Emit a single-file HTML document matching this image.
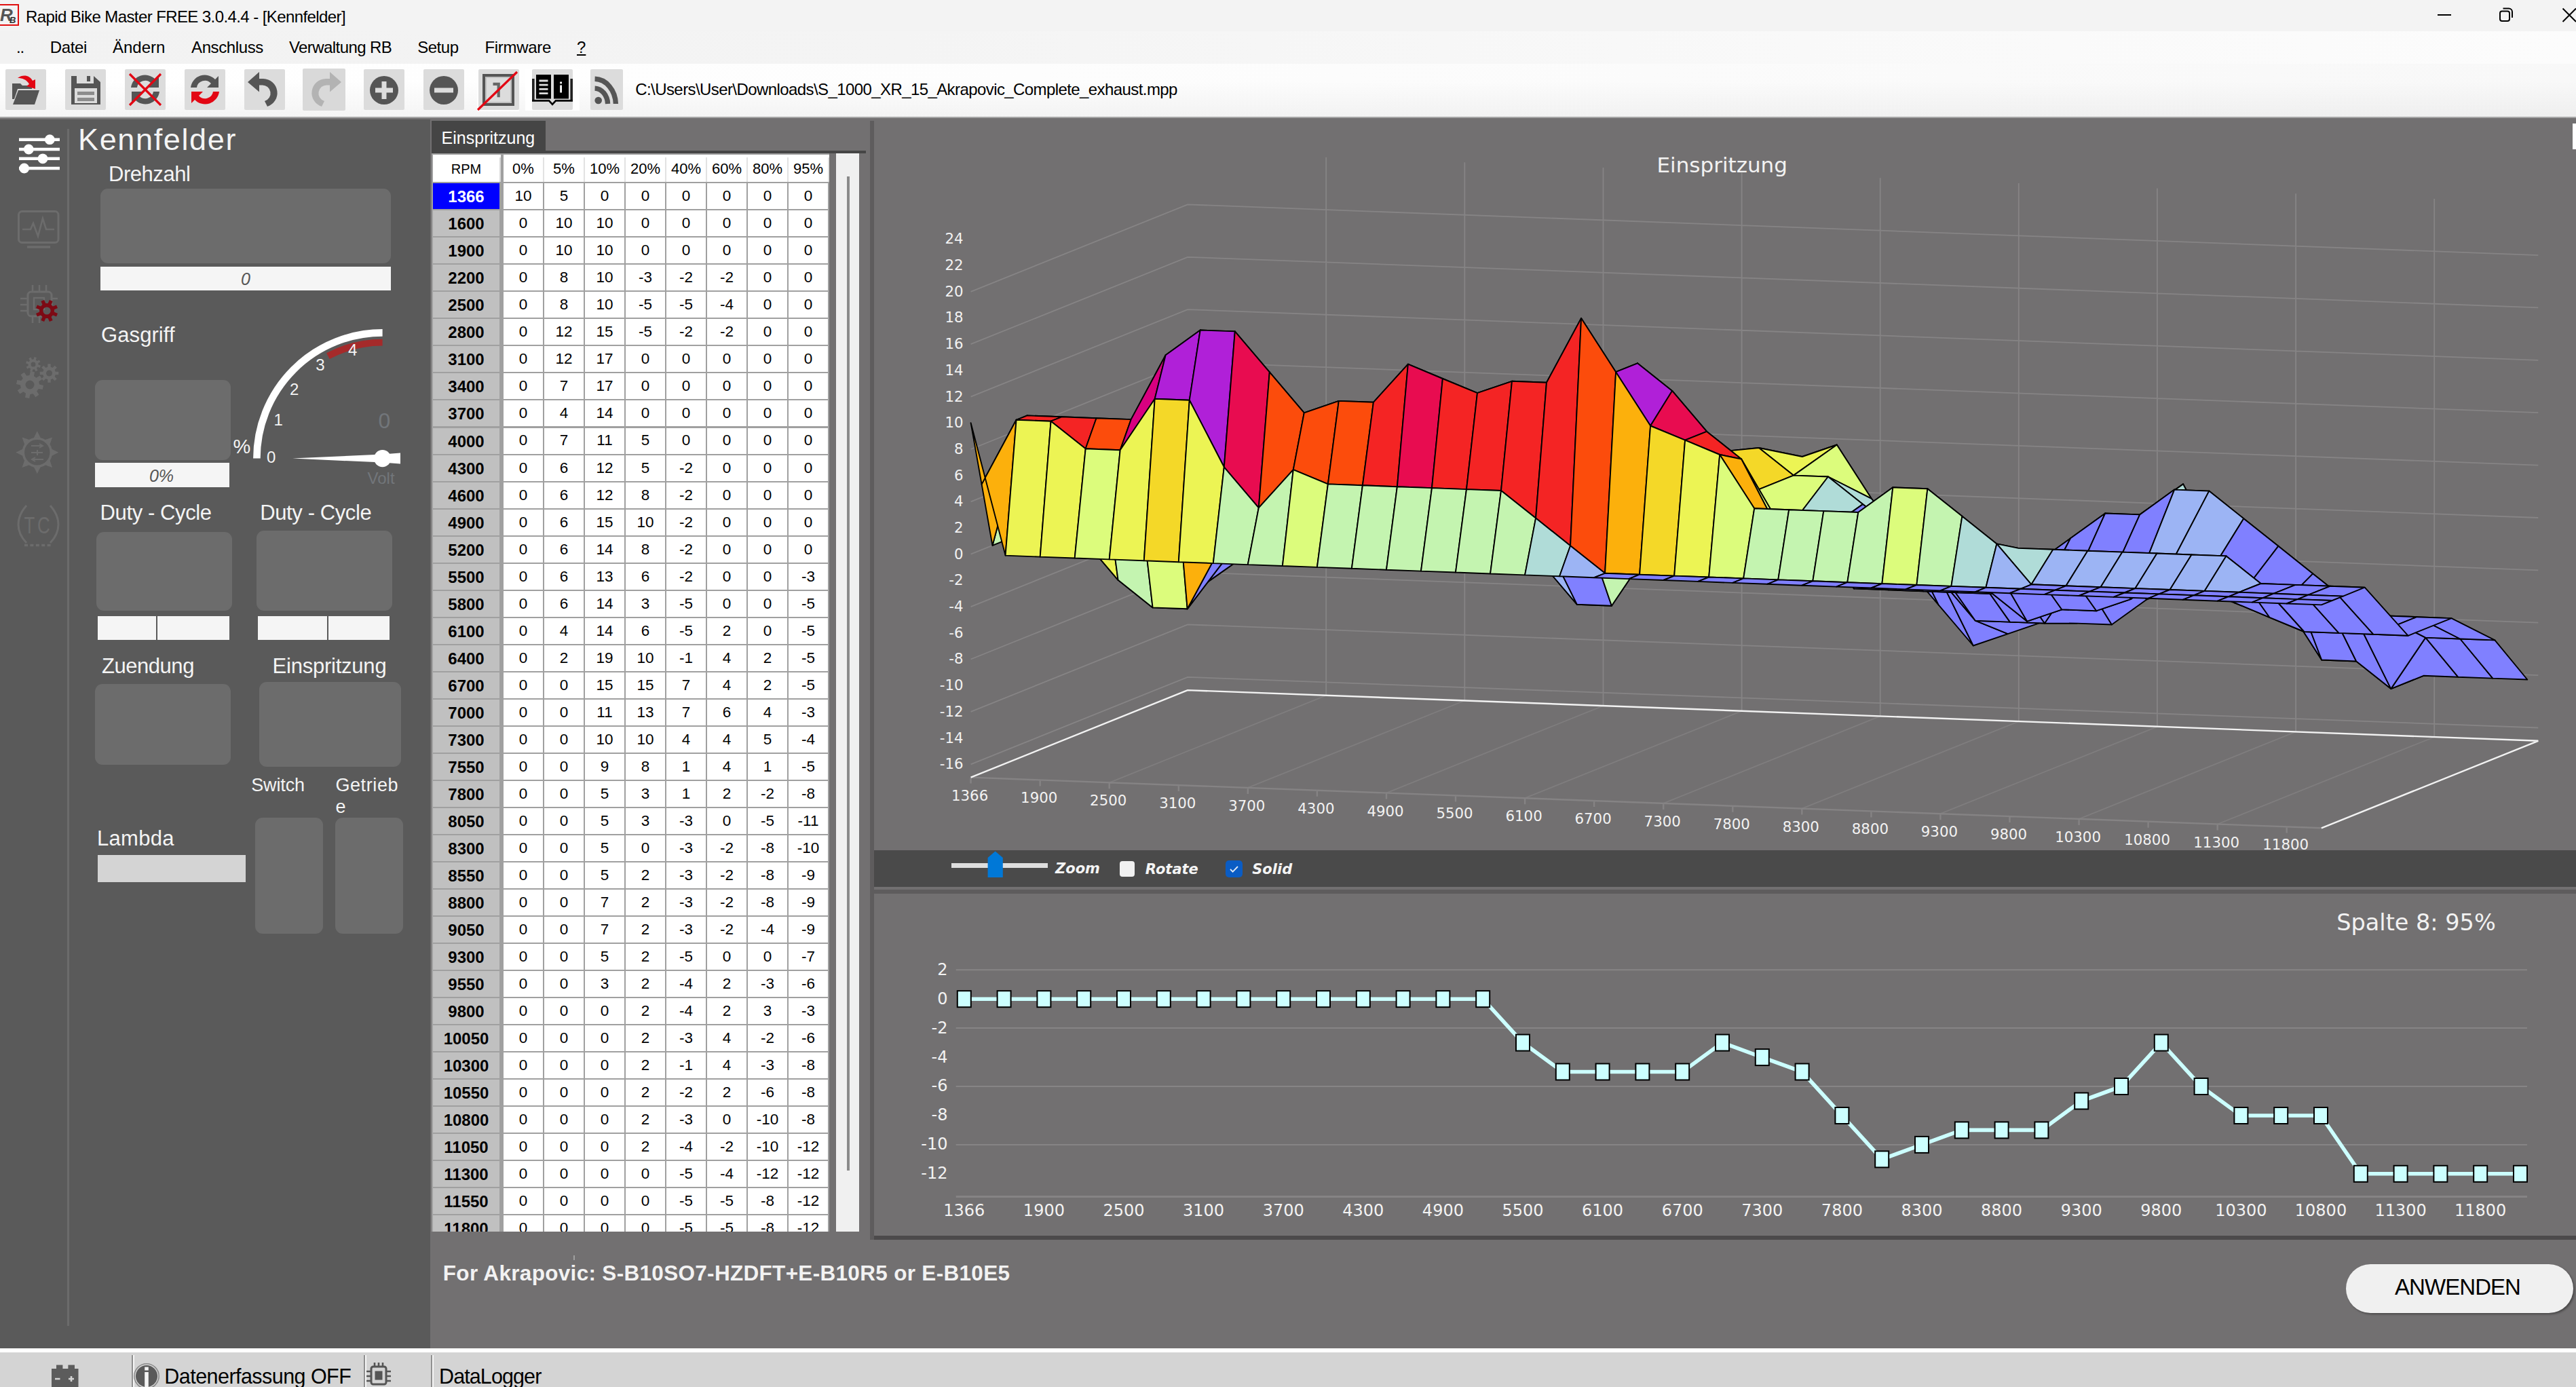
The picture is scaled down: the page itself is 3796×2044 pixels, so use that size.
<!DOCTYPE html>
<html><head><meta charset="utf-8"><title>Rapid Bike Master FREE 3.0.4.4 - [Kennfelder]</title>
<style>
html,body{margin:0;padding:0;}
body{width:3796px;height:2044px;overflow:hidden;position:relative;background:#727071;font-family:"Liberation Sans",sans-serif;}
svg{position:absolute;overflow:visible;}
svg text{white-space:pre;}
</style></head><body>
<div style="position:absolute;left:0.00px;top:0.00px;width:3796.00px;height:46.00px;background:#f3f3f3;"></div>
<div style="position:absolute;left:0.00px;top:46.00px;width:3796.00px;height:47.50px;background:linear-gradient(90deg,#f2f2f2 0%,#f4f4f4 35%,#f9f9f9 70%,#fcfcfc 100%);"></div>
<div style="position:absolute;left:0.00px;top:93.50px;width:3796.00px;height:78.50px;background:linear-gradient(90deg,#ffffff 0%,#fdfdfd 40%,#f8f8f8 100%);"></div>
<div style="position:absolute;left:0.00px;top:120.00px;width:3796.00px;height:52.00px;background:linear-gradient(rgba(0,0,0,0),rgba(0,0,0,0.04));"></div>
<div style="position:absolute;left:0.00px;top:172.00px;width:3796.00px;height:2.30px;background:#a6a6a6;"></div>
<svg style="left:0;top:6px" width="30" height="34" viewBox="0 0 30 34">
<rect x="-4" y="1" width="31" height="30" fill="#f4f4f4" stroke="#e01010" stroke-width="2"/>
<text x="0" y="25" font-family="Liberation Sans, sans-serif" font-weight="bold" font-style="italic" font-size="26" fill="#555">R</text>
<text x="14" y="28" font-family="Liberation Sans, sans-serif" font-weight="bold" font-style="italic" font-size="13" fill="#333">B</text>
</svg>
<div style="position:absolute;top:12.88px;font:normal normal 24px/24px 'Liberation Sans', sans-serif;color:#000;white-space:nowrap;letter-spacing:-0.59px;left:38.00px;">Rapid Bike Master FREE 3.0.4.4 - [Kennfelder]</div>
<svg style="left:3580px;top:0" width="216" height="46" viewBox="0 0 216 46" fill="none" stroke="#000" stroke-width="2">
<path d="M12 22H32"/>
<rect x="104" y="16.5" width="14" height="14.5" rx="3"/>
<path d="M108.5 12.5H117a5 5 0 0 1 5 5V26"/>
<path d="M196.5 12.5L216 32M216 12.5L196.5 32"/>
</svg>
<div style="position:absolute;top:57.88px;font:normal normal 24px/24px 'Liberation Sans', sans-serif;color:#000;white-space:nowrap;letter-spacing:-1.168px;left:24.00px;">..</div>
<div style="position:absolute;top:57.88px;font:normal normal 24px/24px 'Liberation Sans', sans-serif;color:#000;white-space:nowrap;letter-spacing:-0.366px;left:73.80px;">Datei</div>
<div style="position:absolute;top:57.88px;font:normal normal 24px/24px 'Liberation Sans', sans-serif;color:#000;white-space:nowrap;letter-spacing:0.001px;left:166.00px;">Ändern</div>
<div style="position:absolute;top:57.88px;font:normal normal 24px/24px 'Liberation Sans', sans-serif;color:#000;white-space:nowrap;letter-spacing:-0.376px;left:282.00px;">Anschluss</div>
<div style="position:absolute;top:57.88px;font:normal normal 24px/24px 'Liberation Sans', sans-serif;color:#000;white-space:nowrap;letter-spacing:-0.581px;left:426.00px;">Verwaltung RB</div>
<div style="position:absolute;top:57.88px;font:normal normal 24px/24px 'Liberation Sans', sans-serif;color:#000;white-space:nowrap;letter-spacing:-0.464px;left:615.20px;">Setup</div>
<div style="position:absolute;top:57.88px;font:normal normal 24px/24px 'Liberation Sans', sans-serif;color:#000;white-space:nowrap;letter-spacing:-0.3px;left:714.40px;">Firmware</div>
<div style="position:absolute;top:57.88px;font:normal normal 24px/24px 'Liberation Sans', sans-serif;color:#000;white-space:nowrap;left:850.00px;text-decoration:underline;">?</div>
<div style="position:absolute;left:8.00px;top:102.00px;width:60.00px;height:60.00px;background:#dcdcdc;border-radius:2px;"></div>
<svg style="left:8px;top:102px" width="60" height="60" viewBox="0 0 60 60">
<path d="M10 21h12l3 3h14v5H18l-5 15H10z" fill="#555555"/>
<path d="M19 31h31l-7 21H11z" fill="#555555"/>
<path d="M18 13c8-6 18-4 22 4l4-2 0 14-13-4 4-3c-4-7-10-9-17-9z" fill="#e30613"/>
</svg>
<div style="position:absolute;left:96.00px;top:102.00px;width:60.00px;height:60.00px;background:#dcdcdc;border-radius:2px;"></div>
<svg style="left:96px;top:102px" width="60" height="60" viewBox="0 0 60 60">
<path d="M9 10h33l10 9v33H9z" fill="#555555"/>
<rect x="17" y="10" width="25" height="11" fill="#dcdcdc"/>
<rect x="32" y="10" width="5" height="8" fill="#555555"/>
<rect x="14" y="28" width="33" height="22" fill="#dcdcdc"/>
<rect x="18" y="33" width="25" height="5" fill="#8c8c8c"/>
<rect x="18" y="42" width="25" height="5" fill="#8c8c8c"/>
</svg>
<div style="position:absolute;left:184.00px;top:102.00px;width:60.00px;height:60.00px;background:#dcdcdc;border-radius:2px;"></div>
<svg style="left:184px;top:102px" width="60" height="60" viewBox="0 0 60 60">
<path d="M9 27a21 21 0 0 1 36-12l5-5v17H33l6-6a12 12 0 0 0-21 6z" fill="#555555"/>
<path d="M51 33a21 21 0 0 1-36 12l-5 5V33h17l-6 6a12 12 0 0 0 21-6z" fill="#555555"/>
<path d="M7 7L53 53M53 7L7 53" stroke="#e30613" stroke-width="3.2"/>
</svg>
<div style="position:absolute;left:272.00px;top:102.00px;width:60.00px;height:60.00px;background:#dcdcdc;border-radius:2px;"></div>
<svg style="left:272px;top:102px" width="60" height="60" viewBox="0 0 60 60">
<path d="M9 27a21 21 0 0 1 36-12l5-5v17H33l6-6a12 12 0 0 0-21 6z" fill="#555555"/>
<path d="M51 33a21 21 0 0 1-36 12l-5 5V33h17l-6 6a12 12 0 0 0 21-6z" fill="#e30613"/>
</svg>
<div style="position:absolute;left:360.00px;top:102.00px;width:60.00px;height:60.00px;background:#dcdcdc;border-radius:2px;"></div>
<svg style="left:360px;top:102px" width="60" height="60" viewBox="0 0 60 60"><path d="M22 4v10h6a21 21 0 0 1 6 41l-4-8a12 12 0 0 0-4-23.5h-4v10L5 19z" fill="#555555"/></svg>
<div style="position:absolute;left:446.00px;top:101.00px;width:63.00px;height:62.00px;background:#d9d9d9;border-radius:2px;"></div>
<svg style="left:448px;top:102px" width="60" height="60" viewBox="0 0 60 60"><g transform="translate(60,0) scale(-1,1)"><path d="M22 4v10h6a21 21 0 0 1 6 41l-4-8a12 12 0 0 0-4-23.5h-4v10L5 19z" fill="#b3b3b3"/></g></svg>
<div style="position:absolute;left:536.00px;top:102.00px;width:60.00px;height:60.00px;background:#dcdcdc;border-radius:2px;"></div>
<svg style="left:536px;top:102px" width="60" height="60" viewBox="0 0 60 60">
<circle cx="30" cy="31" r="21" fill="#555555"/><path d="M30 18v26M17 31h26" stroke="#dcdcdc" stroke-width="7"/></svg>
<div style="position:absolute;left:624.00px;top:102.00px;width:60.00px;height:60.00px;background:#dcdcdc;border-radius:2px;"></div>
<svg style="left:624px;top:102px" width="60" height="60" viewBox="0 0 60 60">
<circle cx="30" cy="31" r="21" fill="#555555"/><path d="M16 31h28" stroke="#dcdcdc" stroke-width="7"/></svg>
<div style="position:absolute;left:702.50px;top:101.00px;width:62.50px;height:62.60px;background:#ffffff;"></div>
<div style="position:absolute;left:705.00px;top:102.00px;width:60.00px;height:60.00px;background:#dcdcdc;border-radius:2px;"></div>
<svg style="left:705px;top:102px" width="60" height="60" viewBox="0 0 60 60">
<rect x="8" y="9" width="43" height="43" fill="none" stroke="#555555" stroke-width="4"/>
<rect x="11" y="12" width="37" height="37" fill="none" stroke="#b4b4b4" stroke-width="1.4"/>
<path d="M21.5 21.8h8.2v19.5" fill="none" stroke="#666" stroke-width="4.2"/>
<path d="M-1 60L57 4" stroke="#e30613" stroke-width="3.2"/>
</svg>
<div style="position:absolute;left:774.00px;top:101.00px;width:80.00px;height:62.00px;background:#ffffff;"></div>
<div style="position:absolute;left:784.00px;top:102.00px;width:60.00px;height:60.00px;background:#dcdcdc;border-radius:2px;"></div>
<svg style="left:784px;top:102px" width="60" height="60" viewBox="0 0 60 60">
<path d="M1.8 14V46" fill="none" stroke="#222" stroke-width="3.6"/><path d="M58.2 14V46" fill="none" stroke="#222" stroke-width="3.6"/>
<path d="M0 46.4H25l5 5.5 5-5.5H60" fill="none" stroke="#000" stroke-width="2.6"/>
<rect x="6" y="8" width="22" height="35.5" fill="#000"/><rect x="32" y="8" width="22" height="35.5" fill="#000"/>
<path d="M10.5 17h13M10.5 23.2h13M10.5 29.4h13M10.5 35.6h13" stroke="#dcdcdc" stroke-width="2.8"/>
<rect x="41.2" y="18.5" width="2.8" height="2.8" fill="#fff"/><rect x="41.2" y="23.5" width="2.8" height="11" fill="#fff"/>
</svg>
<div style="position:absolute;left:870.00px;top:102.00px;width:48.00px;height:60.00px;background:#dcdcdc;border-radius:2px;"></div>
<svg style="left:870px;top:102px" width="48" height="60" viewBox="0 0 48 60" fill="none" stroke="#555555" stroke-width="7.4">
<path d="M6.6 14.3A31.5 38 0 0 1 37.4 51"/><path d="M6.6 28.1A19.6 24.2 0 0 1 25.6 51"/><circle cx="11.7" cy="46" r="5.3" fill="#555555" stroke="none"/></svg>
<div style="position:absolute;top:119.98px;font:normal normal 24px/24px 'Liberation Sans', sans-serif;color:#000;white-space:nowrap;letter-spacing:-0.586px;left:936.30px;">C:\Users\User\Downloads\S_1000_XR_15_Akrapovic_Complete_exhaust.mpp</div>
<div style="position:absolute;left:0.00px;top:176.30px;width:634.00px;height:1810.70px;background:#5a5a5a;"></div>
<div style="position:absolute;left:98.50px;top:190.00px;width:3.40px;height:1764.00px;background:#6b6b6b;"></div>
<svg style="left:20px;top:190px" width="80" height="70" viewBox="20 190 80 70">
<g stroke="#fff" stroke-width="4.4"><path d="M28 205.7H88M28 220H88M28 233.8H88M28 248H88"/></g>
<g fill="#fff"><circle cx="73.3" cy="205.7" r="7.4"/><circle cx="42.3" cy="220" r="7.4"/><circle cx="63" cy="233.8" r="7.4"/><circle cx="35.7" cy="248" r="7.4"/></g>
</svg>
<svg style="left:20px;top:300px" width="80" height="80" viewBox="20 300 80 80" fill="none" stroke="#6c6c6c" stroke-width="3">
<rect x="27.5" y="311.5" width="58.5" height="46" rx="5"/>
<path d="M33 338h12l4-9 7 19 7-26 5 16h12" stroke-width="2.6"/>
<path d="M40 364h34" stroke-width="3.6"/>
</svg>
<svg style="left:20px;top:415px" width="80" height="70" viewBox="20 415 80 70">
<g fill="none" stroke="#6c6c6c" stroke-width="3"><rect x="41" y="430" width="35" height="36" rx="5"/>
<path d="M48 420v10M58 420v10M68 420v10M48 466v10M58 466v10M30 440h11M30 449h11M30 458h11M76 440h9" stroke-width="2.6"/><rect x="50" y="439" width="15" height="17" stroke-width="2.4"/></g>
<path d="M79.9 459.7L85.0 461.9L83.1 466.6L77.9 464.5L75.5 466.9L77.6 472.1L72.9 474.0L70.7 468.9L67.3 468.9L65.1 474.0L60.4 472.1L62.5 466.9L60.1 464.5L54.9 466.6L53.0 461.9L58.1 459.7L58.1 456.3L53.0 454.1L54.9 449.4L60.1 451.5L62.5 449.1L60.4 443.9L65.1 442.0L67.3 447.1L70.7 447.1L72.9 442.0L77.6 443.9L75.5 449.1L77.9 451.5L83.1 449.4L85.0 454.1L79.9 456.3ZM74.6 458.0a5.6 5.6 0 1 0 -11.2 0a5.6 5.6 0 1 0 11.2 0Z" fill="#7d0a14" fill-rule="evenodd"/>
</svg>
<svg style="left:20px;top:520px" width="80" height="80" viewBox="20 520 80 80">
<path d="M58.0 566.5L64.0 567.9L62.7 574.0L56.7 572.9L54.2 576.5L57.5 581.7L52.3 585.2L48.8 580.2L44.5 581.0L43.1 587.0L37.0 585.7L38.1 579.7L34.5 577.2L29.3 580.5L25.8 575.3L30.8 571.8L30.0 567.5L24.0 566.1L25.3 560.0L31.3 561.1L33.8 557.5L30.5 552.3L35.7 548.8L39.2 553.8L43.5 553.0L44.9 547.0L51.0 548.3L49.9 554.3L53.5 556.8L58.7 553.5L62.2 558.7L57.2 562.2ZM50.5 567.0a6.5 6.5 0 1 0 -13.0 0a6.5 6.5 0 1 0 13.0 0Z" fill="#6c6c6c" fill-rule="evenodd"/><path d="M81.7 547.8L86.3 547.8L86.3 552.2L81.7 552.2L80.6 555.0L83.8 558.2L80.7 561.3L77.5 558.1L74.7 559.2L74.7 563.8L70.3 563.8L70.3 559.2L67.5 558.1L64.3 561.3L61.2 558.2L64.4 555.0L63.3 552.2L58.7 552.2L58.7 547.8L63.3 547.8L64.4 545.0L61.2 541.8L64.3 538.7L67.5 541.9L70.3 540.8L70.3 536.2L74.7 536.2L74.7 540.8L77.5 541.9L80.7 538.7L83.8 541.8L80.6 545.0ZM77.0 550.0a4.5 4.5 0 1 0 -9.0 0a4.5 4.5 0 1 0 9.0 0Z" fill="#6c6c6c" fill-rule="evenodd"/><path d="M56.5 537.5L59.9 538.6L58.9 541.9L55.4 540.8L54.0 542.6L55.6 545.8L52.5 547.4L50.9 544.3L48.5 544.5L47.4 547.9L44.1 546.9L45.2 543.4L43.4 542.0L40.2 543.6L38.6 540.5L41.7 538.9L41.5 536.5L38.1 535.4L39.1 532.1L42.6 533.2L44.0 531.4L42.4 528.2L45.5 526.6L47.1 529.7L49.5 529.5L50.6 526.1L53.9 527.1L52.8 530.6L54.6 532.0L57.8 530.4L59.4 533.5L56.3 535.1ZM52.5 537.0a3.5 3.5 0 1 0 -7.0 0a3.5 3.5 0 1 0 7.0 0Z" fill="#6c6c6c" fill-rule="evenodd"/>
</svg>
<svg style="left:20px;top:630px" width="80" height="80" viewBox="20 630 80 80">
<path d="M60.0 687.6L54.8 698.2L49.6 687.6ZM43.7 685.1L32.5 689.0L36.4 677.8ZM33.9 671.9L23.3 666.7L33.9 661.5ZM36.4 655.6L32.5 644.4L43.7 648.3ZM49.6 645.8L54.8 635.2L60.0 645.8ZM65.9 648.3L77.1 644.4L73.2 655.6ZM75.7 661.5L86.3 666.7L75.7 671.9ZM73.2 677.8L77.1 689.0L65.9 685.1Z" fill="#6c6c6c"/>
<circle cx="54.8" cy="666.7" r="20.5" fill="none" stroke="#6c6c6c" stroke-width="3.6"/>
<g stroke="#6c6c6c" stroke-width="2" fill="none"><path d="M46 657h17m-5-3l5 3-5 3M46 667h17M55 663v8M64 677H47m5-3l-5 3 5 3"/></g>
</svg>
<svg style="left:20px;top:735px" width="80" height="80" viewBox="20 735 80 80" fill="none" stroke="#6c6c6c" stroke-width="3">
<path d="M39 745c-16 18-16 38 0 55M74 745c16 18 16 38 0 55"/>
<path d="M36 803.5h39" stroke-width="3.5" stroke-dasharray="5 3.4"/>
<g transform="translate(56.5 786) scale(0.74 1)"><text x="0" y="0" text-anchor="middle" font-family="Liberation Sans, sans-serif" font-size="35" fill="#6c6c6c" stroke="none" letter-spacing="5">TC</text></g>
</svg>
<div style="position:absolute;top:182.91px;font:normal normal 45px/45px 'Liberation Sans', sans-serif;color:#f4f4f4;white-space:nowrap;letter-spacing:1.634px;left:115.00px;">Kennfelder</div>
<div style="position:absolute;top:241.26px;font:normal normal 31px/31px 'Liberation Sans', sans-serif;color:#f4f4f4;white-space:nowrap;letter-spacing:-0.458px;left:160.00px;">Drehzahl</div>
<div style="position:absolute;left:148.00px;top:278.30px;width:428.00px;height:109.40px;background:#6c6c6c;border-radius:11px;"></div>
<div style="position:absolute;left:148.00px;top:392.50px;width:428.00px;height:35.20px;background:#f5f5f5;"></div>
<div style="position:absolute;top:398.84px;font:italic normal 25px/25px 'Liberation Sans', sans-serif;color:#555;white-space:nowrap;left:362.00px;transform:translateX(-50%);">0</div>
<div style="position:absolute;top:477.76px;font:normal normal 31px/31px 'Liberation Sans', sans-serif;color:#f4f4f4;white-space:nowrap;letter-spacing:0.091px;left:149.00px;">Gasgriff</div>
<div style="position:absolute;left:139.70px;top:560.00px;width:200.10px;height:118.00px;background:#6c6c6c;border-radius:11px;"></div>
<div style="position:absolute;left:139.70px;top:682.00px;width:198.20px;height:36.00px;background:#f5f5f5;"></div>
<div style="position:absolute;top:688.84px;font:italic normal 25px/25px 'Liberation Sans', sans-serif;color:#555;white-space:nowrap;left:238.00px;transform:translateX(-50%);">0%</div>
<div style="position:absolute;top:739.76px;font:normal normal 31px/31px 'Liberation Sans', sans-serif;color:#f4f4f4;white-space:nowrap;letter-spacing:-0.4px;left:147.60px;">Duty - Cycle</div>
<div style="position:absolute;top:739.76px;font:normal normal 31px/31px 'Liberation Sans', sans-serif;color:#f4f4f4;white-space:nowrap;letter-spacing:-0.4px;left:383.30px;">Duty - Cycle</div>
<div style="position:absolute;left:141.50px;top:783.70px;width:200.50px;height:116.30px;background:#6c6c6c;border-radius:11px;"></div>
<div style="position:absolute;left:377.70px;top:781.80px;width:200.10px;height:118.20px;background:#6c6c6c;border-radius:11px;"></div>
<div style="position:absolute;left:143.90px;top:908.30px;width:194.00px;height:35.20px;background:#f5f5f5;"></div>
<div style="position:absolute;left:229.80px;top:908.30px;width:1.80px;height:35.20px;background:#5a5a5a;"></div>
<div style="position:absolute;left:379.60px;top:908.30px;width:194.40px;height:35.20px;background:#f5f5f5;"></div>
<div style="position:absolute;left:481.80px;top:908.30px;width:1.80px;height:35.20px;background:#5a5a5a;"></div>
<div style="position:absolute;top:965.76px;font:normal normal 31px/31px 'Liberation Sans', sans-serif;color:#f4f4f4;white-space:nowrap;letter-spacing:-0.465px;left:150.00px;">Zuendung</div>
<div style="position:absolute;top:965.76px;font:normal normal 31px/31px 'Liberation Sans', sans-serif;color:#f4f4f4;white-space:nowrap;letter-spacing:-0.233px;left:401.60px;">Einspritzung</div>
<div style="position:absolute;left:139.70px;top:1007.60px;width:200.10px;height:119.40px;background:#6c6c6c;border-radius:11px;"></div>
<div style="position:absolute;left:382.00px;top:1005.30px;width:209.40px;height:125.10px;background:#6c6c6c;border-radius:11px;"></div>
<div style="position:absolute;top:1144.14px;font:normal normal 27px/27px 'Liberation Sans', sans-serif;color:#f4f4f4;white-space:nowrap;letter-spacing:-0.137px;left:370.20px;">Switch</div>
<div style="position:absolute;top:1144.14px;font:normal normal 27px/27px 'Liberation Sans', sans-serif;color:#f4f4f4;white-space:nowrap;letter-spacing:0.608px;left:494.40px;">Getrieb</div>
<div style="position:absolute;top:1175.54px;font:normal normal 27px/27px 'Liberation Sans', sans-serif;color:#f4f4f4;white-space:nowrap;left:494.40px;">e</div>
<div style="position:absolute;left:375.90px;top:1205.40px;width:100.20px;height:171.10px;background:#6c6c6c;border-radius:11px;"></div>
<div style="position:absolute;left:494.00px;top:1205.40px;width:100.20px;height:171.10px;background:#6c6c6c;border-radius:11px;"></div>
<div style="position:absolute;top:1220.36px;font:normal normal 31px/31px 'Liberation Sans', sans-serif;color:#f4f4f4;white-space:nowrap;letter-spacing:0.312px;left:143.00px;">Lambda</div>
<div style="position:absolute;left:143.90px;top:1260.20px;width:218.40px;height:40.30px;background:#d4d4d4;"></div>
<svg style="left:340px;top:470px" width="280" height="260" viewBox="340 470 280 260">
<path d="M378.40000000000003 675.6A185.2 185.2 0 0 1 563.6 490.40000000000003" fill="none" stroke="#fff" stroke-width="10.6"/>
<path d="M483.4 524.7A170.9 170.9 0 0 1 563.6 504.70000000000005" fill="none" stroke="#a52a2a" stroke-width="9.8"/>
<path d="M431 675.6L563.6 669.6L590 667.6V683.6L563.6 681.6Z" fill="#fff"/>
<circle cx="563.6" cy="675.6" r="12.6" fill="#fff"/>
<g font-family="Liberation Sans, sans-serif" font-size="24" fill="#f4f4f4" text-anchor="middle">
<text x="399.7" y="681.6">0</text><text x="410.2" y="627.2">1</text><text x="433.7" y="581.5">2</text><text x="472" y="545.5">3</text><text x="519.8" y="523.5">4</text>
<text x="356.3" y="668" font-size="29">%</text>
<text x="566.5" y="631" font-size="32" fill="#72767a">0</text>
<text x="561.6" y="712.8" font-size="24" fill="#72767a">Volt</text>
</g>
</svg>
<div style="position:absolute;left:636.00px;top:178.00px;width:168.00px;height:48.00px;background:#454545;"></div>
<div style="position:absolute;top:191.14px;font:normal normal 25px/25px 'Liberation Sans', sans-serif;color:#ffffff;white-space:nowrap;letter-spacing:0.002px;left:650.60px;">Einspritzung</div>
<div style="position:absolute;left:636.00px;top:222.00px;width:640.00px;height:3.80px;background:#454545;"></div>
<div style="position:absolute;left:1282.00px;top:178.00px;width:6.00px;height:1648.80px;background:#5e5c5d;"></div>
<div style="position:absolute;left:636px;top:225.7px;width:640px;height:1589.8px;overflow:hidden;">
<div style="position:absolute;left:0.0px;top:0.0px;width:586.0px;height:1600.0px;background:#a0a0a0"></div>
<div style="position:absolute;left:2.0px;top:2.3px;width:100.0px;height:40.0px;background:#fff"></div>
<div style="position:absolute;left:100.0px;top:6.3px;width:2.0px;height:36.0px;background:#d8d8d8"></div>
<div style="position:absolute;left:106.0px;top:2.3px;width:480.0px;height:40.0px;background:#fff"></div>
<div style="position:absolute;left:164.0px;top:6.3px;width:2.0px;height:36.0px;background:#e2e2e2"></div>
<div style="position:absolute;left:224.0px;top:6.3px;width:2.0px;height:36.0px;background:#e2e2e2"></div>
<div style="position:absolute;left:284.0px;top:6.3px;width:2.0px;height:36.0px;background:#e2e2e2"></div>
<div style="position:absolute;left:344.0px;top:6.3px;width:2.0px;height:36.0px;background:#e2e2e2"></div>
<div style="position:absolute;left:404.0px;top:6.3px;width:2.0px;height:36.0px;background:#e2e2e2"></div>
<div style="position:absolute;left:464.0px;top:6.3px;width:2.0px;height:36.0px;background:#e2e2e2"></div>
<div style="position:absolute;left:524.0px;top:6.3px;width:2.0px;height:36.0px;background:#e2e2e2"></div>
<div style="position:absolute;left:584.0px;top:6.3px;width:2.0px;height:36.0px;background:#e2e2e2"></div>
<div style="position:absolute;left:51.0px;top:13.57px;transform:translateX(-50%);font:normal 20px/20px 'Liberation Sans', sans-serif;color:#000;white-space:nowrap">RPM</div>
<div style="position:absolute;left:135.0px;top:11.88px;transform:translateX(-50%);font:normal 22px/22px 'Liberation Sans', sans-serif;color:#000;white-space:nowrap">0%</div>
<div style="position:absolute;left:195.0px;top:11.88px;transform:translateX(-50%);font:normal 22px/22px 'Liberation Sans', sans-serif;color:#000;white-space:nowrap">5%</div>
<div style="position:absolute;left:255.0px;top:11.88px;transform:translateX(-50%);font:normal 22px/22px 'Liberation Sans', sans-serif;color:#000;white-space:nowrap">10%</div>
<div style="position:absolute;left:315.0px;top:11.88px;transform:translateX(-50%);font:normal 22px/22px 'Liberation Sans', sans-serif;color:#000;white-space:nowrap">20%</div>
<div style="position:absolute;left:375.0px;top:11.88px;transform:translateX(-50%);font:normal 22px/22px 'Liberation Sans', sans-serif;color:#000;white-space:nowrap">40%</div>
<div style="position:absolute;left:435.0px;top:11.88px;transform:translateX(-50%);font:normal 22px/22px 'Liberation Sans', sans-serif;color:#000;white-space:nowrap">60%</div>
<div style="position:absolute;left:495.0px;top:11.88px;transform:translateX(-50%);font:normal 22px/22px 'Liberation Sans', sans-serif;color:#000;white-space:nowrap">80%</div>
<div style="position:absolute;left:555.0px;top:11.88px;transform:translateX(-50%);font:normal 22px/22px 'Liberation Sans', sans-serif;color:#000;white-space:nowrap">95%</div>
<div style="position:absolute;left:2.0px;top:44.6px;width:98.0px;height:38.0px;background:#0000ff"></div>
<div style="position:absolute;left:51.0px;top:52.58px;transform:translateX(-50%);font:bold 24px/24px 'Liberation Sans', sans-serif;color:#fff;white-space:nowrap">1366</div>
<div style="position:absolute;left:106.0px;top:44.6px;width:58.0px;height:38.0px;background:#fff"></div>
<div style="position:absolute;left:135.0px;top:52.55px;transform:translateX(-50%);font:normal 22.5px/22.5px 'Liberation Sans', sans-serif;color:#000;white-space:nowrap">10</div>
<div style="position:absolute;left:166.0px;top:44.6px;width:58.0px;height:38.0px;background:#fff"></div>
<div style="position:absolute;left:195.0px;top:52.55px;transform:translateX(-50%);font:normal 22.5px/22.5px 'Liberation Sans', sans-serif;color:#000;white-space:nowrap">5</div>
<div style="position:absolute;left:226.0px;top:44.6px;width:58.0px;height:38.0px;background:#fff"></div>
<div style="position:absolute;left:255.0px;top:52.55px;transform:translateX(-50%);font:normal 22.5px/22.5px 'Liberation Sans', sans-serif;color:#000;white-space:nowrap">0</div>
<div style="position:absolute;left:286.0px;top:44.6px;width:58.0px;height:38.0px;background:#fff"></div>
<div style="position:absolute;left:315.0px;top:52.55px;transform:translateX(-50%);font:normal 22.5px/22.5px 'Liberation Sans', sans-serif;color:#000;white-space:nowrap">0</div>
<div style="position:absolute;left:346.0px;top:44.6px;width:58.0px;height:38.0px;background:#fff"></div>
<div style="position:absolute;left:375.0px;top:52.55px;transform:translateX(-50%);font:normal 22.5px/22.5px 'Liberation Sans', sans-serif;color:#000;white-space:nowrap">0</div>
<div style="position:absolute;left:406.0px;top:44.6px;width:58.0px;height:38.0px;background:#fff"></div>
<div style="position:absolute;left:435.0px;top:52.55px;transform:translateX(-50%);font:normal 22.5px/22.5px 'Liberation Sans', sans-serif;color:#000;white-space:nowrap">0</div>
<div style="position:absolute;left:466.0px;top:44.6px;width:58.0px;height:38.0px;background:#fff"></div>
<div style="position:absolute;left:495.0px;top:52.55px;transform:translateX(-50%);font:normal 22.5px/22.5px 'Liberation Sans', sans-serif;color:#000;white-space:nowrap">0</div>
<div style="position:absolute;left:526.0px;top:44.6px;width:58.0px;height:38.0px;background:#fff"></div>
<div style="position:absolute;left:555.0px;top:52.55px;transform:translateX(-50%);font:normal 22.5px/22.5px 'Liberation Sans', sans-serif;color:#000;white-space:nowrap">0</div>
<div style="position:absolute;left:2.0px;top:84.6px;width:98.0px;height:38.0px;background:#c0c0c0"></div>
<div style="position:absolute;left:51.0px;top:92.61px;transform:translateX(-50%);font:bold 24px/24px 'Liberation Sans', sans-serif;color:#000;white-space:nowrap">1600</div>
<div style="position:absolute;left:106.0px;top:84.6px;width:58.0px;height:38.0px;background:#fff"></div>
<div style="position:absolute;left:135.0px;top:92.58px;transform:translateX(-50%);font:normal 22.5px/22.5px 'Liberation Sans', sans-serif;color:#000;white-space:nowrap">0</div>
<div style="position:absolute;left:166.0px;top:84.6px;width:58.0px;height:38.0px;background:#fff"></div>
<div style="position:absolute;left:195.0px;top:92.58px;transform:translateX(-50%);font:normal 22.5px/22.5px 'Liberation Sans', sans-serif;color:#000;white-space:nowrap">10</div>
<div style="position:absolute;left:226.0px;top:84.6px;width:58.0px;height:38.0px;background:#fff"></div>
<div style="position:absolute;left:255.0px;top:92.58px;transform:translateX(-50%);font:normal 22.5px/22.5px 'Liberation Sans', sans-serif;color:#000;white-space:nowrap">10</div>
<div style="position:absolute;left:286.0px;top:84.6px;width:58.0px;height:38.0px;background:#fff"></div>
<div style="position:absolute;left:315.0px;top:92.58px;transform:translateX(-50%);font:normal 22.5px/22.5px 'Liberation Sans', sans-serif;color:#000;white-space:nowrap">0</div>
<div style="position:absolute;left:346.0px;top:84.6px;width:58.0px;height:38.0px;background:#fff"></div>
<div style="position:absolute;left:375.0px;top:92.58px;transform:translateX(-50%);font:normal 22.5px/22.5px 'Liberation Sans', sans-serif;color:#000;white-space:nowrap">0</div>
<div style="position:absolute;left:406.0px;top:84.6px;width:58.0px;height:38.0px;background:#fff"></div>
<div style="position:absolute;left:435.0px;top:92.58px;transform:translateX(-50%);font:normal 22.5px/22.5px 'Liberation Sans', sans-serif;color:#000;white-space:nowrap">0</div>
<div style="position:absolute;left:466.0px;top:84.6px;width:58.0px;height:38.0px;background:#fff"></div>
<div style="position:absolute;left:495.0px;top:92.58px;transform:translateX(-50%);font:normal 22.5px/22.5px 'Liberation Sans', sans-serif;color:#000;white-space:nowrap">0</div>
<div style="position:absolute;left:526.0px;top:84.6px;width:58.0px;height:38.0px;background:#fff"></div>
<div style="position:absolute;left:555.0px;top:92.58px;transform:translateX(-50%);font:normal 22.5px/22.5px 'Liberation Sans', sans-serif;color:#000;white-space:nowrap">0</div>
<div style="position:absolute;left:2.0px;top:124.7px;width:98.0px;height:38.0px;background:#c0c0c0"></div>
<div style="position:absolute;left:51.0px;top:132.64px;transform:translateX(-50%);font:bold 24px/24px 'Liberation Sans', sans-serif;color:#000;white-space:nowrap">1900</div>
<div style="position:absolute;left:106.0px;top:124.7px;width:58.0px;height:38.0px;background:#fff"></div>
<div style="position:absolute;left:135.0px;top:132.61px;transform:translateX(-50%);font:normal 22.5px/22.5px 'Liberation Sans', sans-serif;color:#000;white-space:nowrap">0</div>
<div style="position:absolute;left:166.0px;top:124.7px;width:58.0px;height:38.0px;background:#fff"></div>
<div style="position:absolute;left:195.0px;top:132.61px;transform:translateX(-50%);font:normal 22.5px/22.5px 'Liberation Sans', sans-serif;color:#000;white-space:nowrap">10</div>
<div style="position:absolute;left:226.0px;top:124.7px;width:58.0px;height:38.0px;background:#fff"></div>
<div style="position:absolute;left:255.0px;top:132.61px;transform:translateX(-50%);font:normal 22.5px/22.5px 'Liberation Sans', sans-serif;color:#000;white-space:nowrap">10</div>
<div style="position:absolute;left:286.0px;top:124.7px;width:58.0px;height:38.0px;background:#fff"></div>
<div style="position:absolute;left:315.0px;top:132.61px;transform:translateX(-50%);font:normal 22.5px/22.5px 'Liberation Sans', sans-serif;color:#000;white-space:nowrap">0</div>
<div style="position:absolute;left:346.0px;top:124.7px;width:58.0px;height:38.0px;background:#fff"></div>
<div style="position:absolute;left:375.0px;top:132.61px;transform:translateX(-50%);font:normal 22.5px/22.5px 'Liberation Sans', sans-serif;color:#000;white-space:nowrap">0</div>
<div style="position:absolute;left:406.0px;top:124.7px;width:58.0px;height:38.0px;background:#fff"></div>
<div style="position:absolute;left:435.0px;top:132.61px;transform:translateX(-50%);font:normal 22.5px/22.5px 'Liberation Sans', sans-serif;color:#000;white-space:nowrap">0</div>
<div style="position:absolute;left:466.0px;top:124.7px;width:58.0px;height:38.0px;background:#fff"></div>
<div style="position:absolute;left:495.0px;top:132.61px;transform:translateX(-50%);font:normal 22.5px/22.5px 'Liberation Sans', sans-serif;color:#000;white-space:nowrap">0</div>
<div style="position:absolute;left:526.0px;top:124.7px;width:58.0px;height:38.0px;background:#fff"></div>
<div style="position:absolute;left:555.0px;top:132.61px;transform:translateX(-50%);font:normal 22.5px/22.5px 'Liberation Sans', sans-serif;color:#000;white-space:nowrap">0</div>
<div style="position:absolute;left:2.0px;top:164.7px;width:98.0px;height:38.0px;background:#c0c0c0"></div>
<div style="position:absolute;left:51.0px;top:172.67px;transform:translateX(-50%);font:bold 24px/24px 'Liberation Sans', sans-serif;color:#000;white-space:nowrap">2200</div>
<div style="position:absolute;left:106.0px;top:164.7px;width:58.0px;height:38.0px;background:#fff"></div>
<div style="position:absolute;left:135.0px;top:172.64px;transform:translateX(-50%);font:normal 22.5px/22.5px 'Liberation Sans', sans-serif;color:#000;white-space:nowrap">0</div>
<div style="position:absolute;left:166.0px;top:164.7px;width:58.0px;height:38.0px;background:#fff"></div>
<div style="position:absolute;left:195.0px;top:172.64px;transform:translateX(-50%);font:normal 22.5px/22.5px 'Liberation Sans', sans-serif;color:#000;white-space:nowrap">8</div>
<div style="position:absolute;left:226.0px;top:164.7px;width:58.0px;height:38.0px;background:#fff"></div>
<div style="position:absolute;left:255.0px;top:172.64px;transform:translateX(-50%);font:normal 22.5px/22.5px 'Liberation Sans', sans-serif;color:#000;white-space:nowrap">10</div>
<div style="position:absolute;left:286.0px;top:164.7px;width:58.0px;height:38.0px;background:#fff"></div>
<div style="position:absolute;left:315.0px;top:172.64px;transform:translateX(-50%);font:normal 22.5px/22.5px 'Liberation Sans', sans-serif;color:#000;white-space:nowrap">-3</div>
<div style="position:absolute;left:346.0px;top:164.7px;width:58.0px;height:38.0px;background:#fff"></div>
<div style="position:absolute;left:375.0px;top:172.64px;transform:translateX(-50%);font:normal 22.5px/22.5px 'Liberation Sans', sans-serif;color:#000;white-space:nowrap">-2</div>
<div style="position:absolute;left:406.0px;top:164.7px;width:58.0px;height:38.0px;background:#fff"></div>
<div style="position:absolute;left:435.0px;top:172.64px;transform:translateX(-50%);font:normal 22.5px/22.5px 'Liberation Sans', sans-serif;color:#000;white-space:nowrap">-2</div>
<div style="position:absolute;left:466.0px;top:164.7px;width:58.0px;height:38.0px;background:#fff"></div>
<div style="position:absolute;left:495.0px;top:172.64px;transform:translateX(-50%);font:normal 22.5px/22.5px 'Liberation Sans', sans-serif;color:#000;white-space:nowrap">0</div>
<div style="position:absolute;left:526.0px;top:164.7px;width:58.0px;height:38.0px;background:#fff"></div>
<div style="position:absolute;left:555.0px;top:172.64px;transform:translateX(-50%);font:normal 22.5px/22.5px 'Liberation Sans', sans-serif;color:#000;white-space:nowrap">0</div>
<div style="position:absolute;left:2.0px;top:204.7px;width:98.0px;height:38.0px;background:#c0c0c0"></div>
<div style="position:absolute;left:51.0px;top:212.70px;transform:translateX(-50%);font:bold 24px/24px 'Liberation Sans', sans-serif;color:#000;white-space:nowrap">2500</div>
<div style="position:absolute;left:106.0px;top:204.7px;width:58.0px;height:38.0px;background:#fff"></div>
<div style="position:absolute;left:135.0px;top:212.67px;transform:translateX(-50%);font:normal 22.5px/22.5px 'Liberation Sans', sans-serif;color:#000;white-space:nowrap">0</div>
<div style="position:absolute;left:166.0px;top:204.7px;width:58.0px;height:38.0px;background:#fff"></div>
<div style="position:absolute;left:195.0px;top:212.67px;transform:translateX(-50%);font:normal 22.5px/22.5px 'Liberation Sans', sans-serif;color:#000;white-space:nowrap">8</div>
<div style="position:absolute;left:226.0px;top:204.7px;width:58.0px;height:38.0px;background:#fff"></div>
<div style="position:absolute;left:255.0px;top:212.67px;transform:translateX(-50%);font:normal 22.5px/22.5px 'Liberation Sans', sans-serif;color:#000;white-space:nowrap">10</div>
<div style="position:absolute;left:286.0px;top:204.7px;width:58.0px;height:38.0px;background:#fff"></div>
<div style="position:absolute;left:315.0px;top:212.67px;transform:translateX(-50%);font:normal 22.5px/22.5px 'Liberation Sans', sans-serif;color:#000;white-space:nowrap">-5</div>
<div style="position:absolute;left:346.0px;top:204.7px;width:58.0px;height:38.0px;background:#fff"></div>
<div style="position:absolute;left:375.0px;top:212.67px;transform:translateX(-50%);font:normal 22.5px/22.5px 'Liberation Sans', sans-serif;color:#000;white-space:nowrap">-5</div>
<div style="position:absolute;left:406.0px;top:204.7px;width:58.0px;height:38.0px;background:#fff"></div>
<div style="position:absolute;left:435.0px;top:212.67px;transform:translateX(-50%);font:normal 22.5px/22.5px 'Liberation Sans', sans-serif;color:#000;white-space:nowrap">-4</div>
<div style="position:absolute;left:466.0px;top:204.7px;width:58.0px;height:38.0px;background:#fff"></div>
<div style="position:absolute;left:495.0px;top:212.67px;transform:translateX(-50%);font:normal 22.5px/22.5px 'Liberation Sans', sans-serif;color:#000;white-space:nowrap">0</div>
<div style="position:absolute;left:526.0px;top:204.7px;width:58.0px;height:38.0px;background:#fff"></div>
<div style="position:absolute;left:555.0px;top:212.67px;transform:translateX(-50%);font:normal 22.5px/22.5px 'Liberation Sans', sans-serif;color:#000;white-space:nowrap">0</div>
<div style="position:absolute;left:2.0px;top:244.7px;width:98.0px;height:38.0px;background:#c0c0c0"></div>
<div style="position:absolute;left:51.0px;top:252.72px;transform:translateX(-50%);font:bold 24px/24px 'Liberation Sans', sans-serif;color:#000;white-space:nowrap">2800</div>
<div style="position:absolute;left:106.0px;top:244.7px;width:58.0px;height:38.0px;background:#fff"></div>
<div style="position:absolute;left:135.0px;top:252.69px;transform:translateX(-50%);font:normal 22.5px/22.5px 'Liberation Sans', sans-serif;color:#000;white-space:nowrap">0</div>
<div style="position:absolute;left:166.0px;top:244.7px;width:58.0px;height:38.0px;background:#fff"></div>
<div style="position:absolute;left:195.0px;top:252.69px;transform:translateX(-50%);font:normal 22.5px/22.5px 'Liberation Sans', sans-serif;color:#000;white-space:nowrap">12</div>
<div style="position:absolute;left:226.0px;top:244.7px;width:58.0px;height:38.0px;background:#fff"></div>
<div style="position:absolute;left:255.0px;top:252.69px;transform:translateX(-50%);font:normal 22.5px/22.5px 'Liberation Sans', sans-serif;color:#000;white-space:nowrap">15</div>
<div style="position:absolute;left:286.0px;top:244.7px;width:58.0px;height:38.0px;background:#fff"></div>
<div style="position:absolute;left:315.0px;top:252.69px;transform:translateX(-50%);font:normal 22.5px/22.5px 'Liberation Sans', sans-serif;color:#000;white-space:nowrap">-5</div>
<div style="position:absolute;left:346.0px;top:244.7px;width:58.0px;height:38.0px;background:#fff"></div>
<div style="position:absolute;left:375.0px;top:252.69px;transform:translateX(-50%);font:normal 22.5px/22.5px 'Liberation Sans', sans-serif;color:#000;white-space:nowrap">-2</div>
<div style="position:absolute;left:406.0px;top:244.7px;width:58.0px;height:38.0px;background:#fff"></div>
<div style="position:absolute;left:435.0px;top:252.69px;transform:translateX(-50%);font:normal 22.5px/22.5px 'Liberation Sans', sans-serif;color:#000;white-space:nowrap">-2</div>
<div style="position:absolute;left:466.0px;top:244.7px;width:58.0px;height:38.0px;background:#fff"></div>
<div style="position:absolute;left:495.0px;top:252.69px;transform:translateX(-50%);font:normal 22.5px/22.5px 'Liberation Sans', sans-serif;color:#000;white-space:nowrap">0</div>
<div style="position:absolute;left:526.0px;top:244.7px;width:58.0px;height:38.0px;background:#fff"></div>
<div style="position:absolute;left:555.0px;top:252.69px;transform:translateX(-50%);font:normal 22.5px/22.5px 'Liberation Sans', sans-serif;color:#000;white-space:nowrap">0</div>
<div style="position:absolute;left:2.0px;top:284.8px;width:98.0px;height:38.0px;background:#c0c0c0"></div>
<div style="position:absolute;left:51.0px;top:292.75px;transform:translateX(-50%);font:bold 24px/24px 'Liberation Sans', sans-serif;color:#000;white-space:nowrap">3100</div>
<div style="position:absolute;left:106.0px;top:284.8px;width:58.0px;height:38.0px;background:#fff"></div>
<div style="position:absolute;left:135.0px;top:292.72px;transform:translateX(-50%);font:normal 22.5px/22.5px 'Liberation Sans', sans-serif;color:#000;white-space:nowrap">0</div>
<div style="position:absolute;left:166.0px;top:284.8px;width:58.0px;height:38.0px;background:#fff"></div>
<div style="position:absolute;left:195.0px;top:292.72px;transform:translateX(-50%);font:normal 22.5px/22.5px 'Liberation Sans', sans-serif;color:#000;white-space:nowrap">12</div>
<div style="position:absolute;left:226.0px;top:284.8px;width:58.0px;height:38.0px;background:#fff"></div>
<div style="position:absolute;left:255.0px;top:292.72px;transform:translateX(-50%);font:normal 22.5px/22.5px 'Liberation Sans', sans-serif;color:#000;white-space:nowrap">17</div>
<div style="position:absolute;left:286.0px;top:284.8px;width:58.0px;height:38.0px;background:#fff"></div>
<div style="position:absolute;left:315.0px;top:292.72px;transform:translateX(-50%);font:normal 22.5px/22.5px 'Liberation Sans', sans-serif;color:#000;white-space:nowrap">0</div>
<div style="position:absolute;left:346.0px;top:284.8px;width:58.0px;height:38.0px;background:#fff"></div>
<div style="position:absolute;left:375.0px;top:292.72px;transform:translateX(-50%);font:normal 22.5px/22.5px 'Liberation Sans', sans-serif;color:#000;white-space:nowrap">0</div>
<div style="position:absolute;left:406.0px;top:284.8px;width:58.0px;height:38.0px;background:#fff"></div>
<div style="position:absolute;left:435.0px;top:292.72px;transform:translateX(-50%);font:normal 22.5px/22.5px 'Liberation Sans', sans-serif;color:#000;white-space:nowrap">0</div>
<div style="position:absolute;left:466.0px;top:284.8px;width:58.0px;height:38.0px;background:#fff"></div>
<div style="position:absolute;left:495.0px;top:292.72px;transform:translateX(-50%);font:normal 22.5px/22.5px 'Liberation Sans', sans-serif;color:#000;white-space:nowrap">0</div>
<div style="position:absolute;left:526.0px;top:284.8px;width:58.0px;height:38.0px;background:#fff"></div>
<div style="position:absolute;left:555.0px;top:292.72px;transform:translateX(-50%);font:normal 22.5px/22.5px 'Liberation Sans', sans-serif;color:#000;white-space:nowrap">0</div>
<div style="position:absolute;left:2.0px;top:324.8px;width:98.0px;height:38.0px;background:#c0c0c0"></div>
<div style="position:absolute;left:51.0px;top:332.78px;transform:translateX(-50%);font:bold 24px/24px 'Liberation Sans', sans-serif;color:#000;white-space:nowrap">3400</div>
<div style="position:absolute;left:106.0px;top:324.8px;width:58.0px;height:38.0px;background:#fff"></div>
<div style="position:absolute;left:135.0px;top:332.75px;transform:translateX(-50%);font:normal 22.5px/22.5px 'Liberation Sans', sans-serif;color:#000;white-space:nowrap">0</div>
<div style="position:absolute;left:166.0px;top:324.8px;width:58.0px;height:38.0px;background:#fff"></div>
<div style="position:absolute;left:195.0px;top:332.75px;transform:translateX(-50%);font:normal 22.5px/22.5px 'Liberation Sans', sans-serif;color:#000;white-space:nowrap">7</div>
<div style="position:absolute;left:226.0px;top:324.8px;width:58.0px;height:38.0px;background:#fff"></div>
<div style="position:absolute;left:255.0px;top:332.75px;transform:translateX(-50%);font:normal 22.5px/22.5px 'Liberation Sans', sans-serif;color:#000;white-space:nowrap">17</div>
<div style="position:absolute;left:286.0px;top:324.8px;width:58.0px;height:38.0px;background:#fff"></div>
<div style="position:absolute;left:315.0px;top:332.75px;transform:translateX(-50%);font:normal 22.5px/22.5px 'Liberation Sans', sans-serif;color:#000;white-space:nowrap">0</div>
<div style="position:absolute;left:346.0px;top:324.8px;width:58.0px;height:38.0px;background:#fff"></div>
<div style="position:absolute;left:375.0px;top:332.75px;transform:translateX(-50%);font:normal 22.5px/22.5px 'Liberation Sans', sans-serif;color:#000;white-space:nowrap">0</div>
<div style="position:absolute;left:406.0px;top:324.8px;width:58.0px;height:38.0px;background:#fff"></div>
<div style="position:absolute;left:435.0px;top:332.75px;transform:translateX(-50%);font:normal 22.5px/22.5px 'Liberation Sans', sans-serif;color:#000;white-space:nowrap">0</div>
<div style="position:absolute;left:466.0px;top:324.8px;width:58.0px;height:38.0px;background:#fff"></div>
<div style="position:absolute;left:495.0px;top:332.75px;transform:translateX(-50%);font:normal 22.5px/22.5px 'Liberation Sans', sans-serif;color:#000;white-space:nowrap">0</div>
<div style="position:absolute;left:526.0px;top:324.8px;width:58.0px;height:38.0px;background:#fff"></div>
<div style="position:absolute;left:555.0px;top:332.75px;transform:translateX(-50%);font:normal 22.5px/22.5px 'Liberation Sans', sans-serif;color:#000;white-space:nowrap">0</div>
<div style="position:absolute;left:2.0px;top:364.8px;width:98.0px;height:38.0px;background:#c0c0c0"></div>
<div style="position:absolute;left:51.0px;top:372.81px;transform:translateX(-50%);font:bold 24px/24px 'Liberation Sans', sans-serif;color:#000;white-space:nowrap">3700</div>
<div style="position:absolute;left:106.0px;top:364.8px;width:58.0px;height:38.0px;background:#fff"></div>
<div style="position:absolute;left:135.0px;top:372.78px;transform:translateX(-50%);font:normal 22.5px/22.5px 'Liberation Sans', sans-serif;color:#000;white-space:nowrap">0</div>
<div style="position:absolute;left:166.0px;top:364.8px;width:58.0px;height:38.0px;background:#fff"></div>
<div style="position:absolute;left:195.0px;top:372.78px;transform:translateX(-50%);font:normal 22.5px/22.5px 'Liberation Sans', sans-serif;color:#000;white-space:nowrap">4</div>
<div style="position:absolute;left:226.0px;top:364.8px;width:58.0px;height:38.0px;background:#fff"></div>
<div style="position:absolute;left:255.0px;top:372.78px;transform:translateX(-50%);font:normal 22.5px/22.5px 'Liberation Sans', sans-serif;color:#000;white-space:nowrap">14</div>
<div style="position:absolute;left:286.0px;top:364.8px;width:58.0px;height:38.0px;background:#fff"></div>
<div style="position:absolute;left:315.0px;top:372.78px;transform:translateX(-50%);font:normal 22.5px/22.5px 'Liberation Sans', sans-serif;color:#000;white-space:nowrap">0</div>
<div style="position:absolute;left:346.0px;top:364.8px;width:58.0px;height:38.0px;background:#fff"></div>
<div style="position:absolute;left:375.0px;top:372.78px;transform:translateX(-50%);font:normal 22.5px/22.5px 'Liberation Sans', sans-serif;color:#000;white-space:nowrap">0</div>
<div style="position:absolute;left:406.0px;top:364.8px;width:58.0px;height:38.0px;background:#fff"></div>
<div style="position:absolute;left:435.0px;top:372.78px;transform:translateX(-50%);font:normal 22.5px/22.5px 'Liberation Sans', sans-serif;color:#000;white-space:nowrap">0</div>
<div style="position:absolute;left:466.0px;top:364.8px;width:58.0px;height:38.0px;background:#fff"></div>
<div style="position:absolute;left:495.0px;top:372.78px;transform:translateX(-50%);font:normal 22.5px/22.5px 'Liberation Sans', sans-serif;color:#000;white-space:nowrap">0</div>
<div style="position:absolute;left:526.0px;top:364.8px;width:58.0px;height:38.0px;background:#fff"></div>
<div style="position:absolute;left:555.0px;top:372.78px;transform:translateX(-50%);font:normal 22.5px/22.5px 'Liberation Sans', sans-serif;color:#000;white-space:nowrap">0</div>
<div style="position:absolute;left:2.0px;top:404.9px;width:98.0px;height:38.0px;background:#c0c0c0"></div>
<div style="position:absolute;left:51.0px;top:412.84px;transform:translateX(-50%);font:bold 24px/24px 'Liberation Sans', sans-serif;color:#000;white-space:nowrap">4000</div>
<div style="position:absolute;left:106.0px;top:404.9px;width:58.0px;height:38.0px;background:#fff"></div>
<div style="position:absolute;left:135.0px;top:412.81px;transform:translateX(-50%);font:normal 22.5px/22.5px 'Liberation Sans', sans-serif;color:#000;white-space:nowrap">0</div>
<div style="position:absolute;left:166.0px;top:404.9px;width:58.0px;height:38.0px;background:#fff"></div>
<div style="position:absolute;left:195.0px;top:412.81px;transform:translateX(-50%);font:normal 22.5px/22.5px 'Liberation Sans', sans-serif;color:#000;white-space:nowrap">7</div>
<div style="position:absolute;left:226.0px;top:404.9px;width:58.0px;height:38.0px;background:#fff"></div>
<div style="position:absolute;left:255.0px;top:412.81px;transform:translateX(-50%);font:normal 22.5px/22.5px 'Liberation Sans', sans-serif;color:#000;white-space:nowrap">11</div>
<div style="position:absolute;left:286.0px;top:404.9px;width:58.0px;height:38.0px;background:#fff"></div>
<div style="position:absolute;left:315.0px;top:412.81px;transform:translateX(-50%);font:normal 22.5px/22.5px 'Liberation Sans', sans-serif;color:#000;white-space:nowrap">5</div>
<div style="position:absolute;left:346.0px;top:404.9px;width:58.0px;height:38.0px;background:#fff"></div>
<div style="position:absolute;left:375.0px;top:412.81px;transform:translateX(-50%);font:normal 22.5px/22.5px 'Liberation Sans', sans-serif;color:#000;white-space:nowrap">0</div>
<div style="position:absolute;left:406.0px;top:404.9px;width:58.0px;height:38.0px;background:#fff"></div>
<div style="position:absolute;left:435.0px;top:412.81px;transform:translateX(-50%);font:normal 22.5px/22.5px 'Liberation Sans', sans-serif;color:#000;white-space:nowrap">0</div>
<div style="position:absolute;left:466.0px;top:404.9px;width:58.0px;height:38.0px;background:#fff"></div>
<div style="position:absolute;left:495.0px;top:412.81px;transform:translateX(-50%);font:normal 22.5px/22.5px 'Liberation Sans', sans-serif;color:#000;white-space:nowrap">0</div>
<div style="position:absolute;left:526.0px;top:404.9px;width:58.0px;height:38.0px;background:#fff"></div>
<div style="position:absolute;left:555.0px;top:412.81px;transform:translateX(-50%);font:normal 22.5px/22.5px 'Liberation Sans', sans-serif;color:#000;white-space:nowrap">0</div>
<div style="position:absolute;left:2.0px;top:444.9px;width:98.0px;height:38.0px;background:#c0c0c0"></div>
<div style="position:absolute;left:51.0px;top:452.86px;transform:translateX(-50%);font:bold 24px/24px 'Liberation Sans', sans-serif;color:#000;white-space:nowrap">4300</div>
<div style="position:absolute;left:106.0px;top:444.9px;width:58.0px;height:38.0px;background:#fff"></div>
<div style="position:absolute;left:135.0px;top:452.83px;transform:translateX(-50%);font:normal 22.5px/22.5px 'Liberation Sans', sans-serif;color:#000;white-space:nowrap">0</div>
<div style="position:absolute;left:166.0px;top:444.9px;width:58.0px;height:38.0px;background:#fff"></div>
<div style="position:absolute;left:195.0px;top:452.83px;transform:translateX(-50%);font:normal 22.5px/22.5px 'Liberation Sans', sans-serif;color:#000;white-space:nowrap">6</div>
<div style="position:absolute;left:226.0px;top:444.9px;width:58.0px;height:38.0px;background:#fff"></div>
<div style="position:absolute;left:255.0px;top:452.83px;transform:translateX(-50%);font:normal 22.5px/22.5px 'Liberation Sans', sans-serif;color:#000;white-space:nowrap">12</div>
<div style="position:absolute;left:286.0px;top:444.9px;width:58.0px;height:38.0px;background:#fff"></div>
<div style="position:absolute;left:315.0px;top:452.83px;transform:translateX(-50%);font:normal 22.5px/22.5px 'Liberation Sans', sans-serif;color:#000;white-space:nowrap">5</div>
<div style="position:absolute;left:346.0px;top:444.9px;width:58.0px;height:38.0px;background:#fff"></div>
<div style="position:absolute;left:375.0px;top:452.83px;transform:translateX(-50%);font:normal 22.5px/22.5px 'Liberation Sans', sans-serif;color:#000;white-space:nowrap">-2</div>
<div style="position:absolute;left:406.0px;top:444.9px;width:58.0px;height:38.0px;background:#fff"></div>
<div style="position:absolute;left:435.0px;top:452.83px;transform:translateX(-50%);font:normal 22.5px/22.5px 'Liberation Sans', sans-serif;color:#000;white-space:nowrap">0</div>
<div style="position:absolute;left:466.0px;top:444.9px;width:58.0px;height:38.0px;background:#fff"></div>
<div style="position:absolute;left:495.0px;top:452.83px;transform:translateX(-50%);font:normal 22.5px/22.5px 'Liberation Sans', sans-serif;color:#000;white-space:nowrap">0</div>
<div style="position:absolute;left:526.0px;top:444.9px;width:58.0px;height:38.0px;background:#fff"></div>
<div style="position:absolute;left:555.0px;top:452.83px;transform:translateX(-50%);font:normal 22.5px/22.5px 'Liberation Sans', sans-serif;color:#000;white-space:nowrap">0</div>
<div style="position:absolute;left:2.0px;top:484.9px;width:98.0px;height:38.0px;background:#c0c0c0"></div>
<div style="position:absolute;left:51.0px;top:492.89px;transform:translateX(-50%);font:bold 24px/24px 'Liberation Sans', sans-serif;color:#000;white-space:nowrap">4600</div>
<div style="position:absolute;left:106.0px;top:484.9px;width:58.0px;height:38.0px;background:#fff"></div>
<div style="position:absolute;left:135.0px;top:492.86px;transform:translateX(-50%);font:normal 22.5px/22.5px 'Liberation Sans', sans-serif;color:#000;white-space:nowrap">0</div>
<div style="position:absolute;left:166.0px;top:484.9px;width:58.0px;height:38.0px;background:#fff"></div>
<div style="position:absolute;left:195.0px;top:492.86px;transform:translateX(-50%);font:normal 22.5px/22.5px 'Liberation Sans', sans-serif;color:#000;white-space:nowrap">6</div>
<div style="position:absolute;left:226.0px;top:484.9px;width:58.0px;height:38.0px;background:#fff"></div>
<div style="position:absolute;left:255.0px;top:492.86px;transform:translateX(-50%);font:normal 22.5px/22.5px 'Liberation Sans', sans-serif;color:#000;white-space:nowrap">12</div>
<div style="position:absolute;left:286.0px;top:484.9px;width:58.0px;height:38.0px;background:#fff"></div>
<div style="position:absolute;left:315.0px;top:492.86px;transform:translateX(-50%);font:normal 22.5px/22.5px 'Liberation Sans', sans-serif;color:#000;white-space:nowrap">8</div>
<div style="position:absolute;left:346.0px;top:484.9px;width:58.0px;height:38.0px;background:#fff"></div>
<div style="position:absolute;left:375.0px;top:492.86px;transform:translateX(-50%);font:normal 22.5px/22.5px 'Liberation Sans', sans-serif;color:#000;white-space:nowrap">-2</div>
<div style="position:absolute;left:406.0px;top:484.9px;width:58.0px;height:38.0px;background:#fff"></div>
<div style="position:absolute;left:435.0px;top:492.86px;transform:translateX(-50%);font:normal 22.5px/22.5px 'Liberation Sans', sans-serif;color:#000;white-space:nowrap">0</div>
<div style="position:absolute;left:466.0px;top:484.9px;width:58.0px;height:38.0px;background:#fff"></div>
<div style="position:absolute;left:495.0px;top:492.86px;transform:translateX(-50%);font:normal 22.5px/22.5px 'Liberation Sans', sans-serif;color:#000;white-space:nowrap">0</div>
<div style="position:absolute;left:526.0px;top:484.9px;width:58.0px;height:38.0px;background:#fff"></div>
<div style="position:absolute;left:555.0px;top:492.86px;transform:translateX(-50%);font:normal 22.5px/22.5px 'Liberation Sans', sans-serif;color:#000;white-space:nowrap">0</div>
<div style="position:absolute;left:2.0px;top:524.9px;width:98.0px;height:38.0px;background:#c0c0c0"></div>
<div style="position:absolute;left:51.0px;top:532.92px;transform:translateX(-50%);font:bold 24px/24px 'Liberation Sans', sans-serif;color:#000;white-space:nowrap">4900</div>
<div style="position:absolute;left:106.0px;top:524.9px;width:58.0px;height:38.0px;background:#fff"></div>
<div style="position:absolute;left:135.0px;top:532.89px;transform:translateX(-50%);font:normal 22.5px/22.5px 'Liberation Sans', sans-serif;color:#000;white-space:nowrap">0</div>
<div style="position:absolute;left:166.0px;top:524.9px;width:58.0px;height:38.0px;background:#fff"></div>
<div style="position:absolute;left:195.0px;top:532.89px;transform:translateX(-50%);font:normal 22.5px/22.5px 'Liberation Sans', sans-serif;color:#000;white-space:nowrap">6</div>
<div style="position:absolute;left:226.0px;top:524.9px;width:58.0px;height:38.0px;background:#fff"></div>
<div style="position:absolute;left:255.0px;top:532.89px;transform:translateX(-50%);font:normal 22.5px/22.5px 'Liberation Sans', sans-serif;color:#000;white-space:nowrap">15</div>
<div style="position:absolute;left:286.0px;top:524.9px;width:58.0px;height:38.0px;background:#fff"></div>
<div style="position:absolute;left:315.0px;top:532.89px;transform:translateX(-50%);font:normal 22.5px/22.5px 'Liberation Sans', sans-serif;color:#000;white-space:nowrap">10</div>
<div style="position:absolute;left:346.0px;top:524.9px;width:58.0px;height:38.0px;background:#fff"></div>
<div style="position:absolute;left:375.0px;top:532.89px;transform:translateX(-50%);font:normal 22.5px/22.5px 'Liberation Sans', sans-serif;color:#000;white-space:nowrap">-2</div>
<div style="position:absolute;left:406.0px;top:524.9px;width:58.0px;height:38.0px;background:#fff"></div>
<div style="position:absolute;left:435.0px;top:532.89px;transform:translateX(-50%);font:normal 22.5px/22.5px 'Liberation Sans', sans-serif;color:#000;white-space:nowrap">0</div>
<div style="position:absolute;left:466.0px;top:524.9px;width:58.0px;height:38.0px;background:#fff"></div>
<div style="position:absolute;left:495.0px;top:532.89px;transform:translateX(-50%);font:normal 22.5px/22.5px 'Liberation Sans', sans-serif;color:#000;white-space:nowrap">0</div>
<div style="position:absolute;left:526.0px;top:524.9px;width:58.0px;height:38.0px;background:#fff"></div>
<div style="position:absolute;left:555.0px;top:532.89px;transform:translateX(-50%);font:normal 22.5px/22.5px 'Liberation Sans', sans-serif;color:#000;white-space:nowrap">0</div>
<div style="position:absolute;left:2.0px;top:565.0px;width:98.0px;height:38.0px;background:#c0c0c0"></div>
<div style="position:absolute;left:51.0px;top:572.95px;transform:translateX(-50%);font:bold 24px/24px 'Liberation Sans', sans-serif;color:#000;white-space:nowrap">5200</div>
<div style="position:absolute;left:106.0px;top:565.0px;width:58.0px;height:38.0px;background:#fff"></div>
<div style="position:absolute;left:135.0px;top:572.92px;transform:translateX(-50%);font:normal 22.5px/22.5px 'Liberation Sans', sans-serif;color:#000;white-space:nowrap">0</div>
<div style="position:absolute;left:166.0px;top:565.0px;width:58.0px;height:38.0px;background:#fff"></div>
<div style="position:absolute;left:195.0px;top:572.92px;transform:translateX(-50%);font:normal 22.5px/22.5px 'Liberation Sans', sans-serif;color:#000;white-space:nowrap">6</div>
<div style="position:absolute;left:226.0px;top:565.0px;width:58.0px;height:38.0px;background:#fff"></div>
<div style="position:absolute;left:255.0px;top:572.92px;transform:translateX(-50%);font:normal 22.5px/22.5px 'Liberation Sans', sans-serif;color:#000;white-space:nowrap">14</div>
<div style="position:absolute;left:286.0px;top:565.0px;width:58.0px;height:38.0px;background:#fff"></div>
<div style="position:absolute;left:315.0px;top:572.92px;transform:translateX(-50%);font:normal 22.5px/22.5px 'Liberation Sans', sans-serif;color:#000;white-space:nowrap">8</div>
<div style="position:absolute;left:346.0px;top:565.0px;width:58.0px;height:38.0px;background:#fff"></div>
<div style="position:absolute;left:375.0px;top:572.92px;transform:translateX(-50%);font:normal 22.5px/22.5px 'Liberation Sans', sans-serif;color:#000;white-space:nowrap">-2</div>
<div style="position:absolute;left:406.0px;top:565.0px;width:58.0px;height:38.0px;background:#fff"></div>
<div style="position:absolute;left:435.0px;top:572.92px;transform:translateX(-50%);font:normal 22.5px/22.5px 'Liberation Sans', sans-serif;color:#000;white-space:nowrap">0</div>
<div style="position:absolute;left:466.0px;top:565.0px;width:58.0px;height:38.0px;background:#fff"></div>
<div style="position:absolute;left:495.0px;top:572.92px;transform:translateX(-50%);font:normal 22.5px/22.5px 'Liberation Sans', sans-serif;color:#000;white-space:nowrap">0</div>
<div style="position:absolute;left:526.0px;top:565.0px;width:58.0px;height:38.0px;background:#fff"></div>
<div style="position:absolute;left:555.0px;top:572.92px;transform:translateX(-50%);font:normal 22.5px/22.5px 'Liberation Sans', sans-serif;color:#000;white-space:nowrap">0</div>
<div style="position:absolute;left:2.0px;top:605.0px;width:98.0px;height:38.0px;background:#c0c0c0"></div>
<div style="position:absolute;left:51.0px;top:612.98px;transform:translateX(-50%);font:bold 24px/24px 'Liberation Sans', sans-serif;color:#000;white-space:nowrap">5500</div>
<div style="position:absolute;left:106.0px;top:605.0px;width:58.0px;height:38.0px;background:#fff"></div>
<div style="position:absolute;left:135.0px;top:612.95px;transform:translateX(-50%);font:normal 22.5px/22.5px 'Liberation Sans', sans-serif;color:#000;white-space:nowrap">0</div>
<div style="position:absolute;left:166.0px;top:605.0px;width:58.0px;height:38.0px;background:#fff"></div>
<div style="position:absolute;left:195.0px;top:612.95px;transform:translateX(-50%);font:normal 22.5px/22.5px 'Liberation Sans', sans-serif;color:#000;white-space:nowrap">6</div>
<div style="position:absolute;left:226.0px;top:605.0px;width:58.0px;height:38.0px;background:#fff"></div>
<div style="position:absolute;left:255.0px;top:612.95px;transform:translateX(-50%);font:normal 22.5px/22.5px 'Liberation Sans', sans-serif;color:#000;white-space:nowrap">13</div>
<div style="position:absolute;left:286.0px;top:605.0px;width:58.0px;height:38.0px;background:#fff"></div>
<div style="position:absolute;left:315.0px;top:612.95px;transform:translateX(-50%);font:normal 22.5px/22.5px 'Liberation Sans', sans-serif;color:#000;white-space:nowrap">6</div>
<div style="position:absolute;left:346.0px;top:605.0px;width:58.0px;height:38.0px;background:#fff"></div>
<div style="position:absolute;left:375.0px;top:612.95px;transform:translateX(-50%);font:normal 22.5px/22.5px 'Liberation Sans', sans-serif;color:#000;white-space:nowrap">-2</div>
<div style="position:absolute;left:406.0px;top:605.0px;width:58.0px;height:38.0px;background:#fff"></div>
<div style="position:absolute;left:435.0px;top:612.95px;transform:translateX(-50%);font:normal 22.5px/22.5px 'Liberation Sans', sans-serif;color:#000;white-space:nowrap">0</div>
<div style="position:absolute;left:466.0px;top:605.0px;width:58.0px;height:38.0px;background:#fff"></div>
<div style="position:absolute;left:495.0px;top:612.95px;transform:translateX(-50%);font:normal 22.5px/22.5px 'Liberation Sans', sans-serif;color:#000;white-space:nowrap">0</div>
<div style="position:absolute;left:526.0px;top:605.0px;width:58.0px;height:38.0px;background:#fff"></div>
<div style="position:absolute;left:555.0px;top:612.95px;transform:translateX(-50%);font:normal 22.5px/22.5px 'Liberation Sans', sans-serif;color:#000;white-space:nowrap">-3</div>
<div style="position:absolute;left:2.0px;top:645.0px;width:98.0px;height:38.0px;background:#c0c0c0"></div>
<div style="position:absolute;left:51.0px;top:653.00px;transform:translateX(-50%);font:bold 24px/24px 'Liberation Sans', sans-serif;color:#000;white-space:nowrap">5800</div>
<div style="position:absolute;left:106.0px;top:645.0px;width:58.0px;height:38.0px;background:#fff"></div>
<div style="position:absolute;left:135.0px;top:652.97px;transform:translateX(-50%);font:normal 22.5px/22.5px 'Liberation Sans', sans-serif;color:#000;white-space:nowrap">0</div>
<div style="position:absolute;left:166.0px;top:645.0px;width:58.0px;height:38.0px;background:#fff"></div>
<div style="position:absolute;left:195.0px;top:652.97px;transform:translateX(-50%);font:normal 22.5px/22.5px 'Liberation Sans', sans-serif;color:#000;white-space:nowrap">6</div>
<div style="position:absolute;left:226.0px;top:645.0px;width:58.0px;height:38.0px;background:#fff"></div>
<div style="position:absolute;left:255.0px;top:652.97px;transform:translateX(-50%);font:normal 22.5px/22.5px 'Liberation Sans', sans-serif;color:#000;white-space:nowrap">14</div>
<div style="position:absolute;left:286.0px;top:645.0px;width:58.0px;height:38.0px;background:#fff"></div>
<div style="position:absolute;left:315.0px;top:652.97px;transform:translateX(-50%);font:normal 22.5px/22.5px 'Liberation Sans', sans-serif;color:#000;white-space:nowrap">3</div>
<div style="position:absolute;left:346.0px;top:645.0px;width:58.0px;height:38.0px;background:#fff"></div>
<div style="position:absolute;left:375.0px;top:652.97px;transform:translateX(-50%);font:normal 22.5px/22.5px 'Liberation Sans', sans-serif;color:#000;white-space:nowrap">-5</div>
<div style="position:absolute;left:406.0px;top:645.0px;width:58.0px;height:38.0px;background:#fff"></div>
<div style="position:absolute;left:435.0px;top:652.97px;transform:translateX(-50%);font:normal 22.5px/22.5px 'Liberation Sans', sans-serif;color:#000;white-space:nowrap">0</div>
<div style="position:absolute;left:466.0px;top:645.0px;width:58.0px;height:38.0px;background:#fff"></div>
<div style="position:absolute;left:495.0px;top:652.97px;transform:translateX(-50%);font:normal 22.5px/22.5px 'Liberation Sans', sans-serif;color:#000;white-space:nowrap">0</div>
<div style="position:absolute;left:526.0px;top:645.0px;width:58.0px;height:38.0px;background:#fff"></div>
<div style="position:absolute;left:555.0px;top:652.97px;transform:translateX(-50%);font:normal 22.5px/22.5px 'Liberation Sans', sans-serif;color:#000;white-space:nowrap">-5</div>
<div style="position:absolute;left:2.0px;top:685.0px;width:98.0px;height:38.0px;background:#c0c0c0"></div>
<div style="position:absolute;left:51.0px;top:693.03px;transform:translateX(-50%);font:bold 24px/24px 'Liberation Sans', sans-serif;color:#000;white-space:nowrap">6100</div>
<div style="position:absolute;left:106.0px;top:685.0px;width:58.0px;height:38.0px;background:#fff"></div>
<div style="position:absolute;left:135.0px;top:693.00px;transform:translateX(-50%);font:normal 22.5px/22.5px 'Liberation Sans', sans-serif;color:#000;white-space:nowrap">0</div>
<div style="position:absolute;left:166.0px;top:685.0px;width:58.0px;height:38.0px;background:#fff"></div>
<div style="position:absolute;left:195.0px;top:693.00px;transform:translateX(-50%);font:normal 22.5px/22.5px 'Liberation Sans', sans-serif;color:#000;white-space:nowrap">4</div>
<div style="position:absolute;left:226.0px;top:685.0px;width:58.0px;height:38.0px;background:#fff"></div>
<div style="position:absolute;left:255.0px;top:693.00px;transform:translateX(-50%);font:normal 22.5px/22.5px 'Liberation Sans', sans-serif;color:#000;white-space:nowrap">14</div>
<div style="position:absolute;left:286.0px;top:685.0px;width:58.0px;height:38.0px;background:#fff"></div>
<div style="position:absolute;left:315.0px;top:693.00px;transform:translateX(-50%);font:normal 22.5px/22.5px 'Liberation Sans', sans-serif;color:#000;white-space:nowrap">6</div>
<div style="position:absolute;left:346.0px;top:685.0px;width:58.0px;height:38.0px;background:#fff"></div>
<div style="position:absolute;left:375.0px;top:693.00px;transform:translateX(-50%);font:normal 22.5px/22.5px 'Liberation Sans', sans-serif;color:#000;white-space:nowrap">-5</div>
<div style="position:absolute;left:406.0px;top:685.0px;width:58.0px;height:38.0px;background:#fff"></div>
<div style="position:absolute;left:435.0px;top:693.00px;transform:translateX(-50%);font:normal 22.5px/22.5px 'Liberation Sans', sans-serif;color:#000;white-space:nowrap">2</div>
<div style="position:absolute;left:466.0px;top:685.0px;width:58.0px;height:38.0px;background:#fff"></div>
<div style="position:absolute;left:495.0px;top:693.00px;transform:translateX(-50%);font:normal 22.5px/22.5px 'Liberation Sans', sans-serif;color:#000;white-space:nowrap">0</div>
<div style="position:absolute;left:526.0px;top:685.0px;width:58.0px;height:38.0px;background:#fff"></div>
<div style="position:absolute;left:555.0px;top:693.00px;transform:translateX(-50%);font:normal 22.5px/22.5px 'Liberation Sans', sans-serif;color:#000;white-space:nowrap">-5</div>
<div style="position:absolute;left:2.0px;top:725.1px;width:98.0px;height:38.0px;background:#c0c0c0"></div>
<div style="position:absolute;left:51.0px;top:733.06px;transform:translateX(-50%);font:bold 24px/24px 'Liberation Sans', sans-serif;color:#000;white-space:nowrap">6400</div>
<div style="position:absolute;left:106.0px;top:725.1px;width:58.0px;height:38.0px;background:#fff"></div>
<div style="position:absolute;left:135.0px;top:733.03px;transform:translateX(-50%);font:normal 22.5px/22.5px 'Liberation Sans', sans-serif;color:#000;white-space:nowrap">0</div>
<div style="position:absolute;left:166.0px;top:725.1px;width:58.0px;height:38.0px;background:#fff"></div>
<div style="position:absolute;left:195.0px;top:733.03px;transform:translateX(-50%);font:normal 22.5px/22.5px 'Liberation Sans', sans-serif;color:#000;white-space:nowrap">2</div>
<div style="position:absolute;left:226.0px;top:725.1px;width:58.0px;height:38.0px;background:#fff"></div>
<div style="position:absolute;left:255.0px;top:733.03px;transform:translateX(-50%);font:normal 22.5px/22.5px 'Liberation Sans', sans-serif;color:#000;white-space:nowrap">19</div>
<div style="position:absolute;left:286.0px;top:725.1px;width:58.0px;height:38.0px;background:#fff"></div>
<div style="position:absolute;left:315.0px;top:733.03px;transform:translateX(-50%);font:normal 22.5px/22.5px 'Liberation Sans', sans-serif;color:#000;white-space:nowrap">10</div>
<div style="position:absolute;left:346.0px;top:725.1px;width:58.0px;height:38.0px;background:#fff"></div>
<div style="position:absolute;left:375.0px;top:733.03px;transform:translateX(-50%);font:normal 22.5px/22.5px 'Liberation Sans', sans-serif;color:#000;white-space:nowrap">-1</div>
<div style="position:absolute;left:406.0px;top:725.1px;width:58.0px;height:38.0px;background:#fff"></div>
<div style="position:absolute;left:435.0px;top:733.03px;transform:translateX(-50%);font:normal 22.5px/22.5px 'Liberation Sans', sans-serif;color:#000;white-space:nowrap">4</div>
<div style="position:absolute;left:466.0px;top:725.1px;width:58.0px;height:38.0px;background:#fff"></div>
<div style="position:absolute;left:495.0px;top:733.03px;transform:translateX(-50%);font:normal 22.5px/22.5px 'Liberation Sans', sans-serif;color:#000;white-space:nowrap">2</div>
<div style="position:absolute;left:526.0px;top:725.1px;width:58.0px;height:38.0px;background:#fff"></div>
<div style="position:absolute;left:555.0px;top:733.03px;transform:translateX(-50%);font:normal 22.5px/22.5px 'Liberation Sans', sans-serif;color:#000;white-space:nowrap">-5</div>
<div style="position:absolute;left:2.0px;top:765.1px;width:98.0px;height:38.0px;background:#c0c0c0"></div>
<div style="position:absolute;left:51.0px;top:773.09px;transform:translateX(-50%);font:bold 24px/24px 'Liberation Sans', sans-serif;color:#000;white-space:nowrap">6700</div>
<div style="position:absolute;left:106.0px;top:765.1px;width:58.0px;height:38.0px;background:#fff"></div>
<div style="position:absolute;left:135.0px;top:773.06px;transform:translateX(-50%);font:normal 22.5px/22.5px 'Liberation Sans', sans-serif;color:#000;white-space:nowrap">0</div>
<div style="position:absolute;left:166.0px;top:765.1px;width:58.0px;height:38.0px;background:#fff"></div>
<div style="position:absolute;left:195.0px;top:773.06px;transform:translateX(-50%);font:normal 22.5px/22.5px 'Liberation Sans', sans-serif;color:#000;white-space:nowrap">0</div>
<div style="position:absolute;left:226.0px;top:765.1px;width:58.0px;height:38.0px;background:#fff"></div>
<div style="position:absolute;left:255.0px;top:773.06px;transform:translateX(-50%);font:normal 22.5px/22.5px 'Liberation Sans', sans-serif;color:#000;white-space:nowrap">15</div>
<div style="position:absolute;left:286.0px;top:765.1px;width:58.0px;height:38.0px;background:#fff"></div>
<div style="position:absolute;left:315.0px;top:773.06px;transform:translateX(-50%);font:normal 22.5px/22.5px 'Liberation Sans', sans-serif;color:#000;white-space:nowrap">15</div>
<div style="position:absolute;left:346.0px;top:765.1px;width:58.0px;height:38.0px;background:#fff"></div>
<div style="position:absolute;left:375.0px;top:773.06px;transform:translateX(-50%);font:normal 22.5px/22.5px 'Liberation Sans', sans-serif;color:#000;white-space:nowrap">7</div>
<div style="position:absolute;left:406.0px;top:765.1px;width:58.0px;height:38.0px;background:#fff"></div>
<div style="position:absolute;left:435.0px;top:773.06px;transform:translateX(-50%);font:normal 22.5px/22.5px 'Liberation Sans', sans-serif;color:#000;white-space:nowrap">4</div>
<div style="position:absolute;left:466.0px;top:765.1px;width:58.0px;height:38.0px;background:#fff"></div>
<div style="position:absolute;left:495.0px;top:773.06px;transform:translateX(-50%);font:normal 22.5px/22.5px 'Liberation Sans', sans-serif;color:#000;white-space:nowrap">2</div>
<div style="position:absolute;left:526.0px;top:765.1px;width:58.0px;height:38.0px;background:#fff"></div>
<div style="position:absolute;left:555.0px;top:773.06px;transform:translateX(-50%);font:normal 22.5px/22.5px 'Liberation Sans', sans-serif;color:#000;white-space:nowrap">-5</div>
<div style="position:absolute;left:2.0px;top:805.1px;width:98.0px;height:38.0px;background:#c0c0c0"></div>
<div style="position:absolute;left:51.0px;top:813.12px;transform:translateX(-50%);font:bold 24px/24px 'Liberation Sans', sans-serif;color:#000;white-space:nowrap">7000</div>
<div style="position:absolute;left:106.0px;top:805.1px;width:58.0px;height:38.0px;background:#fff"></div>
<div style="position:absolute;left:135.0px;top:813.09px;transform:translateX(-50%);font:normal 22.5px/22.5px 'Liberation Sans', sans-serif;color:#000;white-space:nowrap">0</div>
<div style="position:absolute;left:166.0px;top:805.1px;width:58.0px;height:38.0px;background:#fff"></div>
<div style="position:absolute;left:195.0px;top:813.09px;transform:translateX(-50%);font:normal 22.5px/22.5px 'Liberation Sans', sans-serif;color:#000;white-space:nowrap">0</div>
<div style="position:absolute;left:226.0px;top:805.1px;width:58.0px;height:38.0px;background:#fff"></div>
<div style="position:absolute;left:255.0px;top:813.09px;transform:translateX(-50%);font:normal 22.5px/22.5px 'Liberation Sans', sans-serif;color:#000;white-space:nowrap">11</div>
<div style="position:absolute;left:286.0px;top:805.1px;width:58.0px;height:38.0px;background:#fff"></div>
<div style="position:absolute;left:315.0px;top:813.09px;transform:translateX(-50%);font:normal 22.5px/22.5px 'Liberation Sans', sans-serif;color:#000;white-space:nowrap">13</div>
<div style="position:absolute;left:346.0px;top:805.1px;width:58.0px;height:38.0px;background:#fff"></div>
<div style="position:absolute;left:375.0px;top:813.09px;transform:translateX(-50%);font:normal 22.5px/22.5px 'Liberation Sans', sans-serif;color:#000;white-space:nowrap">7</div>
<div style="position:absolute;left:406.0px;top:805.1px;width:58.0px;height:38.0px;background:#fff"></div>
<div style="position:absolute;left:435.0px;top:813.09px;transform:translateX(-50%);font:normal 22.5px/22.5px 'Liberation Sans', sans-serif;color:#000;white-space:nowrap">6</div>
<div style="position:absolute;left:466.0px;top:805.1px;width:58.0px;height:38.0px;background:#fff"></div>
<div style="position:absolute;left:495.0px;top:813.09px;transform:translateX(-50%);font:normal 22.5px/22.5px 'Liberation Sans', sans-serif;color:#000;white-space:nowrap">4</div>
<div style="position:absolute;left:526.0px;top:805.1px;width:58.0px;height:38.0px;background:#fff"></div>
<div style="position:absolute;left:555.0px;top:813.09px;transform:translateX(-50%);font:normal 22.5px/22.5px 'Liberation Sans', sans-serif;color:#000;white-space:nowrap">-3</div>
<div style="position:absolute;left:2.0px;top:845.2px;width:98.0px;height:38.0px;background:#c0c0c0"></div>
<div style="position:absolute;left:51.0px;top:853.14px;transform:translateX(-50%);font:bold 24px/24px 'Liberation Sans', sans-serif;color:#000;white-space:nowrap">7300</div>
<div style="position:absolute;left:106.0px;top:845.2px;width:58.0px;height:38.0px;background:#fff"></div>
<div style="position:absolute;left:135.0px;top:853.11px;transform:translateX(-50%);font:normal 22.5px/22.5px 'Liberation Sans', sans-serif;color:#000;white-space:nowrap">0</div>
<div style="position:absolute;left:166.0px;top:845.2px;width:58.0px;height:38.0px;background:#fff"></div>
<div style="position:absolute;left:195.0px;top:853.11px;transform:translateX(-50%);font:normal 22.5px/22.5px 'Liberation Sans', sans-serif;color:#000;white-space:nowrap">0</div>
<div style="position:absolute;left:226.0px;top:845.2px;width:58.0px;height:38.0px;background:#fff"></div>
<div style="position:absolute;left:255.0px;top:853.11px;transform:translateX(-50%);font:normal 22.5px/22.5px 'Liberation Sans', sans-serif;color:#000;white-space:nowrap">10</div>
<div style="position:absolute;left:286.0px;top:845.2px;width:58.0px;height:38.0px;background:#fff"></div>
<div style="position:absolute;left:315.0px;top:853.11px;transform:translateX(-50%);font:normal 22.5px/22.5px 'Liberation Sans', sans-serif;color:#000;white-space:nowrap">10</div>
<div style="position:absolute;left:346.0px;top:845.2px;width:58.0px;height:38.0px;background:#fff"></div>
<div style="position:absolute;left:375.0px;top:853.11px;transform:translateX(-50%);font:normal 22.5px/22.5px 'Liberation Sans', sans-serif;color:#000;white-space:nowrap">4</div>
<div style="position:absolute;left:406.0px;top:845.2px;width:58.0px;height:38.0px;background:#fff"></div>
<div style="position:absolute;left:435.0px;top:853.11px;transform:translateX(-50%);font:normal 22.5px/22.5px 'Liberation Sans', sans-serif;color:#000;white-space:nowrap">4</div>
<div style="position:absolute;left:466.0px;top:845.2px;width:58.0px;height:38.0px;background:#fff"></div>
<div style="position:absolute;left:495.0px;top:853.11px;transform:translateX(-50%);font:normal 22.5px/22.5px 'Liberation Sans', sans-serif;color:#000;white-space:nowrap">5</div>
<div style="position:absolute;left:526.0px;top:845.2px;width:58.0px;height:38.0px;background:#fff"></div>
<div style="position:absolute;left:555.0px;top:853.11px;transform:translateX(-50%);font:normal 22.5px/22.5px 'Liberation Sans', sans-serif;color:#000;white-space:nowrap">-4</div>
<div style="position:absolute;left:2.0px;top:885.2px;width:98.0px;height:38.0px;background:#c0c0c0"></div>
<div style="position:absolute;left:51.0px;top:893.17px;transform:translateX(-50%);font:bold 24px/24px 'Liberation Sans', sans-serif;color:#000;white-space:nowrap">7550</div>
<div style="position:absolute;left:106.0px;top:885.2px;width:58.0px;height:38.0px;background:#fff"></div>
<div style="position:absolute;left:135.0px;top:893.14px;transform:translateX(-50%);font:normal 22.5px/22.5px 'Liberation Sans', sans-serif;color:#000;white-space:nowrap">0</div>
<div style="position:absolute;left:166.0px;top:885.2px;width:58.0px;height:38.0px;background:#fff"></div>
<div style="position:absolute;left:195.0px;top:893.14px;transform:translateX(-50%);font:normal 22.5px/22.5px 'Liberation Sans', sans-serif;color:#000;white-space:nowrap">0</div>
<div style="position:absolute;left:226.0px;top:885.2px;width:58.0px;height:38.0px;background:#fff"></div>
<div style="position:absolute;left:255.0px;top:893.14px;transform:translateX(-50%);font:normal 22.5px/22.5px 'Liberation Sans', sans-serif;color:#000;white-space:nowrap">9</div>
<div style="position:absolute;left:286.0px;top:885.2px;width:58.0px;height:38.0px;background:#fff"></div>
<div style="position:absolute;left:315.0px;top:893.14px;transform:translateX(-50%);font:normal 22.5px/22.5px 'Liberation Sans', sans-serif;color:#000;white-space:nowrap">8</div>
<div style="position:absolute;left:346.0px;top:885.2px;width:58.0px;height:38.0px;background:#fff"></div>
<div style="position:absolute;left:375.0px;top:893.14px;transform:translateX(-50%);font:normal 22.5px/22.5px 'Liberation Sans', sans-serif;color:#000;white-space:nowrap">1</div>
<div style="position:absolute;left:406.0px;top:885.2px;width:58.0px;height:38.0px;background:#fff"></div>
<div style="position:absolute;left:435.0px;top:893.14px;transform:translateX(-50%);font:normal 22.5px/22.5px 'Liberation Sans', sans-serif;color:#000;white-space:nowrap">4</div>
<div style="position:absolute;left:466.0px;top:885.2px;width:58.0px;height:38.0px;background:#fff"></div>
<div style="position:absolute;left:495.0px;top:893.14px;transform:translateX(-50%);font:normal 22.5px/22.5px 'Liberation Sans', sans-serif;color:#000;white-space:nowrap">1</div>
<div style="position:absolute;left:526.0px;top:885.2px;width:58.0px;height:38.0px;background:#fff"></div>
<div style="position:absolute;left:555.0px;top:893.14px;transform:translateX(-50%);font:normal 22.5px/22.5px 'Liberation Sans', sans-serif;color:#000;white-space:nowrap">-5</div>
<div style="position:absolute;left:2.0px;top:925.2px;width:98.0px;height:38.0px;background:#c0c0c0"></div>
<div style="position:absolute;left:51.0px;top:933.20px;transform:translateX(-50%);font:bold 24px/24px 'Liberation Sans', sans-serif;color:#000;white-space:nowrap">7800</div>
<div style="position:absolute;left:106.0px;top:925.2px;width:58.0px;height:38.0px;background:#fff"></div>
<div style="position:absolute;left:135.0px;top:933.17px;transform:translateX(-50%);font:normal 22.5px/22.5px 'Liberation Sans', sans-serif;color:#000;white-space:nowrap">0</div>
<div style="position:absolute;left:166.0px;top:925.2px;width:58.0px;height:38.0px;background:#fff"></div>
<div style="position:absolute;left:195.0px;top:933.17px;transform:translateX(-50%);font:normal 22.5px/22.5px 'Liberation Sans', sans-serif;color:#000;white-space:nowrap">0</div>
<div style="position:absolute;left:226.0px;top:925.2px;width:58.0px;height:38.0px;background:#fff"></div>
<div style="position:absolute;left:255.0px;top:933.17px;transform:translateX(-50%);font:normal 22.5px/22.5px 'Liberation Sans', sans-serif;color:#000;white-space:nowrap">5</div>
<div style="position:absolute;left:286.0px;top:925.2px;width:58.0px;height:38.0px;background:#fff"></div>
<div style="position:absolute;left:315.0px;top:933.17px;transform:translateX(-50%);font:normal 22.5px/22.5px 'Liberation Sans', sans-serif;color:#000;white-space:nowrap">3</div>
<div style="position:absolute;left:346.0px;top:925.2px;width:58.0px;height:38.0px;background:#fff"></div>
<div style="position:absolute;left:375.0px;top:933.17px;transform:translateX(-50%);font:normal 22.5px/22.5px 'Liberation Sans', sans-serif;color:#000;white-space:nowrap">1</div>
<div style="position:absolute;left:406.0px;top:925.2px;width:58.0px;height:38.0px;background:#fff"></div>
<div style="position:absolute;left:435.0px;top:933.17px;transform:translateX(-50%);font:normal 22.5px/22.5px 'Liberation Sans', sans-serif;color:#000;white-space:nowrap">2</div>
<div style="position:absolute;left:466.0px;top:925.2px;width:58.0px;height:38.0px;background:#fff"></div>
<div style="position:absolute;left:495.0px;top:933.17px;transform:translateX(-50%);font:normal 22.5px/22.5px 'Liberation Sans', sans-serif;color:#000;white-space:nowrap">-2</div>
<div style="position:absolute;left:526.0px;top:925.2px;width:58.0px;height:38.0px;background:#fff"></div>
<div style="position:absolute;left:555.0px;top:933.17px;transform:translateX(-50%);font:normal 22.5px/22.5px 'Liberation Sans', sans-serif;color:#000;white-space:nowrap">-8</div>
<div style="position:absolute;left:2.0px;top:965.2px;width:98.0px;height:38.0px;background:#c0c0c0"></div>
<div style="position:absolute;left:51.0px;top:973.23px;transform:translateX(-50%);font:bold 24px/24px 'Liberation Sans', sans-serif;color:#000;white-space:nowrap">8050</div>
<div style="position:absolute;left:106.0px;top:965.2px;width:58.0px;height:38.0px;background:#fff"></div>
<div style="position:absolute;left:135.0px;top:973.20px;transform:translateX(-50%);font:normal 22.5px/22.5px 'Liberation Sans', sans-serif;color:#000;white-space:nowrap">0</div>
<div style="position:absolute;left:166.0px;top:965.2px;width:58.0px;height:38.0px;background:#fff"></div>
<div style="position:absolute;left:195.0px;top:973.20px;transform:translateX(-50%);font:normal 22.5px/22.5px 'Liberation Sans', sans-serif;color:#000;white-space:nowrap">0</div>
<div style="position:absolute;left:226.0px;top:965.2px;width:58.0px;height:38.0px;background:#fff"></div>
<div style="position:absolute;left:255.0px;top:973.20px;transform:translateX(-50%);font:normal 22.5px/22.5px 'Liberation Sans', sans-serif;color:#000;white-space:nowrap">5</div>
<div style="position:absolute;left:286.0px;top:965.2px;width:58.0px;height:38.0px;background:#fff"></div>
<div style="position:absolute;left:315.0px;top:973.20px;transform:translateX(-50%);font:normal 22.5px/22.5px 'Liberation Sans', sans-serif;color:#000;white-space:nowrap">3</div>
<div style="position:absolute;left:346.0px;top:965.2px;width:58.0px;height:38.0px;background:#fff"></div>
<div style="position:absolute;left:375.0px;top:973.20px;transform:translateX(-50%);font:normal 22.5px/22.5px 'Liberation Sans', sans-serif;color:#000;white-space:nowrap">-3</div>
<div style="position:absolute;left:406.0px;top:965.2px;width:58.0px;height:38.0px;background:#fff"></div>
<div style="position:absolute;left:435.0px;top:973.20px;transform:translateX(-50%);font:normal 22.5px/22.5px 'Liberation Sans', sans-serif;color:#000;white-space:nowrap">0</div>
<div style="position:absolute;left:466.0px;top:965.2px;width:58.0px;height:38.0px;background:#fff"></div>
<div style="position:absolute;left:495.0px;top:973.20px;transform:translateX(-50%);font:normal 22.5px/22.5px 'Liberation Sans', sans-serif;color:#000;white-space:nowrap">-5</div>
<div style="position:absolute;left:526.0px;top:965.2px;width:58.0px;height:38.0px;background:#fff"></div>
<div style="position:absolute;left:555.0px;top:973.20px;transform:translateX(-50%);font:normal 22.5px/22.5px 'Liberation Sans', sans-serif;color:#000;white-space:nowrap">-11</div>
<div style="position:absolute;left:2.0px;top:1005.3px;width:98.0px;height:38.0px;background:#c0c0c0"></div>
<div style="position:absolute;left:51.0px;top:1013.26px;transform:translateX(-50%);font:bold 24px/24px 'Liberation Sans', sans-serif;color:#000;white-space:nowrap">8300</div>
<div style="position:absolute;left:106.0px;top:1005.3px;width:58.0px;height:38.0px;background:#fff"></div>
<div style="position:absolute;left:135.0px;top:1013.23px;transform:translateX(-50%);font:normal 22.5px/22.5px 'Liberation Sans', sans-serif;color:#000;white-space:nowrap">0</div>
<div style="position:absolute;left:166.0px;top:1005.3px;width:58.0px;height:38.0px;background:#fff"></div>
<div style="position:absolute;left:195.0px;top:1013.23px;transform:translateX(-50%);font:normal 22.5px/22.5px 'Liberation Sans', sans-serif;color:#000;white-space:nowrap">0</div>
<div style="position:absolute;left:226.0px;top:1005.3px;width:58.0px;height:38.0px;background:#fff"></div>
<div style="position:absolute;left:255.0px;top:1013.23px;transform:translateX(-50%);font:normal 22.5px/22.5px 'Liberation Sans', sans-serif;color:#000;white-space:nowrap">5</div>
<div style="position:absolute;left:286.0px;top:1005.3px;width:58.0px;height:38.0px;background:#fff"></div>
<div style="position:absolute;left:315.0px;top:1013.23px;transform:translateX(-50%);font:normal 22.5px/22.5px 'Liberation Sans', sans-serif;color:#000;white-space:nowrap">0</div>
<div style="position:absolute;left:346.0px;top:1005.3px;width:58.0px;height:38.0px;background:#fff"></div>
<div style="position:absolute;left:375.0px;top:1013.23px;transform:translateX(-50%);font:normal 22.5px/22.5px 'Liberation Sans', sans-serif;color:#000;white-space:nowrap">-3</div>
<div style="position:absolute;left:406.0px;top:1005.3px;width:58.0px;height:38.0px;background:#fff"></div>
<div style="position:absolute;left:435.0px;top:1013.23px;transform:translateX(-50%);font:normal 22.5px/22.5px 'Liberation Sans', sans-serif;color:#000;white-space:nowrap">-2</div>
<div style="position:absolute;left:466.0px;top:1005.3px;width:58.0px;height:38.0px;background:#fff"></div>
<div style="position:absolute;left:495.0px;top:1013.23px;transform:translateX(-50%);font:normal 22.5px/22.5px 'Liberation Sans', sans-serif;color:#000;white-space:nowrap">-8</div>
<div style="position:absolute;left:526.0px;top:1005.3px;width:58.0px;height:38.0px;background:#fff"></div>
<div style="position:absolute;left:555.0px;top:1013.23px;transform:translateX(-50%);font:normal 22.5px/22.5px 'Liberation Sans', sans-serif;color:#000;white-space:nowrap">-10</div>
<div style="position:absolute;left:2.0px;top:1045.3px;width:98.0px;height:38.0px;background:#c0c0c0"></div>
<div style="position:absolute;left:51.0px;top:1053.28px;transform:translateX(-50%);font:bold 24px/24px 'Liberation Sans', sans-serif;color:#000;white-space:nowrap">8550</div>
<div style="position:absolute;left:106.0px;top:1045.3px;width:58.0px;height:38.0px;background:#fff"></div>
<div style="position:absolute;left:135.0px;top:1053.25px;transform:translateX(-50%);font:normal 22.5px/22.5px 'Liberation Sans', sans-serif;color:#000;white-space:nowrap">0</div>
<div style="position:absolute;left:166.0px;top:1045.3px;width:58.0px;height:38.0px;background:#fff"></div>
<div style="position:absolute;left:195.0px;top:1053.25px;transform:translateX(-50%);font:normal 22.5px/22.5px 'Liberation Sans', sans-serif;color:#000;white-space:nowrap">0</div>
<div style="position:absolute;left:226.0px;top:1045.3px;width:58.0px;height:38.0px;background:#fff"></div>
<div style="position:absolute;left:255.0px;top:1053.25px;transform:translateX(-50%);font:normal 22.5px/22.5px 'Liberation Sans', sans-serif;color:#000;white-space:nowrap">5</div>
<div style="position:absolute;left:286.0px;top:1045.3px;width:58.0px;height:38.0px;background:#fff"></div>
<div style="position:absolute;left:315.0px;top:1053.25px;transform:translateX(-50%);font:normal 22.5px/22.5px 'Liberation Sans', sans-serif;color:#000;white-space:nowrap">2</div>
<div style="position:absolute;left:346.0px;top:1045.3px;width:58.0px;height:38.0px;background:#fff"></div>
<div style="position:absolute;left:375.0px;top:1053.25px;transform:translateX(-50%);font:normal 22.5px/22.5px 'Liberation Sans', sans-serif;color:#000;white-space:nowrap">-3</div>
<div style="position:absolute;left:406.0px;top:1045.3px;width:58.0px;height:38.0px;background:#fff"></div>
<div style="position:absolute;left:435.0px;top:1053.25px;transform:translateX(-50%);font:normal 22.5px/22.5px 'Liberation Sans', sans-serif;color:#000;white-space:nowrap">-2</div>
<div style="position:absolute;left:466.0px;top:1045.3px;width:58.0px;height:38.0px;background:#fff"></div>
<div style="position:absolute;left:495.0px;top:1053.25px;transform:translateX(-50%);font:normal 22.5px/22.5px 'Liberation Sans', sans-serif;color:#000;white-space:nowrap">-8</div>
<div style="position:absolute;left:526.0px;top:1045.3px;width:58.0px;height:38.0px;background:#fff"></div>
<div style="position:absolute;left:555.0px;top:1053.25px;transform:translateX(-50%);font:normal 22.5px/22.5px 'Liberation Sans', sans-serif;color:#000;white-space:nowrap">-9</div>
<div style="position:absolute;left:2.0px;top:1085.3px;width:98.0px;height:38.0px;background:#c0c0c0"></div>
<div style="position:absolute;left:51.0px;top:1093.31px;transform:translateX(-50%);font:bold 24px/24px 'Liberation Sans', sans-serif;color:#000;white-space:nowrap">8800</div>
<div style="position:absolute;left:106.0px;top:1085.3px;width:58.0px;height:38.0px;background:#fff"></div>
<div style="position:absolute;left:135.0px;top:1093.28px;transform:translateX(-50%);font:normal 22.5px/22.5px 'Liberation Sans', sans-serif;color:#000;white-space:nowrap">0</div>
<div style="position:absolute;left:166.0px;top:1085.3px;width:58.0px;height:38.0px;background:#fff"></div>
<div style="position:absolute;left:195.0px;top:1093.28px;transform:translateX(-50%);font:normal 22.5px/22.5px 'Liberation Sans', sans-serif;color:#000;white-space:nowrap">0</div>
<div style="position:absolute;left:226.0px;top:1085.3px;width:58.0px;height:38.0px;background:#fff"></div>
<div style="position:absolute;left:255.0px;top:1093.28px;transform:translateX(-50%);font:normal 22.5px/22.5px 'Liberation Sans', sans-serif;color:#000;white-space:nowrap">7</div>
<div style="position:absolute;left:286.0px;top:1085.3px;width:58.0px;height:38.0px;background:#fff"></div>
<div style="position:absolute;left:315.0px;top:1093.28px;transform:translateX(-50%);font:normal 22.5px/22.5px 'Liberation Sans', sans-serif;color:#000;white-space:nowrap">2</div>
<div style="position:absolute;left:346.0px;top:1085.3px;width:58.0px;height:38.0px;background:#fff"></div>
<div style="position:absolute;left:375.0px;top:1093.28px;transform:translateX(-50%);font:normal 22.5px/22.5px 'Liberation Sans', sans-serif;color:#000;white-space:nowrap">-3</div>
<div style="position:absolute;left:406.0px;top:1085.3px;width:58.0px;height:38.0px;background:#fff"></div>
<div style="position:absolute;left:435.0px;top:1093.28px;transform:translateX(-50%);font:normal 22.5px/22.5px 'Liberation Sans', sans-serif;color:#000;white-space:nowrap">-2</div>
<div style="position:absolute;left:466.0px;top:1085.3px;width:58.0px;height:38.0px;background:#fff"></div>
<div style="position:absolute;left:495.0px;top:1093.28px;transform:translateX(-50%);font:normal 22.5px/22.5px 'Liberation Sans', sans-serif;color:#000;white-space:nowrap">-8</div>
<div style="position:absolute;left:526.0px;top:1085.3px;width:58.0px;height:38.0px;background:#fff"></div>
<div style="position:absolute;left:555.0px;top:1093.28px;transform:translateX(-50%);font:normal 22.5px/22.5px 'Liberation Sans', sans-serif;color:#000;white-space:nowrap">-9</div>
<div style="position:absolute;left:2.0px;top:1125.4px;width:98.0px;height:38.0px;background:#c0c0c0"></div>
<div style="position:absolute;left:51.0px;top:1133.34px;transform:translateX(-50%);font:bold 24px/24px 'Liberation Sans', sans-serif;color:#000;white-space:nowrap">9050</div>
<div style="position:absolute;left:106.0px;top:1125.4px;width:58.0px;height:38.0px;background:#fff"></div>
<div style="position:absolute;left:135.0px;top:1133.31px;transform:translateX(-50%);font:normal 22.5px/22.5px 'Liberation Sans', sans-serif;color:#000;white-space:nowrap">0</div>
<div style="position:absolute;left:166.0px;top:1125.4px;width:58.0px;height:38.0px;background:#fff"></div>
<div style="position:absolute;left:195.0px;top:1133.31px;transform:translateX(-50%);font:normal 22.5px/22.5px 'Liberation Sans', sans-serif;color:#000;white-space:nowrap">0</div>
<div style="position:absolute;left:226.0px;top:1125.4px;width:58.0px;height:38.0px;background:#fff"></div>
<div style="position:absolute;left:255.0px;top:1133.31px;transform:translateX(-50%);font:normal 22.5px/22.5px 'Liberation Sans', sans-serif;color:#000;white-space:nowrap">7</div>
<div style="position:absolute;left:286.0px;top:1125.4px;width:58.0px;height:38.0px;background:#fff"></div>
<div style="position:absolute;left:315.0px;top:1133.31px;transform:translateX(-50%);font:normal 22.5px/22.5px 'Liberation Sans', sans-serif;color:#000;white-space:nowrap">2</div>
<div style="position:absolute;left:346.0px;top:1125.4px;width:58.0px;height:38.0px;background:#fff"></div>
<div style="position:absolute;left:375.0px;top:1133.31px;transform:translateX(-50%);font:normal 22.5px/22.5px 'Liberation Sans', sans-serif;color:#000;white-space:nowrap">-3</div>
<div style="position:absolute;left:406.0px;top:1125.4px;width:58.0px;height:38.0px;background:#fff"></div>
<div style="position:absolute;left:435.0px;top:1133.31px;transform:translateX(-50%);font:normal 22.5px/22.5px 'Liberation Sans', sans-serif;color:#000;white-space:nowrap">-2</div>
<div style="position:absolute;left:466.0px;top:1125.4px;width:58.0px;height:38.0px;background:#fff"></div>
<div style="position:absolute;left:495.0px;top:1133.31px;transform:translateX(-50%);font:normal 22.5px/22.5px 'Liberation Sans', sans-serif;color:#000;white-space:nowrap">-4</div>
<div style="position:absolute;left:526.0px;top:1125.4px;width:58.0px;height:38.0px;background:#fff"></div>
<div style="position:absolute;left:555.0px;top:1133.31px;transform:translateX(-50%);font:normal 22.5px/22.5px 'Liberation Sans', sans-serif;color:#000;white-space:nowrap">-9</div>
<div style="position:absolute;left:2.0px;top:1165.4px;width:98.0px;height:38.0px;background:#c0c0c0"></div>
<div style="position:absolute;left:51.0px;top:1173.37px;transform:translateX(-50%);font:bold 24px/24px 'Liberation Sans', sans-serif;color:#000;white-space:nowrap">9300</div>
<div style="position:absolute;left:106.0px;top:1165.4px;width:58.0px;height:38.0px;background:#fff"></div>
<div style="position:absolute;left:135.0px;top:1173.34px;transform:translateX(-50%);font:normal 22.5px/22.5px 'Liberation Sans', sans-serif;color:#000;white-space:nowrap">0</div>
<div style="position:absolute;left:166.0px;top:1165.4px;width:58.0px;height:38.0px;background:#fff"></div>
<div style="position:absolute;left:195.0px;top:1173.34px;transform:translateX(-50%);font:normal 22.5px/22.5px 'Liberation Sans', sans-serif;color:#000;white-space:nowrap">0</div>
<div style="position:absolute;left:226.0px;top:1165.4px;width:58.0px;height:38.0px;background:#fff"></div>
<div style="position:absolute;left:255.0px;top:1173.34px;transform:translateX(-50%);font:normal 22.5px/22.5px 'Liberation Sans', sans-serif;color:#000;white-space:nowrap">5</div>
<div style="position:absolute;left:286.0px;top:1165.4px;width:58.0px;height:38.0px;background:#fff"></div>
<div style="position:absolute;left:315.0px;top:1173.34px;transform:translateX(-50%);font:normal 22.5px/22.5px 'Liberation Sans', sans-serif;color:#000;white-space:nowrap">2</div>
<div style="position:absolute;left:346.0px;top:1165.4px;width:58.0px;height:38.0px;background:#fff"></div>
<div style="position:absolute;left:375.0px;top:1173.34px;transform:translateX(-50%);font:normal 22.5px/22.5px 'Liberation Sans', sans-serif;color:#000;white-space:nowrap">-5</div>
<div style="position:absolute;left:406.0px;top:1165.4px;width:58.0px;height:38.0px;background:#fff"></div>
<div style="position:absolute;left:435.0px;top:1173.34px;transform:translateX(-50%);font:normal 22.5px/22.5px 'Liberation Sans', sans-serif;color:#000;white-space:nowrap">0</div>
<div style="position:absolute;left:466.0px;top:1165.4px;width:58.0px;height:38.0px;background:#fff"></div>
<div style="position:absolute;left:495.0px;top:1173.34px;transform:translateX(-50%);font:normal 22.5px/22.5px 'Liberation Sans', sans-serif;color:#000;white-space:nowrap">0</div>
<div style="position:absolute;left:526.0px;top:1165.4px;width:58.0px;height:38.0px;background:#fff"></div>
<div style="position:absolute;left:555.0px;top:1173.34px;transform:translateX(-50%);font:normal 22.5px/22.5px 'Liberation Sans', sans-serif;color:#000;white-space:nowrap">-7</div>
<div style="position:absolute;left:2.0px;top:1205.4px;width:98.0px;height:38.0px;background:#c0c0c0"></div>
<div style="position:absolute;left:51.0px;top:1213.40px;transform:translateX(-50%);font:bold 24px/24px 'Liberation Sans', sans-serif;color:#000;white-space:nowrap">9550</div>
<div style="position:absolute;left:106.0px;top:1205.4px;width:58.0px;height:38.0px;background:#fff"></div>
<div style="position:absolute;left:135.0px;top:1213.37px;transform:translateX(-50%);font:normal 22.5px/22.5px 'Liberation Sans', sans-serif;color:#000;white-space:nowrap">0</div>
<div style="position:absolute;left:166.0px;top:1205.4px;width:58.0px;height:38.0px;background:#fff"></div>
<div style="position:absolute;left:195.0px;top:1213.37px;transform:translateX(-50%);font:normal 22.5px/22.5px 'Liberation Sans', sans-serif;color:#000;white-space:nowrap">0</div>
<div style="position:absolute;left:226.0px;top:1205.4px;width:58.0px;height:38.0px;background:#fff"></div>
<div style="position:absolute;left:255.0px;top:1213.37px;transform:translateX(-50%);font:normal 22.5px/22.5px 'Liberation Sans', sans-serif;color:#000;white-space:nowrap">3</div>
<div style="position:absolute;left:286.0px;top:1205.4px;width:58.0px;height:38.0px;background:#fff"></div>
<div style="position:absolute;left:315.0px;top:1213.37px;transform:translateX(-50%);font:normal 22.5px/22.5px 'Liberation Sans', sans-serif;color:#000;white-space:nowrap">2</div>
<div style="position:absolute;left:346.0px;top:1205.4px;width:58.0px;height:38.0px;background:#fff"></div>
<div style="position:absolute;left:375.0px;top:1213.37px;transform:translateX(-50%);font:normal 22.5px/22.5px 'Liberation Sans', sans-serif;color:#000;white-space:nowrap">-4</div>
<div style="position:absolute;left:406.0px;top:1205.4px;width:58.0px;height:38.0px;background:#fff"></div>
<div style="position:absolute;left:435.0px;top:1213.37px;transform:translateX(-50%);font:normal 22.5px/22.5px 'Liberation Sans', sans-serif;color:#000;white-space:nowrap">2</div>
<div style="position:absolute;left:466.0px;top:1205.4px;width:58.0px;height:38.0px;background:#fff"></div>
<div style="position:absolute;left:495.0px;top:1213.37px;transform:translateX(-50%);font:normal 22.5px/22.5px 'Liberation Sans', sans-serif;color:#000;white-space:nowrap">-3</div>
<div style="position:absolute;left:526.0px;top:1205.4px;width:58.0px;height:38.0px;background:#fff"></div>
<div style="position:absolute;left:555.0px;top:1213.37px;transform:translateX(-50%);font:normal 22.5px/22.5px 'Liberation Sans', sans-serif;color:#000;white-space:nowrap">-6</div>
<div style="position:absolute;left:2.0px;top:1245.4px;width:98.0px;height:38.0px;background:#c0c0c0"></div>
<div style="position:absolute;left:51.0px;top:1253.42px;transform:translateX(-50%);font:bold 24px/24px 'Liberation Sans', sans-serif;color:#000;white-space:nowrap">9800</div>
<div style="position:absolute;left:106.0px;top:1245.4px;width:58.0px;height:38.0px;background:#fff"></div>
<div style="position:absolute;left:135.0px;top:1253.39px;transform:translateX(-50%);font:normal 22.5px/22.5px 'Liberation Sans', sans-serif;color:#000;white-space:nowrap">0</div>
<div style="position:absolute;left:166.0px;top:1245.4px;width:58.0px;height:38.0px;background:#fff"></div>
<div style="position:absolute;left:195.0px;top:1253.39px;transform:translateX(-50%);font:normal 22.5px/22.5px 'Liberation Sans', sans-serif;color:#000;white-space:nowrap">0</div>
<div style="position:absolute;left:226.0px;top:1245.4px;width:58.0px;height:38.0px;background:#fff"></div>
<div style="position:absolute;left:255.0px;top:1253.39px;transform:translateX(-50%);font:normal 22.5px/22.5px 'Liberation Sans', sans-serif;color:#000;white-space:nowrap">0</div>
<div style="position:absolute;left:286.0px;top:1245.4px;width:58.0px;height:38.0px;background:#fff"></div>
<div style="position:absolute;left:315.0px;top:1253.39px;transform:translateX(-50%);font:normal 22.5px/22.5px 'Liberation Sans', sans-serif;color:#000;white-space:nowrap">2</div>
<div style="position:absolute;left:346.0px;top:1245.4px;width:58.0px;height:38.0px;background:#fff"></div>
<div style="position:absolute;left:375.0px;top:1253.39px;transform:translateX(-50%);font:normal 22.5px/22.5px 'Liberation Sans', sans-serif;color:#000;white-space:nowrap">-4</div>
<div style="position:absolute;left:406.0px;top:1245.4px;width:58.0px;height:38.0px;background:#fff"></div>
<div style="position:absolute;left:435.0px;top:1253.39px;transform:translateX(-50%);font:normal 22.5px/22.5px 'Liberation Sans', sans-serif;color:#000;white-space:nowrap">2</div>
<div style="position:absolute;left:466.0px;top:1245.4px;width:58.0px;height:38.0px;background:#fff"></div>
<div style="position:absolute;left:495.0px;top:1253.39px;transform:translateX(-50%);font:normal 22.5px/22.5px 'Liberation Sans', sans-serif;color:#000;white-space:nowrap">3</div>
<div style="position:absolute;left:526.0px;top:1245.4px;width:58.0px;height:38.0px;background:#fff"></div>
<div style="position:absolute;left:555.0px;top:1253.39px;transform:translateX(-50%);font:normal 22.5px/22.5px 'Liberation Sans', sans-serif;color:#000;white-space:nowrap">-3</div>
<div style="position:absolute;left:2.0px;top:1285.5px;width:98.0px;height:38.0px;background:#c0c0c0"></div>
<div style="position:absolute;left:51.0px;top:1293.45px;transform:translateX(-50%);font:bold 24px/24px 'Liberation Sans', sans-serif;color:#000;white-space:nowrap">10050</div>
<div style="position:absolute;left:106.0px;top:1285.5px;width:58.0px;height:38.0px;background:#fff"></div>
<div style="position:absolute;left:135.0px;top:1293.42px;transform:translateX(-50%);font:normal 22.5px/22.5px 'Liberation Sans', sans-serif;color:#000;white-space:nowrap">0</div>
<div style="position:absolute;left:166.0px;top:1285.5px;width:58.0px;height:38.0px;background:#fff"></div>
<div style="position:absolute;left:195.0px;top:1293.42px;transform:translateX(-50%);font:normal 22.5px/22.5px 'Liberation Sans', sans-serif;color:#000;white-space:nowrap">0</div>
<div style="position:absolute;left:226.0px;top:1285.5px;width:58.0px;height:38.0px;background:#fff"></div>
<div style="position:absolute;left:255.0px;top:1293.42px;transform:translateX(-50%);font:normal 22.5px/22.5px 'Liberation Sans', sans-serif;color:#000;white-space:nowrap">0</div>
<div style="position:absolute;left:286.0px;top:1285.5px;width:58.0px;height:38.0px;background:#fff"></div>
<div style="position:absolute;left:315.0px;top:1293.42px;transform:translateX(-50%);font:normal 22.5px/22.5px 'Liberation Sans', sans-serif;color:#000;white-space:nowrap">2</div>
<div style="position:absolute;left:346.0px;top:1285.5px;width:58.0px;height:38.0px;background:#fff"></div>
<div style="position:absolute;left:375.0px;top:1293.42px;transform:translateX(-50%);font:normal 22.5px/22.5px 'Liberation Sans', sans-serif;color:#000;white-space:nowrap">-3</div>
<div style="position:absolute;left:406.0px;top:1285.5px;width:58.0px;height:38.0px;background:#fff"></div>
<div style="position:absolute;left:435.0px;top:1293.42px;transform:translateX(-50%);font:normal 22.5px/22.5px 'Liberation Sans', sans-serif;color:#000;white-space:nowrap">4</div>
<div style="position:absolute;left:466.0px;top:1285.5px;width:58.0px;height:38.0px;background:#fff"></div>
<div style="position:absolute;left:495.0px;top:1293.42px;transform:translateX(-50%);font:normal 22.5px/22.5px 'Liberation Sans', sans-serif;color:#000;white-space:nowrap">-2</div>
<div style="position:absolute;left:526.0px;top:1285.5px;width:58.0px;height:38.0px;background:#fff"></div>
<div style="position:absolute;left:555.0px;top:1293.42px;transform:translateX(-50%);font:normal 22.5px/22.5px 'Liberation Sans', sans-serif;color:#000;white-space:nowrap">-6</div>
<div style="position:absolute;left:2.0px;top:1325.5px;width:98.0px;height:38.0px;background:#c0c0c0"></div>
<div style="position:absolute;left:51.0px;top:1333.48px;transform:translateX(-50%);font:bold 24px/24px 'Liberation Sans', sans-serif;color:#000;white-space:nowrap">10300</div>
<div style="position:absolute;left:106.0px;top:1325.5px;width:58.0px;height:38.0px;background:#fff"></div>
<div style="position:absolute;left:135.0px;top:1333.45px;transform:translateX(-50%);font:normal 22.5px/22.5px 'Liberation Sans', sans-serif;color:#000;white-space:nowrap">0</div>
<div style="position:absolute;left:166.0px;top:1325.5px;width:58.0px;height:38.0px;background:#fff"></div>
<div style="position:absolute;left:195.0px;top:1333.45px;transform:translateX(-50%);font:normal 22.5px/22.5px 'Liberation Sans', sans-serif;color:#000;white-space:nowrap">0</div>
<div style="position:absolute;left:226.0px;top:1325.5px;width:58.0px;height:38.0px;background:#fff"></div>
<div style="position:absolute;left:255.0px;top:1333.45px;transform:translateX(-50%);font:normal 22.5px/22.5px 'Liberation Sans', sans-serif;color:#000;white-space:nowrap">0</div>
<div style="position:absolute;left:286.0px;top:1325.5px;width:58.0px;height:38.0px;background:#fff"></div>
<div style="position:absolute;left:315.0px;top:1333.45px;transform:translateX(-50%);font:normal 22.5px/22.5px 'Liberation Sans', sans-serif;color:#000;white-space:nowrap">2</div>
<div style="position:absolute;left:346.0px;top:1325.5px;width:58.0px;height:38.0px;background:#fff"></div>
<div style="position:absolute;left:375.0px;top:1333.45px;transform:translateX(-50%);font:normal 22.5px/22.5px 'Liberation Sans', sans-serif;color:#000;white-space:nowrap">-1</div>
<div style="position:absolute;left:406.0px;top:1325.5px;width:58.0px;height:38.0px;background:#fff"></div>
<div style="position:absolute;left:435.0px;top:1333.45px;transform:translateX(-50%);font:normal 22.5px/22.5px 'Liberation Sans', sans-serif;color:#000;white-space:nowrap">4</div>
<div style="position:absolute;left:466.0px;top:1325.5px;width:58.0px;height:38.0px;background:#fff"></div>
<div style="position:absolute;left:495.0px;top:1333.45px;transform:translateX(-50%);font:normal 22.5px/22.5px 'Liberation Sans', sans-serif;color:#000;white-space:nowrap">-3</div>
<div style="position:absolute;left:526.0px;top:1325.5px;width:58.0px;height:38.0px;background:#fff"></div>
<div style="position:absolute;left:555.0px;top:1333.45px;transform:translateX(-50%);font:normal 22.5px/22.5px 'Liberation Sans', sans-serif;color:#000;white-space:nowrap">-8</div>
<div style="position:absolute;left:2.0px;top:1365.5px;width:98.0px;height:38.0px;background:#c0c0c0"></div>
<div style="position:absolute;left:51.0px;top:1373.51px;transform:translateX(-50%);font:bold 24px/24px 'Liberation Sans', sans-serif;color:#000;white-space:nowrap">10550</div>
<div style="position:absolute;left:106.0px;top:1365.5px;width:58.0px;height:38.0px;background:#fff"></div>
<div style="position:absolute;left:135.0px;top:1373.48px;transform:translateX(-50%);font:normal 22.5px/22.5px 'Liberation Sans', sans-serif;color:#000;white-space:nowrap">0</div>
<div style="position:absolute;left:166.0px;top:1365.5px;width:58.0px;height:38.0px;background:#fff"></div>
<div style="position:absolute;left:195.0px;top:1373.48px;transform:translateX(-50%);font:normal 22.5px/22.5px 'Liberation Sans', sans-serif;color:#000;white-space:nowrap">0</div>
<div style="position:absolute;left:226.0px;top:1365.5px;width:58.0px;height:38.0px;background:#fff"></div>
<div style="position:absolute;left:255.0px;top:1373.48px;transform:translateX(-50%);font:normal 22.5px/22.5px 'Liberation Sans', sans-serif;color:#000;white-space:nowrap">0</div>
<div style="position:absolute;left:286.0px;top:1365.5px;width:58.0px;height:38.0px;background:#fff"></div>
<div style="position:absolute;left:315.0px;top:1373.48px;transform:translateX(-50%);font:normal 22.5px/22.5px 'Liberation Sans', sans-serif;color:#000;white-space:nowrap">2</div>
<div style="position:absolute;left:346.0px;top:1365.5px;width:58.0px;height:38.0px;background:#fff"></div>
<div style="position:absolute;left:375.0px;top:1373.48px;transform:translateX(-50%);font:normal 22.5px/22.5px 'Liberation Sans', sans-serif;color:#000;white-space:nowrap">-2</div>
<div style="position:absolute;left:406.0px;top:1365.5px;width:58.0px;height:38.0px;background:#fff"></div>
<div style="position:absolute;left:435.0px;top:1373.48px;transform:translateX(-50%);font:normal 22.5px/22.5px 'Liberation Sans', sans-serif;color:#000;white-space:nowrap">2</div>
<div style="position:absolute;left:466.0px;top:1365.5px;width:58.0px;height:38.0px;background:#fff"></div>
<div style="position:absolute;left:495.0px;top:1373.48px;transform:translateX(-50%);font:normal 22.5px/22.5px 'Liberation Sans', sans-serif;color:#000;white-space:nowrap">-6</div>
<div style="position:absolute;left:526.0px;top:1365.5px;width:58.0px;height:38.0px;background:#fff"></div>
<div style="position:absolute;left:555.0px;top:1373.48px;transform:translateX(-50%);font:normal 22.5px/22.5px 'Liberation Sans', sans-serif;color:#000;white-space:nowrap">-8</div>
<div style="position:absolute;left:2.0px;top:1405.6px;width:98.0px;height:38.0px;background:#c0c0c0"></div>
<div style="position:absolute;left:51.0px;top:1413.54px;transform:translateX(-50%);font:bold 24px/24px 'Liberation Sans', sans-serif;color:#000;white-space:nowrap">10800</div>
<div style="position:absolute;left:106.0px;top:1405.6px;width:58.0px;height:38.0px;background:#fff"></div>
<div style="position:absolute;left:135.0px;top:1413.51px;transform:translateX(-50%);font:normal 22.5px/22.5px 'Liberation Sans', sans-serif;color:#000;white-space:nowrap">0</div>
<div style="position:absolute;left:166.0px;top:1405.6px;width:58.0px;height:38.0px;background:#fff"></div>
<div style="position:absolute;left:195.0px;top:1413.51px;transform:translateX(-50%);font:normal 22.5px/22.5px 'Liberation Sans', sans-serif;color:#000;white-space:nowrap">0</div>
<div style="position:absolute;left:226.0px;top:1405.6px;width:58.0px;height:38.0px;background:#fff"></div>
<div style="position:absolute;left:255.0px;top:1413.51px;transform:translateX(-50%);font:normal 22.5px/22.5px 'Liberation Sans', sans-serif;color:#000;white-space:nowrap">0</div>
<div style="position:absolute;left:286.0px;top:1405.6px;width:58.0px;height:38.0px;background:#fff"></div>
<div style="position:absolute;left:315.0px;top:1413.51px;transform:translateX(-50%);font:normal 22.5px/22.5px 'Liberation Sans', sans-serif;color:#000;white-space:nowrap">2</div>
<div style="position:absolute;left:346.0px;top:1405.6px;width:58.0px;height:38.0px;background:#fff"></div>
<div style="position:absolute;left:375.0px;top:1413.51px;transform:translateX(-50%);font:normal 22.5px/22.5px 'Liberation Sans', sans-serif;color:#000;white-space:nowrap">-3</div>
<div style="position:absolute;left:406.0px;top:1405.6px;width:58.0px;height:38.0px;background:#fff"></div>
<div style="position:absolute;left:435.0px;top:1413.51px;transform:translateX(-50%);font:normal 22.5px/22.5px 'Liberation Sans', sans-serif;color:#000;white-space:nowrap">0</div>
<div style="position:absolute;left:466.0px;top:1405.6px;width:58.0px;height:38.0px;background:#fff"></div>
<div style="position:absolute;left:495.0px;top:1413.51px;transform:translateX(-50%);font:normal 22.5px/22.5px 'Liberation Sans', sans-serif;color:#000;white-space:nowrap">-10</div>
<div style="position:absolute;left:526.0px;top:1405.6px;width:58.0px;height:38.0px;background:#fff"></div>
<div style="position:absolute;left:555.0px;top:1413.51px;transform:translateX(-50%);font:normal 22.5px/22.5px 'Liberation Sans', sans-serif;color:#000;white-space:nowrap">-8</div>
<div style="position:absolute;left:2.0px;top:1445.6px;width:98.0px;height:38.0px;background:#c0c0c0"></div>
<div style="position:absolute;left:51.0px;top:1453.56px;transform:translateX(-50%);font:bold 24px/24px 'Liberation Sans', sans-serif;color:#000;white-space:nowrap">11050</div>
<div style="position:absolute;left:106.0px;top:1445.6px;width:58.0px;height:38.0px;background:#fff"></div>
<div style="position:absolute;left:135.0px;top:1453.53px;transform:translateX(-50%);font:normal 22.5px/22.5px 'Liberation Sans', sans-serif;color:#000;white-space:nowrap">0</div>
<div style="position:absolute;left:166.0px;top:1445.6px;width:58.0px;height:38.0px;background:#fff"></div>
<div style="position:absolute;left:195.0px;top:1453.53px;transform:translateX(-50%);font:normal 22.5px/22.5px 'Liberation Sans', sans-serif;color:#000;white-space:nowrap">0</div>
<div style="position:absolute;left:226.0px;top:1445.6px;width:58.0px;height:38.0px;background:#fff"></div>
<div style="position:absolute;left:255.0px;top:1453.53px;transform:translateX(-50%);font:normal 22.5px/22.5px 'Liberation Sans', sans-serif;color:#000;white-space:nowrap">0</div>
<div style="position:absolute;left:286.0px;top:1445.6px;width:58.0px;height:38.0px;background:#fff"></div>
<div style="position:absolute;left:315.0px;top:1453.53px;transform:translateX(-50%);font:normal 22.5px/22.5px 'Liberation Sans', sans-serif;color:#000;white-space:nowrap">2</div>
<div style="position:absolute;left:346.0px;top:1445.6px;width:58.0px;height:38.0px;background:#fff"></div>
<div style="position:absolute;left:375.0px;top:1453.53px;transform:translateX(-50%);font:normal 22.5px/22.5px 'Liberation Sans', sans-serif;color:#000;white-space:nowrap">-4</div>
<div style="position:absolute;left:406.0px;top:1445.6px;width:58.0px;height:38.0px;background:#fff"></div>
<div style="position:absolute;left:435.0px;top:1453.53px;transform:translateX(-50%);font:normal 22.5px/22.5px 'Liberation Sans', sans-serif;color:#000;white-space:nowrap">-2</div>
<div style="position:absolute;left:466.0px;top:1445.6px;width:58.0px;height:38.0px;background:#fff"></div>
<div style="position:absolute;left:495.0px;top:1453.53px;transform:translateX(-50%);font:normal 22.5px/22.5px 'Liberation Sans', sans-serif;color:#000;white-space:nowrap">-10</div>
<div style="position:absolute;left:526.0px;top:1445.6px;width:58.0px;height:38.0px;background:#fff"></div>
<div style="position:absolute;left:555.0px;top:1453.53px;transform:translateX(-50%);font:normal 22.5px/22.5px 'Liberation Sans', sans-serif;color:#000;white-space:nowrap">-12</div>
<div style="position:absolute;left:2.0px;top:1485.6px;width:98.0px;height:38.0px;background:#c0c0c0"></div>
<div style="position:absolute;left:51.0px;top:1493.59px;transform:translateX(-50%);font:bold 24px/24px 'Liberation Sans', sans-serif;color:#000;white-space:nowrap">11300</div>
<div style="position:absolute;left:106.0px;top:1485.6px;width:58.0px;height:38.0px;background:#fff"></div>
<div style="position:absolute;left:135.0px;top:1493.56px;transform:translateX(-50%);font:normal 22.5px/22.5px 'Liberation Sans', sans-serif;color:#000;white-space:nowrap">0</div>
<div style="position:absolute;left:166.0px;top:1485.6px;width:58.0px;height:38.0px;background:#fff"></div>
<div style="position:absolute;left:195.0px;top:1493.56px;transform:translateX(-50%);font:normal 22.5px/22.5px 'Liberation Sans', sans-serif;color:#000;white-space:nowrap">0</div>
<div style="position:absolute;left:226.0px;top:1485.6px;width:58.0px;height:38.0px;background:#fff"></div>
<div style="position:absolute;left:255.0px;top:1493.56px;transform:translateX(-50%);font:normal 22.5px/22.5px 'Liberation Sans', sans-serif;color:#000;white-space:nowrap">0</div>
<div style="position:absolute;left:286.0px;top:1485.6px;width:58.0px;height:38.0px;background:#fff"></div>
<div style="position:absolute;left:315.0px;top:1493.56px;transform:translateX(-50%);font:normal 22.5px/22.5px 'Liberation Sans', sans-serif;color:#000;white-space:nowrap">0</div>
<div style="position:absolute;left:346.0px;top:1485.6px;width:58.0px;height:38.0px;background:#fff"></div>
<div style="position:absolute;left:375.0px;top:1493.56px;transform:translateX(-50%);font:normal 22.5px/22.5px 'Liberation Sans', sans-serif;color:#000;white-space:nowrap">-5</div>
<div style="position:absolute;left:406.0px;top:1485.6px;width:58.0px;height:38.0px;background:#fff"></div>
<div style="position:absolute;left:435.0px;top:1493.56px;transform:translateX(-50%);font:normal 22.5px/22.5px 'Liberation Sans', sans-serif;color:#000;white-space:nowrap">-4</div>
<div style="position:absolute;left:466.0px;top:1485.6px;width:58.0px;height:38.0px;background:#fff"></div>
<div style="position:absolute;left:495.0px;top:1493.56px;transform:translateX(-50%);font:normal 22.5px/22.5px 'Liberation Sans', sans-serif;color:#000;white-space:nowrap">-12</div>
<div style="position:absolute;left:526.0px;top:1485.6px;width:58.0px;height:38.0px;background:#fff"></div>
<div style="position:absolute;left:555.0px;top:1493.56px;transform:translateX(-50%);font:normal 22.5px/22.5px 'Liberation Sans', sans-serif;color:#000;white-space:nowrap">-12</div>
<div style="position:absolute;left:2.0px;top:1525.6px;width:98.0px;height:38.0px;background:#c0c0c0"></div>
<div style="position:absolute;left:51.0px;top:1533.62px;transform:translateX(-50%);font:bold 24px/24px 'Liberation Sans', sans-serif;color:#000;white-space:nowrap">11550</div>
<div style="position:absolute;left:106.0px;top:1525.6px;width:58.0px;height:38.0px;background:#fff"></div>
<div style="position:absolute;left:135.0px;top:1533.59px;transform:translateX(-50%);font:normal 22.5px/22.5px 'Liberation Sans', sans-serif;color:#000;white-space:nowrap">0</div>
<div style="position:absolute;left:166.0px;top:1525.6px;width:58.0px;height:38.0px;background:#fff"></div>
<div style="position:absolute;left:195.0px;top:1533.59px;transform:translateX(-50%);font:normal 22.5px/22.5px 'Liberation Sans', sans-serif;color:#000;white-space:nowrap">0</div>
<div style="position:absolute;left:226.0px;top:1525.6px;width:58.0px;height:38.0px;background:#fff"></div>
<div style="position:absolute;left:255.0px;top:1533.59px;transform:translateX(-50%);font:normal 22.5px/22.5px 'Liberation Sans', sans-serif;color:#000;white-space:nowrap">0</div>
<div style="position:absolute;left:286.0px;top:1525.6px;width:58.0px;height:38.0px;background:#fff"></div>
<div style="position:absolute;left:315.0px;top:1533.59px;transform:translateX(-50%);font:normal 22.5px/22.5px 'Liberation Sans', sans-serif;color:#000;white-space:nowrap">0</div>
<div style="position:absolute;left:346.0px;top:1525.6px;width:58.0px;height:38.0px;background:#fff"></div>
<div style="position:absolute;left:375.0px;top:1533.59px;transform:translateX(-50%);font:normal 22.5px/22.5px 'Liberation Sans', sans-serif;color:#000;white-space:nowrap">-5</div>
<div style="position:absolute;left:406.0px;top:1525.6px;width:58.0px;height:38.0px;background:#fff"></div>
<div style="position:absolute;left:435.0px;top:1533.59px;transform:translateX(-50%);font:normal 22.5px/22.5px 'Liberation Sans', sans-serif;color:#000;white-space:nowrap">-5</div>
<div style="position:absolute;left:466.0px;top:1525.6px;width:58.0px;height:38.0px;background:#fff"></div>
<div style="position:absolute;left:495.0px;top:1533.59px;transform:translateX(-50%);font:normal 22.5px/22.5px 'Liberation Sans', sans-serif;color:#000;white-space:nowrap">-8</div>
<div style="position:absolute;left:526.0px;top:1525.6px;width:58.0px;height:38.0px;background:#fff"></div>
<div style="position:absolute;left:555.0px;top:1533.59px;transform:translateX(-50%);font:normal 22.5px/22.5px 'Liberation Sans', sans-serif;color:#000;white-space:nowrap">-12</div>
<div style="position:absolute;left:2.0px;top:1565.7px;width:98.0px;height:38.0px;background:#c0c0c0"></div>
<div style="position:absolute;left:51.0px;top:1573.65px;transform:translateX(-50%);font:bold 24px/24px 'Liberation Sans', sans-serif;color:#000;white-space:nowrap">11800</div>
<div style="position:absolute;left:106.0px;top:1565.7px;width:58.0px;height:38.0px;background:#fff"></div>
<div style="position:absolute;left:135.0px;top:1573.62px;transform:translateX(-50%);font:normal 22.5px/22.5px 'Liberation Sans', sans-serif;color:#000;white-space:nowrap">0</div>
<div style="position:absolute;left:166.0px;top:1565.7px;width:58.0px;height:38.0px;background:#fff"></div>
<div style="position:absolute;left:195.0px;top:1573.62px;transform:translateX(-50%);font:normal 22.5px/22.5px 'Liberation Sans', sans-serif;color:#000;white-space:nowrap">0</div>
<div style="position:absolute;left:226.0px;top:1565.7px;width:58.0px;height:38.0px;background:#fff"></div>
<div style="position:absolute;left:255.0px;top:1573.62px;transform:translateX(-50%);font:normal 22.5px/22.5px 'Liberation Sans', sans-serif;color:#000;white-space:nowrap">0</div>
<div style="position:absolute;left:286.0px;top:1565.7px;width:58.0px;height:38.0px;background:#fff"></div>
<div style="position:absolute;left:315.0px;top:1573.62px;transform:translateX(-50%);font:normal 22.5px/22.5px 'Liberation Sans', sans-serif;color:#000;white-space:nowrap">0</div>
<div style="position:absolute;left:346.0px;top:1565.7px;width:58.0px;height:38.0px;background:#fff"></div>
<div style="position:absolute;left:375.0px;top:1573.62px;transform:translateX(-50%);font:normal 22.5px/22.5px 'Liberation Sans', sans-serif;color:#000;white-space:nowrap">-5</div>
<div style="position:absolute;left:406.0px;top:1565.7px;width:58.0px;height:38.0px;background:#fff"></div>
<div style="position:absolute;left:435.0px;top:1573.62px;transform:translateX(-50%);font:normal 22.5px/22.5px 'Liberation Sans', sans-serif;color:#000;white-space:nowrap">-5</div>
<div style="position:absolute;left:466.0px;top:1565.7px;width:58.0px;height:38.0px;background:#fff"></div>
<div style="position:absolute;left:495.0px;top:1573.62px;transform:translateX(-50%);font:normal 22.5px/22.5px 'Liberation Sans', sans-serif;color:#000;white-space:nowrap">-8</div>
<div style="position:absolute;left:526.0px;top:1565.7px;width:58.0px;height:38.0px;background:#fff"></div>
<div style="position:absolute;left:555.0px;top:1573.62px;transform:translateX(-50%);font:normal 22.5px/22.5px 'Liberation Sans', sans-serif;color:#000;white-space:nowrap">-12</div>
<div style="position:absolute;left:2.0px;top:1605.7px;width:98.0px;height:38.0px;background:#c0c0c0"></div>
<div style="position:absolute;left:51.0px;top:1613.68px;transform:translateX(-50%);font:bold 24px/24px 'Liberation Sans', sans-serif;color:#000;white-space:nowrap">12050</div>
<div style="position:absolute;left:106.0px;top:1605.7px;width:58.0px;height:38.0px;background:#fff"></div>
<div style="position:absolute;left:135.0px;top:1613.65px;transform:translateX(-50%);font:normal 22.5px/22.5px 'Liberation Sans', sans-serif;color:#000;white-space:nowrap">0</div>
<div style="position:absolute;left:166.0px;top:1605.7px;width:58.0px;height:38.0px;background:#fff"></div>
<div style="position:absolute;left:195.0px;top:1613.65px;transform:translateX(-50%);font:normal 22.5px/22.5px 'Liberation Sans', sans-serif;color:#000;white-space:nowrap">0</div>
<div style="position:absolute;left:226.0px;top:1605.7px;width:58.0px;height:38.0px;background:#fff"></div>
<div style="position:absolute;left:255.0px;top:1613.65px;transform:translateX(-50%);font:normal 22.5px/22.5px 'Liberation Sans', sans-serif;color:#000;white-space:nowrap">0</div>
<div style="position:absolute;left:286.0px;top:1605.7px;width:58.0px;height:38.0px;background:#fff"></div>
<div style="position:absolute;left:315.0px;top:1613.65px;transform:translateX(-50%);font:normal 22.5px/22.5px 'Liberation Sans', sans-serif;color:#000;white-space:nowrap">0</div>
<div style="position:absolute;left:346.0px;top:1605.7px;width:58.0px;height:38.0px;background:#fff"></div>
<div style="position:absolute;left:375.0px;top:1613.65px;transform:translateX(-50%);font:normal 22.5px/22.5px 'Liberation Sans', sans-serif;color:#000;white-space:nowrap">-5</div>
<div style="position:absolute;left:406.0px;top:1605.7px;width:58.0px;height:38.0px;background:#fff"></div>
<div style="position:absolute;left:435.0px;top:1613.65px;transform:translateX(-50%);font:normal 22.5px/22.5px 'Liberation Sans', sans-serif;color:#000;white-space:nowrap">-5</div>
<div style="position:absolute;left:466.0px;top:1605.7px;width:58.0px;height:38.0px;background:#fff"></div>
<div style="position:absolute;left:495.0px;top:1613.65px;transform:translateX(-50%);font:normal 22.5px/22.5px 'Liberation Sans', sans-serif;color:#000;white-space:nowrap">-8</div>
<div style="position:absolute;left:526.0px;top:1605.7px;width:58.0px;height:38.0px;background:#fff"></div>
<div style="position:absolute;left:555.0px;top:1613.65px;transform:translateX(-50%);font:normal 22.5px/22.5px 'Liberation Sans', sans-serif;color:#000;white-space:nowrap">-12</div>
</div>
<div style="position:absolute;left:1232.00px;top:225.70px;width:34.00px;height:1589.80px;background:#f0f0f0;"></div>
<div style="position:absolute;left:1248.00px;top:260.00px;width:4.00px;height:1464.50px;background:#8a8a8a;"></div>
<svg style="left:1288px;top:176px" width="2508" height="1076" viewBox="1288 176 2508 1076"><path d="M1430.6,429.8L1750.1,301.4L3740.3,376.1M1430.6,507.2L1750.1,378.8L3740.3,453.4M1430.6,584.6L1750.1,456.1L3740.3,530.8M1430.6,662.0L1750.1,533.5L3740.3,608.2M1430.6,739.4L1750.1,610.9L3740.3,685.6M1430.6,816.7L1750.1,688.3L3740.3,763.0M1430.6,894.1L1750.1,765.7L3740.3,840.3M1430.6,971.5L1750.1,843.0L3740.3,917.7M1430.6,1048.9L1750.1,920.4L3740.3,995.1M1430.6,1126.3L1750.1,997.8L3740.3,1072.5M1954.2,1024.8L1954.2,231.7M2158.3,1032.5L2158.3,239.3M2362.5,1040.1L2362.5,247.0M2566.6,1047.8L2566.6,254.6M2770.7,1055.4L2770.7,262.3M2974.8,1063.1L2974.8,270.0M3178.9,1070.8L3178.9,277.6M3383.1,1078.4L3383.1,285.3M3587.2,1086.1L3587.2,292.9" fill="none" stroke="#868485" stroke-width="1.8"/><path d="M1634.7,1153.3L1954.2,1024.8M1838.8,1160.9L2158.3,1032.5M2043.0,1168.6L2362.5,1040.1M2247.1,1176.2L2566.6,1047.8M2451.2,1183.9L2770.7,1055.4M2655.3,1191.6L2974.8,1063.1M2859.4,1199.2L3178.9,1070.8M3063.6,1206.9L3383.1,1078.4M3267.7,1214.5L3587.2,1086.1" fill="none" stroke="#7f7d7e" stroke-width="1.8"/><path d="M1430.6,1145.6L3420.8,1220.3M1430.6,1145.6v9M1532.7,1149.4v9M1634.7,1153.3v9M1736.8,1157.1v9M1838.8,1160.9v9M1940.9,1164.8v9M2043.0,1168.6v9M2145.0,1172.4v9M2247.1,1176.2v9M2349.1,1180.1v9M2451.2,1183.9v9M2553.3,1187.7v9M2655.3,1191.6v9M2757.4,1195.4v9M2859.4,1199.2v9M2961.5,1203.0v9M3063.6,1206.9v9M3165.6,1210.7v9M3267.7,1214.5v9M3369.7,1218.4v9" fill="none" stroke="#858384" stroke-width="2.4"/><path d="M1430.6,1145.6L1750.1,1017.1L3740.3,1091.8L3420.8,1220.3" fill="none" stroke="#f2f2f2" stroke-width="2.4"/><g stroke="#000" stroke-width="1.9" stroke-linejoin="round"><polygon points="1686.2,714.0 1737.2,715.9 1785.2,696.6 1734.1,694.7" fill="#8080ff"/><polygon points="1737.2,715.9 1788.3,717.8 1836.2,698.5 1785.2,696.6" fill="#8080ff"/><polygon points="1788.3,717.8 1839.3,719.7 1887.2,700.5 1836.2,698.5" fill="#8080ff"/><polygon points="1839.3,719.7 1890.3,721.6 1938.2,702.4 1887.2,700.5" fill="#8080ff"/><polygon points="1890.3,721.6 1941.3,723.5 1989.3,704.3 1938.2,702.4" fill="#8080ff"/><polygon points="1941.3,723.5 1992.4,725.5 2040.3,706.2 1989.3,704.3" fill="#8080ff"/><polygon points="1992.4,725.5 2043.4,727.4 2091.3,708.1 2040.3,706.2" fill="#8080ff"/><polygon points="2043.4,727.4 2094.4,729.3 2142.4,710.0 2091.3,708.1" fill="#8080ff"/><polygon points="2094.4,729.3 2145.5,731.2 2193.4,711.9 2142.4,710.0" fill="#8080ff"/><polygon points="2145.5,731.2 2196.5,733.1 2244.4,713.9 2193.4,711.9" fill="#8080ff"/><polygon points="2196.5,733.1 2247.5,735.0 2295.5,715.8 2244.4,713.9" fill="#8080ff"/><polygon points="2247.5,735.0 2298.6,737.0 2346.5,717.7 2295.5,715.8" fill="#8080ff"/><polygon points="2298.6,737.0 2349.6,738.9 2397.5,719.6 2346.5,717.7" fill="#8080ff"/><polygon points="2349.6,738.9 2400.6,740.8 2448.5,779.6 2397.5,719.6" fill="#8080ff"/><polygon points="2400.6,740.8 2451.7,742.7 2499.6,820.2 2448.5,779.6" fill="#8080ff"/><polygon points="2451.7,742.7 2502.7,744.6 2550.6,822.1 2499.6,820.2" fill="#8080ff"/><polygon points="2502.7,744.6 2553.7,707.8 2601.6,824.0 2550.6,822.1" fill="#8080ff"/><polygon points="2553.7,707.8 2604.7,709.8 2652.7,825.9 2601.6,824.0" fill="#8080ff"/><polygon points="2604.7,709.8 2655.8,673.0 2703.7,789.1 2652.7,825.9" fill="#8080ff"/><polygon points="2655.8,673.0 2706.8,655.5 2754.7,810.4 2703.7,789.1" fill="#9cb4f4"/><polygon points="2706.8,655.5 2757.8,734.8 2805.8,831.6 2754.7,810.4" fill="#8080ff"/><polygon points="2757.8,734.8 2808.9,794.8 2856.8,891.6 2805.8,831.6" fill="#8080ff"/><polygon points="2808.9,794.8 2859.9,854.7 2907.8,951.5 2856.8,891.6" fill="#8080ff"/><polygon points="2859.9,854.7 2910.9,914.7 2958.8,934.1 2907.8,951.5" fill="#8080ff"/><polygon points="2910.9,914.7 2961.9,916.6 3009.9,916.7 2958.8,934.1" fill="#8080ff"/><polygon points="2961.9,916.6 3013.0,918.5 3060.9,918.6 3009.9,916.7" fill="#8080ff"/><polygon points="3013.0,918.5 3064.0,843.1 3111.9,920.5 3060.9,918.6" fill="#8080ff"/><polygon points="3064.0,843.1 3115.0,767.6 3163.0,883.7 3111.9,920.5" fill="#8080ff"/><polygon points="3115.0,767.6 3166.1,827.5 3214.0,866.3 3163.0,883.7" fill="#8080ff"/><polygon points="3166.1,827.5 3217.1,713.4 3265.0,810.2 3214.0,866.3" fill="#8080ff"/><polygon points="3217.1,713.4 3268.1,812.0 3316.1,870.1 3265.0,810.2" fill="#8080ff"/><polygon points="3268.1,812.0 3319.2,833.3 3367.1,910.7 3316.1,870.1" fill="#8080ff"/><polygon points="3319.2,833.3 3370.2,893.2 3418.1,912.7 3367.1,910.7" fill="#8080ff"/><polygon points="3370.2,893.2 3421.2,972.5 3469.1,914.6 3418.1,912.7" fill="#8080ff"/><polygon points="3421.2,972.5 3472.2,974.5 3520.2,993.9 3469.1,914.6" fill="#8080ff"/><polygon points="3472.2,974.5 3523.3,1015.1 3571.2,995.8 3520.2,993.9" fill="#8080ff"/><polygon points="3523.3,1015.1 3574.3,939.6 3622.2,997.7 3571.2,995.8" fill="#8080ff"/><polygon points="3574.3,939.6 3625.3,941.5 3673.3,999.6 3622.2,997.7" fill="#8080ff"/><polygon points="3625.3,941.5 3676.4,943.4 3724.3,1001.5 3673.3,999.6" fill="#8080ff"/><polygon points="1622.3,739.7 1673.3,741.6 1737.2,715.9 1686.2,714.0" fill="#8080ff"/><polygon points="1673.3,741.6 1724.4,743.5 1788.3,717.8 1737.2,715.9" fill="#8080ff"/><polygon points="1724.4,743.5 1775.4,784.1 1839.3,719.7 1788.3,717.8" fill="#8080ff"/><polygon points="1775.4,784.1 1826.4,824.7 1890.3,721.6 1839.3,719.7" fill="#8080ff"/><polygon points="1826.4,824.7 1877.5,787.9 1941.3,723.5 1890.3,721.6" fill="#8080ff"/><polygon points="1877.5,787.9 1928.5,751.2 1992.4,725.5 1941.3,723.5" fill="#8080ff"/><polygon points="1928.5,751.2 1979.5,753.1 2043.4,727.4 1992.4,725.5" fill="#8080ff"/><polygon points="1979.5,753.1 2030.5,755.0 2094.4,729.3 2043.4,727.4" fill="#8080ff"/><polygon points="2030.5,755.0 2081.6,756.9 2145.5,731.2 2094.4,729.3" fill="#8080ff"/><polygon points="2081.6,756.9 2132.6,758.8 2196.5,733.1 2145.5,731.2" fill="#8080ff"/><polygon points="2132.6,758.8 2183.6,760.7 2247.5,735.0 2196.5,733.1" fill="#8080ff"/><polygon points="2183.6,760.7 2234.7,762.6 2298.6,737.0 2247.5,735.0" fill="#8080ff"/><polygon points="2234.7,762.6 2285.7,764.6 2349.6,738.9 2298.6,737.0" fill="#8080ff"/><polygon points="2285.7,764.6 2336.7,766.5 2400.6,740.8 2349.6,738.9" fill="#8080ff"/><polygon points="2336.7,766.5 2387.8,768.4 2451.7,742.7 2400.6,740.8" fill="#8080ff"/><polygon points="2387.8,768.4 2438.8,731.6 2502.7,744.6 2451.7,742.7" fill="#9cb4f4"/><polygon points="2438.8,731.6 2489.8,694.8 2553.7,707.8 2502.7,744.6" fill="#b0dcd8"/><polygon points="2489.8,694.8 2540.8,696.8 2604.7,709.8 2553.7,707.8" fill="#c4f4b0"/><polygon points="2540.8,696.8 2591.9,660.0 2655.8,673.0 2604.7,709.8" fill="#dcfc7c"/><polygon points="2591.9,660.0 2642.9,700.6 2706.8,655.5 2655.8,673.0" fill="#ecf454"/><polygon points="2642.9,700.6 2693.9,702.5 2757.8,734.8 2706.8,655.5" fill="#dcfc7c"/><polygon points="2693.9,702.5 2745.0,743.1 2808.9,794.8 2757.8,734.8" fill="#b0dcd8"/><polygon points="2745.0,743.1 2796.0,783.7 2859.9,854.7 2808.9,794.8" fill="#8080ff"/><polygon points="2796.0,783.7 2847.0,824.3 2910.9,914.7 2859.9,854.7" fill="#8080ff"/><polygon points="2847.0,824.3 2898.0,826.2 2961.9,916.6 2910.9,914.7" fill="#8080ff"/><polygon points="2898.0,826.2 2949.1,828.1 3013.0,918.5 2961.9,916.6" fill="#8080ff"/><polygon points="2949.1,828.1 3000.1,830.1 3064.0,843.1 3013.0,918.5" fill="#8080ff"/><polygon points="3000.1,830.1 3051.1,793.3 3115.0,767.6 3064.0,843.1" fill="#8080ff"/><polygon points="3051.1,793.3 3102.2,756.5 3166.1,827.5 3115.0,767.6" fill="#8080ff"/><polygon points="3102.2,756.5 3153.2,758.4 3217.1,713.4 3166.1,827.5" fill="#9cb4f4"/><polygon points="3153.2,758.4 3204.2,721.6 3268.1,812.0 3217.1,713.4" fill="#b0dcd8"/><polygon points="3204.2,721.6 3255.3,723.6 3319.2,833.3 3268.1,812.0" fill="#9cb4f4"/><polygon points="3255.3,723.6 3306.3,764.2 3370.2,893.2 3319.2,833.3" fill="#8080ff"/><polygon points="3306.3,764.2 3357.3,804.8 3421.2,972.5 3370.2,893.2" fill="#8080ff"/><polygon points="3357.3,804.8 3408.3,845.4 3472.2,974.5 3421.2,972.5" fill="#8080ff"/><polygon points="3408.3,845.4 3459.4,886.0 3523.3,1015.1 3472.2,974.5" fill="#8080ff"/><polygon points="3459.4,886.0 3510.4,907.2 3574.3,939.6 3523.3,1015.1" fill="#8080ff"/><polygon points="3510.4,907.2 3561.4,909.2 3625.3,941.5 3574.3,939.6" fill="#8080ff"/><polygon points="3561.4,909.2 3612.5,911.1 3676.4,943.4 3625.3,941.5" fill="#8080ff"/><polygon points="1558.4,765.4 1609.4,767.3 1673.3,741.6 1622.3,739.7" fill="#8080ff"/><polygon points="1609.4,767.3 1660.5,769.2 1724.4,743.5 1673.3,741.6" fill="#8080ff"/><polygon points="1660.5,769.2 1711.5,809.8 1775.4,784.1 1724.4,743.5" fill="#8080ff"/><polygon points="1711.5,809.8 1762.5,869.7 1826.4,824.7 1775.4,784.1" fill="#8080ff"/><polygon points="1762.5,869.7 1813.5,813.6 1877.5,787.9 1826.4,824.7" fill="#8080ff"/><polygon points="1813.5,813.6 1864.6,776.8 1928.5,751.2 1877.5,787.9" fill="#8080ff"/><polygon points="1864.6,776.8 1915.6,778.8 1979.5,753.1 1928.5,751.2" fill="#8080ff"/><polygon points="1915.6,778.8 1966.6,780.7 2030.5,755.0 1979.5,753.1" fill="#8080ff"/><polygon points="1966.6,780.7 2017.7,782.6 2081.6,756.9 2030.5,755.0" fill="#8080ff"/><polygon points="2017.7,782.6 2068.7,823.2 2132.6,758.8 2081.6,756.9" fill="#8080ff"/><polygon points="2068.7,823.2 2119.7,825.1 2183.6,760.7 2132.6,758.8" fill="#8080ff"/><polygon points="2119.7,825.1 2170.8,827.0 2234.7,762.6 2183.6,760.7" fill="#8080ff"/><polygon points="2170.8,827.0 2221.8,828.9 2285.7,764.6 2234.7,762.6" fill="#8080ff"/><polygon points="2221.8,828.9 2272.8,830.9 2336.7,766.5 2285.7,764.6" fill="#8080ff"/><polygon points="2272.8,830.9 2323.9,890.8 2387.8,768.4 2336.7,766.5" fill="#8080ff"/><polygon points="2323.9,890.8 2374.9,892.7 2438.8,731.6 2387.8,768.4" fill="#8080ff"/><polygon points="2374.9,892.7 2425.9,817.3 2489.8,694.8 2438.8,731.6" fill="#8080ff"/><polygon points="2425.9,817.3 2476.9,664.4 2540.8,696.8 2489.8,694.8" fill="#dcfc7c"/><polygon points="2476.9,664.4 2528.0,666.3 2591.9,660.0 2540.8,696.8" fill="#f4d828"/><polygon points="2528.0,666.3 2579.0,726.3 2642.9,700.6 2591.9,660.0" fill="#f4d828"/><polygon points="2579.0,726.3 2630.0,786.2 2693.9,702.5 2642.9,700.6" fill="#dcfc7c"/><polygon points="2630.0,786.2 2681.1,788.1 2745.0,743.1 2693.9,702.5" fill="#b0dcd8"/><polygon points="2681.1,788.1 2732.1,867.4 2796.0,783.7 2745.0,743.1" fill="#8080ff"/><polygon points="2732.1,867.4 2783.1,869.3 2847.0,824.3 2796.0,783.7" fill="#8080ff"/><polygon points="2783.1,869.3 2834.2,871.3 2898.0,826.2 2847.0,824.3" fill="#8080ff"/><polygon points="2834.2,871.3 2885.2,873.2 2949.1,828.1 2898.0,826.2" fill="#8080ff"/><polygon points="2885.2,873.2 2936.2,875.1 3000.1,830.1 2949.1,828.1" fill="#8080ff"/><polygon points="2936.2,875.1 2987.2,915.7 3051.1,793.3 3000.1,830.1" fill="#8080ff"/><polygon points="2987.2,915.7 3038.3,898.3 3102.2,756.5 3051.1,793.3" fill="#8080ff"/><polygon points="3038.3,898.3 3089.3,900.2 3153.2,758.4 3102.2,756.5" fill="#8080ff"/><polygon points="3089.3,900.2 3140.3,882.8 3204.2,721.6 3153.2,758.4" fill="#8080ff"/><polygon points="3140.3,882.8 3191.4,846.0 3255.3,723.6 3204.2,721.6" fill="#9cb4f4"/><polygon points="3191.4,846.0 3242.4,867.2 3306.3,764.2 3255.3,723.6" fill="#9cb4f4"/><polygon points="3242.4,867.2 3293.4,888.5 3357.3,804.8 3306.3,764.2" fill="#8080ff"/><polygon points="3293.4,888.5 3344.4,909.8 3408.3,845.4 3357.3,804.8" fill="#8080ff"/><polygon points="3344.4,909.8 3395.5,931.0 3459.4,886.0 3408.3,845.4" fill="#8080ff"/><polygon points="3395.5,931.0 3446.5,932.9 3510.4,907.2 3459.4,886.0" fill="#8080ff"/><polygon points="3446.5,932.9 3497.5,934.8 3561.4,909.2 3510.4,907.2" fill="#8080ff"/><polygon points="3497.5,934.8 3548.6,936.8 3612.5,911.1 3561.4,909.2" fill="#8080ff"/><polygon points="1494.5,791.0 1545.5,793.0 1609.4,767.3 1558.4,765.4" fill="#8080ff"/><polygon points="1545.5,793.0 1596.6,794.9 1660.5,769.2 1609.4,767.3" fill="#8080ff"/><polygon points="1596.6,794.9 1647.6,854.8 1711.5,809.8 1660.5,769.2" fill="#8080ff"/><polygon points="1647.6,854.8 1698.6,895.4 1762.5,869.7 1711.5,809.8" fill="#8080ff"/><polygon points="1698.6,895.4 1749.7,897.3 1813.5,813.6 1762.5,869.7" fill="#8080ff"/><polygon points="1749.7,897.3 1800.7,802.5 1864.6,776.8 1813.5,813.6" fill="#8080ff"/><polygon points="1800.7,802.5 1851.7,804.4 1915.6,778.8 1864.6,776.8" fill="#8080ff"/><polygon points="1851.7,804.4 1902.7,806.4 1966.6,780.7 1915.6,778.8" fill="#8080ff"/><polygon points="1902.7,806.4 1953.8,711.6 2017.7,782.6 1966.6,780.7" fill="#b0dcd8"/><polygon points="1953.8,711.6 2004.8,713.5 2068.7,823.2 2017.7,782.6" fill="#b0dcd8"/><polygon points="2004.8,713.5 2055.8,657.3 2119.7,825.1 2068.7,823.2" fill="#c4f4b0"/><polygon points="2055.8,657.3 2106.9,620.6 2170.8,827.0 2119.7,825.1" fill="#dcfc7c"/><polygon points="2106.9,620.6 2157.9,661.2 2221.8,828.9 2170.8,827.0" fill="#dcfc7c"/><polygon points="2157.9,661.2 2208.9,701.8 2272.8,830.9 2221.8,828.9" fill="#c4f4b0"/><polygon points="2208.9,701.8 2260.0,761.7 2323.9,890.8 2272.8,830.9" fill="#9cb4f4"/><polygon points="2260.0,761.7 2311.0,705.6 2374.9,892.7 2323.9,890.8" fill="#8080ff"/><polygon points="2311.0,705.6 2362.0,630.1 2425.9,817.3 2374.9,892.7" fill="#c4f4b0"/><polygon points="2362.0,630.1 2413.0,535.3 2476.9,664.4 2425.9,817.3" fill="#fc7c0c"/><polygon points="2413.0,535.3 2464.1,575.9 2528.0,666.3 2476.9,664.4" fill="#e80c50"/><polygon points="2464.1,575.9 2515.1,635.9 2579.0,726.3 2528.0,666.3" fill="#fc4c0c"/><polygon points="2515.1,635.9 2566.1,676.5 2630.0,786.2 2579.0,726.3" fill="#f4d828"/><polygon points="2566.1,676.5 2617.2,775.1 2681.1,788.1 2630.0,786.2" fill="#dcfc7c"/><polygon points="2617.2,775.1 2668.2,777.1 2732.1,867.4 2681.1,788.1" fill="#9cb4f4"/><polygon points="2668.2,777.1 2719.2,837.0 2783.1,869.3 2732.1,867.4" fill="#8080ff"/><polygon points="2719.2,837.0 2770.2,800.2 2834.2,871.3 2783.1,869.3" fill="#8080ff"/><polygon points="2770.2,800.2 2821.3,802.1 2885.2,873.2 2834.2,871.3" fill="#8080ff"/><polygon points="2821.3,802.1 2872.3,804.1 2936.2,875.1 2885.2,873.2" fill="#8080ff"/><polygon points="2872.3,804.1 2923.3,806.0 2987.2,915.7 2936.2,875.1" fill="#8080ff"/><polygon points="2923.3,806.0 2974.4,807.9 3038.3,898.3 2987.2,915.7" fill="#8080ff"/><polygon points="2974.4,807.9 3025.4,809.8 3089.3,900.2 3038.3,898.3" fill="#8080ff"/><polygon points="3025.4,809.8 3076.4,811.7 3140.3,882.8 3089.3,900.2" fill="#8080ff"/><polygon points="3076.4,811.7 3127.5,813.6 3191.4,846.0 3140.3,882.8" fill="#8080ff"/><polygon points="3127.5,813.6 3178.5,815.5 3242.4,867.2 3191.4,846.0" fill="#9cb4f4"/><polygon points="3178.5,815.5 3229.5,817.5 3293.4,888.5 3242.4,867.2" fill="#8080ff"/><polygon points="3229.5,817.5 3280.5,819.4 3344.4,909.8 3293.4,888.5" fill="#8080ff"/><polygon points="3280.5,819.4 3331.6,860.0 3395.5,931.0 3344.4,909.8" fill="#8080ff"/><polygon points="3331.6,860.0 3382.6,861.9 3446.5,932.9 3395.5,931.0" fill="#8080ff"/><polygon points="3382.6,861.9 3433.6,863.8 3497.5,934.8 3446.5,932.9" fill="#8080ff"/><polygon points="3433.6,863.8 3484.7,865.7 3548.6,936.8 3497.5,934.8" fill="#8080ff"/><polygon points="1462.5,803.9 1513.6,612.4 1545.5,793.0 1494.5,791.0" fill="#c4f4b0"/><polygon points="1513.6,612.4 1564.6,614.3 1596.6,794.9 1545.5,793.0" fill="#ecf454"/><polygon points="1564.6,614.3 1615.6,616.2 1647.6,854.8 1596.6,794.9" fill="#ecf454"/><polygon points="1615.6,616.2 1666.7,618.1 1698.6,895.4 1647.6,854.8" fill="#c4f4b0"/><polygon points="1666.7,618.1 1717.7,523.3 1749.7,897.3 1698.6,895.4" fill="#dcfc7c"/><polygon points="1717.7,523.3 1768.7,486.5 1800.7,802.5 1749.7,897.3" fill="#fcb00c"/><polygon points="1768.7,486.5 1819.8,488.4 1851.7,804.4 1800.7,802.5" fill="#fc4c0c"/><polygon points="1819.8,488.4 1870.8,548.4 1902.7,806.4 1851.7,804.4" fill="#fc7c0c"/><polygon points="1870.8,548.4 1921.8,608.3 1953.8,711.6 1902.7,806.4" fill="#fc7c0c"/><polygon points="1921.8,608.3 1972.8,590.9 2004.8,713.5 1953.8,711.6" fill="#fc4c0c"/><polygon points="1972.8,590.9 2023.9,592.8 2055.8,657.3 2004.8,713.5" fill="#f42424"/><polygon points="2023.9,592.8 2074.9,536.7 2106.9,620.6 2055.8,657.3" fill="#d80080"/><polygon points="2074.9,536.7 2125.9,558.0 2157.9,661.2 2106.9,620.6" fill="#d80080"/><polygon points="2125.9,558.0 2177.0,579.2 2208.9,701.8 2157.9,661.2" fill="#e80c50"/><polygon points="2177.0,579.2 2228.0,561.8 2260.0,761.7 2208.9,701.8" fill="#fc4c0c"/><polygon points="2228.0,561.8 2279.0,563.7 2311.0,705.6 2260.0,761.7" fill="#f42424"/><polygon points="2279.0,563.7 2330.1,468.9 2362.0,630.1 2311.0,705.6" fill="#c810b0"/><polygon points="2330.1,468.9 2381.1,548.2 2413.0,535.3 2362.0,630.1" fill="#b020d8"/><polygon points="2381.1,548.2 2432.1,627.5 2464.1,575.9 2413.0,535.3" fill="#b020d8"/><polygon points="2432.1,627.5 2483.1,648.7 2515.1,635.9 2464.1,575.9" fill="#e80c50"/><polygon points="2483.1,648.7 2534.2,670.0 2566.1,676.5 2515.1,635.9" fill="#f42424"/><polygon points="2534.2,670.0 2585.2,749.3 2617.2,775.1 2566.1,676.5" fill="#fcb00c"/><polygon points="2585.2,749.3 2636.2,751.2 2668.2,777.1 2617.2,775.1" fill="#dcfc7c"/><polygon points="2636.2,751.2 2687.3,753.1 2719.2,837.0 2668.2,777.1" fill="#dcfc7c"/><polygon points="2687.3,753.1 2738.3,755.0 2770.2,800.2 2719.2,837.0" fill="#c4f4b0"/><polygon points="2738.3,755.0 2789.3,718.3 2821.3,802.1 2770.2,800.2" fill="#dcfc7c"/><polygon points="2789.3,718.3 2840.4,720.2 2872.3,804.1 2821.3,802.1" fill="#ecf454"/><polygon points="2840.4,720.2 2891.4,760.8 2923.3,806.0 2872.3,804.1" fill="#dcfc7c"/><polygon points="2891.4,760.8 2942.4,801.4 2974.4,807.9 2923.3,806.0" fill="#c4f4b0"/><polygon points="2942.4,801.4 2993.4,861.3 3025.4,809.8 2974.4,807.9" fill="#b0dcd8"/><polygon points="2993.4,861.3 3044.5,863.3 3076.4,811.7 3025.4,809.8" fill="#9cb4f4"/><polygon points="3044.5,863.3 3095.5,865.2 3127.5,813.6 3076.4,811.7" fill="#9cb4f4"/><polygon points="3095.5,865.2 3146.5,867.1 3178.5,815.5 3127.5,813.6" fill="#9cb4f4"/><polygon points="3146.5,867.1 3197.6,869.0 3229.5,817.5 3178.5,815.5" fill="#9cb4f4"/><polygon points="3197.6,869.0 3248.6,870.9 3280.5,819.4 3229.5,817.5" fill="#9cb4f4"/><polygon points="3248.6,870.9 3299.6,872.8 3331.6,860.0 3280.5,819.4" fill="#9cb4f4"/><polygon points="3299.6,872.8 3350.7,874.7 3382.6,861.9 3331.6,860.0" fill="#8080ff"/><polygon points="3350.7,874.7 3401.7,876.7 3433.6,863.8 3382.6,861.9" fill="#8080ff"/><polygon points="3401.7,876.7 3452.7,878.6 3484.7,865.7 3433.6,863.8" fill="#8080ff"/><polygon points="1446.6,713.6 1497.6,618.8 1513.6,612.4 1462.5,803.9" fill="#fcb00c"/><polygon points="1497.6,618.8 1548.6,620.7 1564.6,614.3 1513.6,612.4" fill="#f42424"/><polygon points="1548.6,620.7 1599.7,661.3 1615.6,616.2 1564.6,614.3" fill="#f42424"/><polygon points="1599.7,661.3 1650.7,663.2 1666.7,618.1 1615.6,616.2" fill="#fc4c0c"/><polygon points="1650.7,663.2 1701.7,587.7 1717.7,523.3 1666.7,618.1" fill="#d80080"/><polygon points="1701.7,587.7 1752.8,589.7 1768.7,486.5 1717.7,523.3" fill="#b020d8"/><polygon points="1752.8,589.7 1803.8,688.3 1819.8,488.4 1768.7,486.5" fill="#b020d8"/><polygon points="1803.8,688.3 1854.8,748.3 1870.8,548.4 1819.8,488.4" fill="#e80c50"/><polygon points="1854.8,748.3 1905.8,692.1 1921.8,608.3 1870.8,548.4" fill="#fc4c0c"/><polygon points="1905.8,692.1 1956.9,713.4 1972.8,590.9 1921.8,608.3" fill="#fc4c0c"/><polygon points="1956.9,713.4 2007.9,715.3 2023.9,592.8 1972.8,590.9" fill="#fc4c0c"/><polygon points="2007.9,715.3 2058.9,717.2 2074.9,536.7 2023.9,592.8" fill="#f42424"/><polygon points="2058.9,717.2 2110.0,719.1 2125.9,558.0 2074.9,536.7" fill="#e80c50"/><polygon points="2110.0,719.1 2161.0,721.1 2177.0,579.2 2125.9,558.0" fill="#f42424"/><polygon points="2161.0,721.1 2212.0,723.0 2228.0,561.8 2177.0,579.2" fill="#f42424"/><polygon points="2212.0,723.0 2263.1,763.6 2279.0,563.7 2228.0,561.8" fill="#f42424"/><polygon points="2263.1,763.6 2314.1,804.2 2330.1,468.9 2279.0,563.7" fill="#f42424"/><polygon points="2314.1,804.2 2365.1,844.8 2381.1,548.2 2330.1,468.9" fill="#fc4c0c"/><polygon points="2365.1,844.8 2416.1,846.7 2432.1,627.5 2381.1,548.2" fill="#fcb00c"/><polygon points="2416.1,846.7 2467.2,848.6 2483.1,648.7 2432.1,627.5" fill="#f4d828"/><polygon points="2467.2,848.6 2518.2,850.5 2534.2,670.0 2483.1,648.7" fill="#ecf454"/><polygon points="2518.2,850.5 2569.2,852.4 2585.2,749.3 2534.2,670.0" fill="#dcfc7c"/><polygon points="2569.2,852.4 2620.3,854.4 2636.2,751.2 2585.2,749.3" fill="#c4f4b0"/><polygon points="2620.3,854.4 2671.3,856.3 2687.3,753.1 2636.2,751.2" fill="#c4f4b0"/><polygon points="2671.3,856.3 2722.3,858.2 2738.3,755.0 2687.3,753.1" fill="#c4f4b0"/><polygon points="2722.3,858.2 2773.4,860.1 2789.3,718.3 2738.3,755.0" fill="#c4f4b0"/><polygon points="2773.4,860.1 2824.4,862.0 2840.4,720.2 2789.3,718.3" fill="#dcfc7c"/><polygon points="2824.4,862.0 2875.4,863.9 2891.4,760.8 2840.4,720.2" fill="#c4f4b0"/><polygon points="2875.4,863.9 2926.4,865.8 2942.4,801.4 2891.4,760.8" fill="#b0dcd8"/><polygon points="2926.4,865.8 2977.5,867.8 2993.4,861.3 2942.4,801.4" fill="#9cb4f4"/><polygon points="2977.5,867.8 3028.5,869.7 3044.5,863.3 2993.4,861.3" fill="#8080ff"/><polygon points="3028.5,869.7 3079.5,871.6 3095.5,865.2 3044.5,863.3" fill="#8080ff"/><polygon points="3079.5,871.6 3130.6,873.5 3146.5,867.1 3095.5,865.2" fill="#8080ff"/><polygon points="3130.6,873.5 3181.6,875.4 3197.6,869.0 3146.5,867.1" fill="#8080ff"/><polygon points="3181.6,875.4 3232.6,877.3 3248.6,870.9 3197.6,869.0" fill="#8080ff"/><polygon points="3232.6,877.3 3283.7,879.3 3299.6,872.8 3248.6,870.9" fill="#8080ff"/><polygon points="3283.7,879.3 3334.7,881.2 3350.7,874.7 3299.6,872.8" fill="#8080ff"/><polygon points="3334.7,881.2 3385.7,883.1 3401.7,876.7 3350.7,874.7" fill="#8080ff"/><polygon points="3385.7,883.1 3436.7,885.0 3452.7,878.6 3401.7,876.7" fill="#8080ff"/><polygon points="1430.6,623.3 1481.6,818.6 1497.6,618.8 1446.6,713.6" fill="#fcb00c"/><polygon points="1481.6,818.6 1532.7,820.6 1548.6,620.7 1497.6,618.8" fill="#ecf454"/><polygon points="1532.7,820.6 1583.7,822.5 1599.7,661.3 1548.6,620.7" fill="#ecf454"/><polygon points="1583.7,822.5 1634.7,824.4 1650.7,663.2 1599.7,661.3" fill="#dcfc7c"/><polygon points="1634.7,824.4 1685.8,826.3 1701.7,587.7 1650.7,663.2" fill="#ecf454"/><polygon points="1685.8,826.3 1736.8,828.2 1752.8,589.7 1701.7,587.7" fill="#f4d828"/><polygon points="1736.8,828.2 1787.8,830.1 1803.8,688.3 1752.8,589.7" fill="#ecf454"/><polygon points="1787.8,830.1 1838.8,832.1 1854.8,748.3 1803.8,688.3" fill="#c4f4b0"/><polygon points="1838.8,832.1 1889.9,834.0 1905.8,692.1 1854.8,748.3" fill="#c4f4b0"/><polygon points="1889.9,834.0 1940.9,835.9 1956.9,713.4 1905.8,692.1" fill="#dcfc7c"/><polygon points="1940.9,835.9 1991.9,837.8 2007.9,715.3 1956.9,713.4" fill="#c4f4b0"/><polygon points="1991.9,837.8 2043.0,839.7 2058.9,717.2 2007.9,715.3" fill="#c4f4b0"/><polygon points="2043.0,839.7 2094.0,841.6 2110.0,719.1 2058.9,717.2" fill="#c4f4b0"/><polygon points="2094.0,841.6 2145.0,843.5 2161.0,721.1 2110.0,719.1" fill="#c4f4b0"/><polygon points="2145.0,843.5 2196.1,845.5 2212.0,723.0 2161.0,721.1" fill="#c4f4b0"/><polygon points="2196.1,845.5 2247.1,847.4 2263.1,763.6 2212.0,723.0" fill="#c4f4b0"/><polygon points="2247.1,847.4 2298.1,849.3 2314.1,804.2 2263.1,763.6" fill="#b0dcd8"/><polygon points="2298.1,849.3 2349.1,851.2 2365.1,844.8 2314.1,804.2" fill="#9cb4f4"/><polygon points="2349.1,851.2 2400.2,853.1 2416.1,846.7 2365.1,844.8" fill="#8080ff"/><polygon points="2400.2,853.1 2451.2,855.0 2467.2,848.6 2416.1,846.7" fill="#8080ff"/><polygon points="2451.2,855.0 2502.2,856.9 2518.2,850.5 2467.2,848.6" fill="#8080ff"/><polygon points="2502.2,856.9 2553.3,858.9 2569.2,852.4 2518.2,850.5" fill="#8080ff"/><polygon points="2553.3,858.9 2604.3,860.8 2620.3,854.4 2569.2,852.4" fill="#8080ff"/><polygon points="2604.3,860.8 2655.3,862.7 2671.3,856.3 2620.3,854.4" fill="#8080ff"/><polygon points="2655.3,862.7 2706.3,864.6 2722.3,858.2 2671.3,856.3" fill="#8080ff"/><polygon points="2706.3,864.6 2757.4,866.5 2773.4,860.1 2722.3,858.2" fill="#8080ff"/><polygon points="2757.4,866.5 2808.4,868.4 2824.4,862.0 2773.4,860.1" fill="#8080ff"/><polygon points="2808.4,868.4 2859.4,870.4 2875.4,863.9 2824.4,862.0" fill="#8080ff"/><polygon points="2859.4,870.4 2910.5,872.3 2926.4,865.8 2875.4,863.9" fill="#8080ff"/><polygon points="2910.5,872.3 2961.5,874.2 2977.5,867.8 2926.4,865.8" fill="#8080ff"/><polygon points="2961.5,874.2 3012.5,876.1 3028.5,869.7 2977.5,867.8" fill="#8080ff"/><polygon points="3012.5,876.1 3063.6,878.0 3079.5,871.6 3028.5,869.7" fill="#8080ff"/><polygon points="3063.6,878.0 3114.6,879.9 3130.6,873.5 3079.5,871.6" fill="#8080ff"/><polygon points="3114.6,879.9 3165.6,881.8 3181.6,875.4 3130.6,873.5" fill="#8080ff"/><polygon points="3165.6,881.8 3216.6,883.8 3232.6,877.3 3181.6,875.4" fill="#8080ff"/><polygon points="3216.6,883.8 3267.7,885.7 3283.7,879.3 3232.6,877.3" fill="#8080ff"/><polygon points="3267.7,885.7 3318.7,887.6 3334.7,881.2 3283.7,879.3" fill="#8080ff"/><polygon points="3318.7,887.6 3369.7,889.5 3385.7,883.1 3334.7,881.2" fill="#8080ff"/><polygon points="3369.7,889.5 3420.8,891.4 3436.7,885.0 3385.7,883.1" fill="#8080ff"/></g><g font-family="DejaVu Sans, Liberation Sans, sans-serif" font-size="21.3" fill="#f2f2f2"><text x="1419.6" y="359.4" text-anchor="end">24</text><text x="1419.6" y="398.0" text-anchor="end">22</text><text x="1419.6" y="436.7" text-anchor="end">20</text><text x="1419.6" y="475.4" text-anchor="end">18</text><text x="1419.6" y="514.1" text-anchor="end">16</text><text x="1419.6" y="552.8" text-anchor="end">14</text><text x="1419.6" y="591.5" text-anchor="end">12</text><text x="1419.6" y="630.2" text-anchor="end">10</text><text x="1419.6" y="668.9" text-anchor="end">8</text><text x="1419.6" y="707.6" text-anchor="end">6</text><text x="1419.6" y="746.3" text-anchor="end">4</text><text x="1419.6" y="784.9" text-anchor="end">2</text><text x="1419.6" y="823.6" text-anchor="end">0</text><text x="1419.6" y="862.3" text-anchor="end">-2</text><text x="1419.6" y="901.0" text-anchor="end">-4</text><text x="1419.6" y="939.7" text-anchor="end">-6</text><text x="1419.6" y="978.4" text-anchor="end">-8</text><text x="1419.6" y="1017.1" text-anchor="end">-10</text><text x="1419.6" y="1055.8" text-anchor="end">-12</text><text x="1419.6" y="1094.5" text-anchor="end">-14</text><text x="1419.6" y="1133.2" text-anchor="end">-16</text><text x="1429.1" y="1179.6" text-anchor="middle">1366</text><text x="1531.2" y="1183.4" text-anchor="middle">1900</text><text x="1633.2" y="1187.3" text-anchor="middle">2500</text><text x="1735.3" y="1191.1" text-anchor="middle">3100</text><text x="1837.3" y="1194.9" text-anchor="middle">3700</text><text x="1939.4" y="1198.8" text-anchor="middle">4300</text><text x="2041.5" y="1202.6" text-anchor="middle">4900</text><text x="2143.5" y="1206.4" text-anchor="middle">5500</text><text x="2245.6" y="1210.2" text-anchor="middle">6100</text><text x="2347.6" y="1214.1" text-anchor="middle">6700</text><text x="2449.7" y="1217.9" text-anchor="middle">7300</text><text x="2551.8" y="1221.7" text-anchor="middle">7800</text><text x="2653.8" y="1225.6" text-anchor="middle">8300</text><text x="2755.9" y="1229.4" text-anchor="middle">8800</text><text x="2857.9" y="1233.2" text-anchor="middle">9300</text><text x="2960.0" y="1237.0" text-anchor="middle">9800</text><text x="3062.1" y="1240.9" text-anchor="middle">10300</text><text x="3164.1" y="1244.7" text-anchor="middle">10800</text><text x="3266.2" y="1248.5" text-anchor="middle">11300</text><text x="3368.2" y="1252.4" text-anchor="middle">11800</text></g><text x="2537.7" y="253.7" text-anchor="middle" font-family="DejaVu Sans, Liberation Sans, sans-serif" font-size="31" fill="#f2f2f2">Einspritzung</text></svg>
<div style="position:absolute;left:3790.50px;top:182.00px;width:6.00px;height:38.00px;background:#fff;"></div>
<div style="position:absolute;left:1288.00px;top:1252.70px;width:2508.00px;height:54.00px;background:#4a4a4a;"></div>
<div style="position:absolute;left:1288.00px;top:1311.10px;width:2508.00px;height:5.80px;background:#5e5c5d;"></div>
<div style="position:absolute;left:1402.00px;top:1272.00px;width:141.50px;height:7.00px;background:#dedede;"></div>
<svg style="left:1455px;top:1254px" width="24" height="40" viewBox="0 0 24 40"><path d="M0.6 10L11.6 0.5L22.8 10V39H0.6Z" fill="#0078d7"/></svg>
<div style="position:absolute;top:1270.42px;font:italic bold 21px/21px 'DejaVu Sans', 'Liberation Sans', sans-serif;color:#f4f4f4;white-space:nowrap;left:1555.00px;">Zoom</div>
<div style="position:absolute;left:1650.00px;top:1269.40px;width:22.00px;height:22.20px;background:#f0f0f0;border-radius:4px;"></div>
<div style="position:absolute;top:1271.42px;font:italic bold 21px/21px 'DejaVu Sans', 'Liberation Sans', sans-serif;color:#f4f4f4;white-space:nowrap;left:1687.80px;">Rotate</div>
<div style="position:absolute;left:1806.40px;top:1268.00px;width:25.00px;height:25.00px;background:#0a5cc4;border-radius:5px;"></div>
<svg style="left:1806.4px;top:1268px" width="25" height="25" viewBox="0 0 25 25"><path d="M7 13l3.6 3.6L18 9" fill="none" stroke="#dfe9f7" stroke-width="1.8"/></svg>
<div style="position:absolute;top:1271.42px;font:italic bold 21px/21px 'DejaVu Sans', 'Liberation Sans', sans-serif;color:#f4f4f4;white-space:nowrap;left:1845.20px;">Solid</div>
<svg style="left:1288px;top:1317px" width="2508" height="505" viewBox="1288 1317 2508 505"><path d="M1408.7 1429.3H3724M1408.7 1515.1H3724M1408.7 1601.0H3724M1408.7 1686.9H3724" stroke="#868485" stroke-width="2" fill="none"/><path d="M1408.7 1763.4H3724" stroke="#858384" stroke-width="3" fill="none"/><polyline points="1420.8,1472.2 1479.6,1472.2 1538.4,1472.2 1597.2,1472.2 1656.0,1472.2 1714.8,1472.2 1773.6,1472.2 1832.4,1472.2 1891.2,1472.2 1950.0,1472.2 2008.8,1472.2 2067.6,1472.2 2126.4,1472.2 2185.2,1472.2 2244.0,1536.6 2302.8,1579.5 2361.6,1579.5 2420.4,1579.5 2479.2,1579.5 2538.0,1536.6 2596.8,1558.1 2655.6,1579.5 2714.4,1644.0 2773.2,1708.4 2832.0,1686.9 2890.8,1665.4 2949.6,1665.4 3008.4,1665.4 3067.2,1622.5 3126.0,1601.0 3184.8,1536.6 3243.6,1601.0 3302.4,1644.0 3361.2,1644.0 3420.0,1644.0 3478.8,1729.8 3537.6,1729.8 3596.4,1729.8 3655.2,1729.8 3714.0,1729.8" fill="none" stroke="#ccffff" stroke-width="5.6" stroke-linejoin="round"/><g fill="#ccffff" stroke="#000" stroke-width="2"><rect x="1410.8" y="1460.2" width="20" height="24"/><rect x="1469.6" y="1460.2" width="20" height="24"/><rect x="1528.4" y="1460.2" width="20" height="24"/><rect x="1587.2" y="1460.2" width="20" height="24"/><rect x="1646.0" y="1460.2" width="20" height="24"/><rect x="1704.8" y="1460.2" width="20" height="24"/><rect x="1763.6" y="1460.2" width="20" height="24"/><rect x="1822.4" y="1460.2" width="20" height="24"/><rect x="1881.2" y="1460.2" width="20" height="24"/><rect x="1940.0" y="1460.2" width="20" height="24"/><rect x="1998.8" y="1460.2" width="20" height="24"/><rect x="2057.6" y="1460.2" width="20" height="24"/><rect x="2116.4" y="1460.2" width="20" height="24"/><rect x="2175.2" y="1460.2" width="20" height="24"/><rect x="2234.0" y="1524.6" width="20" height="24"/><rect x="2292.8" y="1567.5" width="20" height="24"/><rect x="2351.6" y="1567.5" width="20" height="24"/><rect x="2410.4" y="1567.5" width="20" height="24"/><rect x="2469.2" y="1567.5" width="20" height="24"/><rect x="2528.0" y="1524.6" width="20" height="24"/><rect x="2586.8" y="1546.1" width="20" height="24"/><rect x="2645.6" y="1567.5" width="20" height="24"/><rect x="2704.4" y="1632.0" width="20" height="24"/><rect x="2763.2" y="1696.4" width="20" height="24"/><rect x="2822.0" y="1674.9" width="20" height="24"/><rect x="2880.8" y="1653.4" width="20" height="24"/><rect x="2939.6" y="1653.4" width="20" height="24"/><rect x="2998.4" y="1653.4" width="20" height="24"/><rect x="3057.2" y="1610.5" width="20" height="24"/><rect x="3116.0" y="1589.0" width="20" height="24"/><rect x="3174.8" y="1524.6" width="20" height="24"/><rect x="3233.6" y="1589.0" width="20" height="24"/><rect x="3292.4" y="1632.0" width="20" height="24"/><rect x="3351.2" y="1632.0" width="20" height="24"/><rect x="3410.0" y="1632.0" width="20" height="24"/><rect x="3468.8" y="1717.8" width="20" height="24"/><rect x="3527.6" y="1717.8" width="20" height="24"/><rect x="3586.4" y="1717.8" width="20" height="24"/><rect x="3645.2" y="1717.8" width="20" height="24"/><rect x="3704.0" y="1717.8" width="20" height="24"/></g><g font-family="DejaVu Sans, Liberation Sans, sans-serif" font-size="24" fill="#f2f2f2"><text x="1396.5" y="1436.7" text-anchor="end">2</text><text x="1396.5" y="1479.6" text-anchor="end">0</text><text x="1396.5" y="1522.5" text-anchor="end">-2</text><text x="1396.5" y="1565.5" text-anchor="end">-4</text><text x="1396.5" y="1608.4" text-anchor="end">-6</text><text x="1396.5" y="1651.4" text-anchor="end">-8</text><text x="1396.5" y="1694.3" text-anchor="end">-10</text><text x="1396.5" y="1737.2" text-anchor="end">-12</text><text x="1420.8" y="1792" text-anchor="middle">1366</text><text x="1538.4" y="1792" text-anchor="middle">1900</text><text x="1656.0" y="1792" text-anchor="middle">2500</text><text x="1773.6" y="1792" text-anchor="middle">3100</text><text x="1891.2" y="1792" text-anchor="middle">3700</text><text x="2008.8" y="1792" text-anchor="middle">4300</text><text x="2126.4" y="1792" text-anchor="middle">4900</text><text x="2244.0" y="1792" text-anchor="middle">5500</text><text x="2361.6" y="1792" text-anchor="middle">6100</text><text x="2479.2" y="1792" text-anchor="middle">6700</text><text x="2596.8" y="1792" text-anchor="middle">7300</text><text x="2714.4" y="1792" text-anchor="middle">7800</text><text x="2832.0" y="1792" text-anchor="middle">8300</text><text x="2949.6" y="1792" text-anchor="middle">8800</text><text x="3067.2" y="1792" text-anchor="middle">9300</text><text x="3184.8" y="1792" text-anchor="middle">9800</text><text x="3302.4" y="1792" text-anchor="middle">10300</text><text x="3420.0" y="1792" text-anchor="middle">10800</text><text x="3537.6" y="1792" text-anchor="middle">11300</text><text x="3655.2" y="1792" text-anchor="middle">11800</text></g><text x="3443.3" y="1370.9" font-family="DejaVu Sans, Liberation Sans, sans-serif" font-size="33.5" fill="#f2f2f2">Spalte 8: 95%</text></svg>
<div style="position:absolute;left:1288.00px;top:1820.80px;width:2508.00px;height:6.00px;background:#4c4a4b;"></div>
<div style="position:absolute;top:1860.84px;font:normal bold 31.5px/31.5px 'Liberation Sans', sans-serif;color:#f2f2f2;white-space:nowrap;letter-spacing:0.309px;left:652.80px;">For Akrapovic: S-B10SO7-HZDFT+E-B10R5 or E-B10E5</div>
<div style="position:absolute;left:845.00px;top:1849.50px;width:1.50px;height:7.50px;background:#a0a0a0;"></div>
<div style="position:absolute;left:3456.50px;top:1862.80px;width:335.70px;height:72.00px;background:#f0f0f0;border-radius:36px;box-shadow:2px 2px 3px rgba(0,0,0,.35);"></div>
<div style="position:absolute;top:1879.87px;font:normal normal 33px/33px 'Liberation Sans', sans-serif;color:#000;white-space:nowrap;letter-spacing:-0.938px;left:3529.00px;">ANWENDEN</div>
<div style="position:absolute;left:0.00px;top:1986.50px;width:3796.00px;height:7.00px;background:#ffffff;"></div>
<div style="position:absolute;left:0.00px;top:1993.00px;width:3796.00px;height:51.00px;background:#d4d4d4;"></div>
<svg style="left:70px;top:2005px" width="50" height="39" viewBox="70 2005 50 39">
<path d="M76 2017h7v-5.4h9.4v5.4h8v-5.4h9.6v5.4h5.5v27H76z" fill="#5c5c5c"/><path d="M81 2032h7.5M101 2032h8M105 2028v8" stroke="#d4d4d4" stroke-width="2.6"/></svg>
<div style="position:absolute;left:193.50px;top:1997.00px;width:2.40px;height:47.00px;background:#909090;"></div>
<div style="position:absolute;left:195.90px;top:1997.00px;width:2.40px;height:47.00px;background:#f6f6f6;"></div>
<svg style="left:196px;top:2004px" width="42" height="40" viewBox="196 2004 42 40"><circle cx="216" cy="2028" r="18.2" fill="none" stroke="#8a8a8a" stroke-width="1.6"/><circle cx="216" cy="2028" r="16" fill="#5a5a5a"/><rect x="213.2" y="2022" width="5.6" height="22" fill="#f4f4f4"/><rect x="213.2" y="2014.5" width="5.6" height="5" fill="#f4f4f4"/></svg>
<div style="position:absolute;top:2012.98px;font:normal normal 30.5px/30.5px 'Liberation Sans', sans-serif;color:#000;white-space:nowrap;letter-spacing:-0.544px;left:242.30px;">Datenerfassung OFF</div>
<div style="position:absolute;left:535.50px;top:1997.00px;width:2.40px;height:47.00px;background:#909090;"></div>
<div style="position:absolute;left:537.90px;top:1997.00px;width:2.40px;height:47.00px;background:#f6f6f6;"></div>
<svg style="left:538px;top:2005px" width="40" height="39" viewBox="0 0 40 39" fill="none" stroke="#555"><rect x="9" y="9" width="22" height="26" rx="3" stroke-width="3"/><rect x="15" y="16" width="10" height="12" fill="#555"/><path d="M2 16h7M2 23h7M2 30h7M31 16h7M31 23h7M31 30h7M14 3v6M20 3v6M26 3v6" stroke-width="2.6"/></svg>
<div style="position:absolute;left:634.50px;top:1997.00px;width:2.40px;height:47.00px;background:#909090;"></div>
<div style="position:absolute;left:636.90px;top:1997.00px;width:2.40px;height:47.00px;background:#f6f6f6;"></div>
<div style="position:absolute;top:2012.98px;font:normal normal 30.5px/30.5px 'Liberation Sans', sans-serif;color:#000;white-space:nowrap;letter-spacing:-0.9px;left:647.00px;">DataLogger</div>
</body></html>
